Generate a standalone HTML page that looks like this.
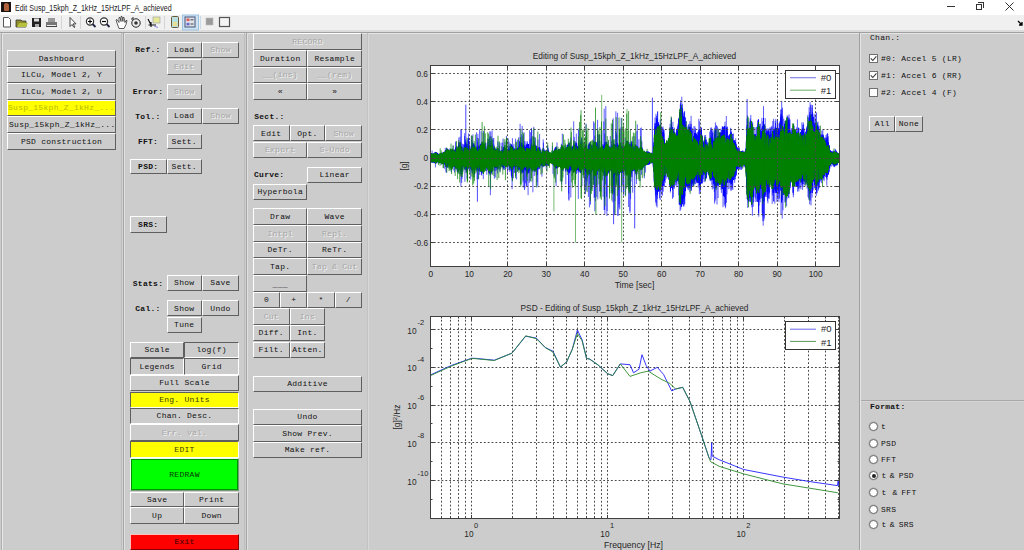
<!DOCTYPE html><html><head><meta charset="utf-8"><style>
*{margin:0;padding:0;box-sizing:border-box}
html,body{width:1024px;height:550px;overflow:hidden;background:#cccccc;position:relative}
.a{position:absolute}
.b{position:absolute;background:#cccccc;border-top:1px solid #fff;border-left:1px solid #fff;border-right:1px solid #5f5f5f;border-bottom:1px solid #5f5f5f;
 font-family:'Liberation Mono', monospace;font-size:8px;letter-spacing:0.27px;color:#111;display:flex;align-items:center;justify-content:center;white-space:pre;line-height:1;padding-top:0.5px}
.p{border-top:1px solid #5f5f5f;border-left:1px solid #5f5f5f;border-right:1px solid #fff;border-bottom:1px solid #fff}
.d{color:#a6a6a6;text-shadow:1px 1px 0 #f4f4f4}
.bo{font-weight:bold}
.l{position:absolute;font-family:'Liberation Mono', monospace;font-size:8px;letter-spacing:0.27px;color:#111;white-space:pre;line-height:1}
</style></head><body><div class="a" style="left:0;top:0;width:1024px;height:15px;background:#fff"></div>
<div class="a" style="left:1px;top:2px;width:10px;height:10px;background:#1a1410"></div>
<div class="a" style="left:4px;top:3px;width:5px;height:8px;background:#b0603a;border-radius:2px 3px 1px 1px"></div>
<div class="a" style="left:14.5px;top:2px;font-family:'Liberation Sans', sans-serif;font-size:9.6px;line-height:11px;color:#222;white-space:pre;transform:scaleX(0.74);transform-origin:0 0">Edit Susp_15kph_Z_1kHz_15HzLPF_A_achieved</div>
<div class="a" style="left:947px;top:6px;width:8px;height:1px;background:#333"></div>
<div class="a" style="left:976px;top:4px;width:6px;height:6px;border:1px solid #333"></div>
<div class="a" style="left:978px;top:2px;width:6px;height:6px;border-top:1px solid #333;border-right:1px solid #333"></div>
<svg class="a" style="left:1005px;top:2px" width="9" height="9"><path d="M0.5 0.5L8.5 8.5M8.5 0.5L0.5 8.5" stroke="#333" stroke-width="1"/></svg>
<div class="a" style="left:0;top:15px;width:1024px;height:16px;background:#f0f0f0"></div>
<div class="a" style="left:0;top:30px;width:1024px;height:2px;background:#dcdcdc"></div>
<div class="a" style="left:0;top:32px;width:1024px;height:1px;background:#a0a0a0"></div>
<svg class="a" style="left:0;top:14px" width="240" height="17">
<path d="M3.5 3.5h5l2 2v7.5h-7z" fill="#fff" stroke="#555"/>
<path d="M16 6h5l1 1h4v6h-10z" fill="#8c8a2a" stroke="#333" stroke-width="0.8"/><path d="M17 13l2-4h9l-2 4z" fill="#b8c040"/>
<rect x="32" y="4" width="9" height="9" fill="#222"/><rect x="34" y="4.5" width="5" height="3" fill="#ddd"/><rect x="35" y="10" width="4" height="3" fill="#aaa"/>
<path d="M46 8h11v4h-11z" fill="#777"/><path d="M48 4h7v4h-7z" fill="#999"/><rect x="47" y="11" width="9" height="2" fill="#eee"/><path d="M46 12.5h11" stroke="#444"/>
<rect x="61" y="2" width="1" height="13" fill="#d4d4d4"/>
<path d="M70 3.5v9l2-2 2 3 1-0.6-2-3h3z" fill="#fff" stroke="#333" stroke-width="0.9"/>
<rect x="80" y="2" width="1" height="13" fill="#d4d4d4"/>
<circle cx="90" cy="7.5" r="3.6" fill="#fff" stroke="#333" stroke-width="1.2"/><path d="M88 7.5h4M90 5.5v4" stroke="#000" stroke-width="1.2"/><path d="M92.5 10l3 3" stroke="#224" stroke-width="1.8"/>
<circle cx="104" cy="7.5" r="3.6" fill="#fff" stroke="#333" stroke-width="1.2"/><path d="M102 7.5h4" stroke="#000" stroke-width="1.2"/><path d="M106.5 10l3 3" stroke="#224" stroke-width="1.8"/>
<path d="M117 9l-1-3 1-0.5 2 3v-5l1 0 1 4v-5h1l1 5 0-4h1l1 5 1-2h1l-1 4-2 4h-5z" fill="#fff" stroke="#333" stroke-width="0.8"/>
<circle cx="136" cy="9" r="4.2" fill="none" stroke="#222" stroke-width="1"/><circle cx="136" cy="9" r="1.8" fill="#333"/><path d="M131 5l2 0 0-2" stroke="#222" fill="none"/>
<rect x="145" y="2" width="1" height="13" fill="#d4d4d4"/>
<rect x="153" y="3" width="7" height="6" fill="#e6e89a" stroke="#999" stroke-width="0.6"/><path d="M148 5l3 6h5M151 8v5M148.5 11h5" stroke="#111" stroke-width="1.2" fill="none"/><path d="M154 12l4 1.5" stroke="#88d" />
<rect x="164" y="2" width="1" height="13" fill="#d4d4d4"/>
<rect x="171.5" y="2.5" width="7" height="11" rx="1" fill="#b8e0e0" stroke="#6b5a3a" stroke-width="1"/><rect x="173" y="8" width="4" height="4" fill="#e8e090"/>
<rect x="182.5" y="1" width="16" height="15" fill="#cfe3f3" stroke="#9cc2e2"/>
<rect x="185" y="3" width="10" height="10" fill="#dfe4ea" stroke="#5a6a8a" stroke-width="1.2"/><rect x="186.5" y="4.5" width="3" height="2.6" fill="#e05a5a"/><rect x="186.5" y="8.8" width="3" height="2.6" fill="#6a6ad0"/><path d="M190.5 5.8h3M190.5 10h3" stroke="#444"/>
<rect x="200" y="2" width="1" height="13" fill="#c9d9e9"/>
<rect x="206" y="4" width="7" height="7" fill="#9a9a9a" stroke="#bbb" stroke-width="0.6"/>
<rect x="219.5" y="3.5" width="10" height="9" fill="#f4f4f4" stroke="#555" stroke-width="1.2"/>
</svg>
<svg class="a" style="left:1017px;top:20px" width="7" height="7"><path d="M1 1l4 4M5 2v3h-3" stroke="#000" stroke-width="1.3" fill="none"/></svg>
<div class="a" style="left:0px;top:33px;width:1024px;height:1px;background:#e6e6e6"></div>
<div class="a" style="left:1px;top:33px;width:1px;height:517px;background:#b0b0b0"></div>
<div class="a" style="left:2px;top:33px;width:1px;height:517px;background:#e6e6e6"></div>
<div class="a" style="left:121px;top:33px;width:1px;height:517px;background:#bdbdbd"></div>
<div class="a" style="left:122px;top:33px;width:1px;height:517px;background:#d2d2d2"></div>
<div class="a" style="left:123px;top:33px;width:1px;height:517px;background:#a6a6a6"></div>
<div class="a" style="left:124px;top:33px;width:1px;height:517px;background:#e0e0e0"></div>
<div class="a" style="left:244px;top:33px;width:1px;height:517px;background:#bfbfbf"></div>
<div class="a" style="left:246px;top:33px;width:1px;height:517px;background:#a6a6a6"></div>
<div class="a" style="left:247px;top:33px;width:1px;height:517px;background:#e0e0e0"></div>
<div class="a" style="left:367px;top:33px;width:1px;height:517px;background:#c2c2c2"></div>
<div class="a" style="left:368px;top:33px;width:1px;height:517px;background:#d8d8d8"></div>
<div class="a" style="left:859px;top:33px;width:1px;height:517px;background:#a0a0a0"></div>
<div class="a" style="left:860px;top:400px;width:164px;height:1px;background:#a8a8a8"></div>
<div class="a" style="left:860px;top:401px;width:164px;height:1px;background:#d6d6d6"></div>
<div class="a" style="left:860px;top:33px;width:1px;height:517px;background:#e4e4e4"></div>
<div class="b " style="left:7px;top:50px;width:109px;height:17px;">Dashboard</div>
<div class="b " style="left:7px;top:67px;width:109px;height:16px;">ILCu, Model 2, Y</div>
<div class="b " style="left:7px;top:83px;width:109px;height:17px;">ILCu, Model 2, U</div>
<div class="b d" style="left:7px;top:100px;width:109px;height:16px;background:#ffff00;color:#b8b800;text-shadow:none;justify-content:flex-start;padding-left:0px">Susp_15kph_Z_1kHz_...</div>
<div class="b " style="left:7px;top:116px;width:109px;height:17px;justify-content:flex-start;padding-left:1px">Susp_15kph_Z_1kHz_...</div>
<div class="b " style="left:7px;top:133px;width:109px;height:16.5px;">PSD construction</div>
<div class="l" style="left:135.3px;top:46.0px;font-weight:bold;">Ref.:</div>
<div class="b " style="left:166.5px;top:42px;width:35.5px;height:15.5px;">Load</div>
<div class="b d" style="left:202px;top:42px;width:37px;height:15.5px;">Show</div>
<div class="b d" style="left:166.5px;top:58.5px;width:35.5px;height:16.0px;">Edit</div>
<div class="l" style="left:132.8px;top:87.8px;font-weight:bold;">Error:</div>
<div class="b d" style="left:166.5px;top:83.5px;width:35.5px;height:16.0px;">Show</div>
<div class="l" style="left:135.3px;top:112.5px;font-weight:bold;">Tol.:</div>
<div class="b " style="left:166.5px;top:108px;width:35.5px;height:16px;">Load</div>
<div class="b d" style="left:202px;top:108px;width:37px;height:16px;">Show</div>
<div class="l" style="left:137.9px;top:137.5px;font-weight:bold;">FFT:</div>
<div class="b " style="left:166.5px;top:133.5px;width:35.5px;height:15.5px;">Sett.</div>
<div class="b bo" style="left:130px;top:158.5px;width:36.5px;height:15.5px;">PSD:</div>
<div class="b " style="left:166.5px;top:158.5px;width:35.5px;height:15.5px;">Sett.</div>
<div class="b bo" style="left:130px;top:216px;width:36.5px;height:16.5px;">SRS:</div>
<div class="l" style="left:132.8px;top:279.5px;font-weight:bold;">Stats:</div>
<div class="b " style="left:166.5px;top:275px;width:35.5px;height:16px;">Show</div>
<div class="b " style="left:202px;top:275px;width:37px;height:16px;">Save</div>
<div class="l" style="left:135.3px;top:304.8px;font-weight:bold;">Cal.:</div>
<div class="b " style="left:166.5px;top:300.3px;width:35.5px;height:16.0px;">Show</div>
<div class="b " style="left:202px;top:300.3px;width:37px;height:16.0px;">Undo</div>
<div class="b " style="left:166.5px;top:317px;width:35.5px;height:16px;">Tune</div>
<div class="b " style="left:130px;top:341.5px;width:54.30000000000001px;height:16.5px;">Scale</div>
<div class="b p" style="left:184.3px;top:341.5px;width:54.69999999999999px;height:16.5px;">log(f)</div>
<div class="b p" style="left:130px;top:358px;width:54.30000000000001px;height:16.5px;">Legends</div>
<div class="b p" style="left:184.3px;top:358px;width:54.69999999999999px;height:16.5px;">Grid</div>
<div class="b " style="left:130px;top:375px;width:109px;height:16.30000000000001px;">Full Scale</div>
<div class="b p" style="left:130px;top:391.5px;width:109px;height:16.19999999999999px;background:#ffff00;color:#3a3a00">Eng. Units</div>
<div class="b p" style="left:130px;top:407.7px;width:109px;height:16.5px;">Chan. Desc.</div>
<div class="b d" style="left:130px;top:424.4px;width:109px;height:16.600000000000023px;">Err. val.</div>
<div class="b p" style="left:130px;top:441px;width:109px;height:17px;background:#ffff00;color:#3a3a00">EDIT</div>
<div class="b" style="left:130px;top:458px;width:109px;height:33px;background:#00ff00;border-color:#eaffea #70a070 #70a070 #eaffea;color:#063a06"><div class="a" style="left:0;top:0;right:0;bottom:0;border:1px solid #009000"></div>REDRAW</div>
<div class="b " style="left:130px;top:491.5px;width:54.30000000000001px;height:15.800000000000011px;">Save</div>
<div class="b " style="left:184.3px;top:491.5px;width:54.69999999999999px;height:15.800000000000011px;">Print</div>
<div class="b " style="left:130px;top:507.3px;width:54.30000000000001px;height:17.099999999999966px;">Up</div>
<div class="b " style="left:184.3px;top:507.3px;width:54.69999999999999px;height:17.099999999999966px;">Down</div>
<div class="b bo" style="left:130px;top:533.5px;width:109px;height:16.0px;background:#ff0000;color:#700000;border-color:#ffc0c0 #800 #800 #ffc0c0">Exit</div>
<div class="b d" style="left:253px;top:33.2px;width:109px;height:16.699999999999996px;">RECORD</div>
<div class="b " style="left:253px;top:50px;width:54.39999999999998px;height:16.5px;">Duration</div>
<div class="b " style="left:307.4px;top:50px;width:54.60000000000002px;height:16.5px;">Resample</div>
<div class="b d" style="left:253px;top:66.5px;width:54.39999999999998px;height:16.5px;">__(ins)</div>
<div class="b d" style="left:307.4px;top:66.5px;width:54.60000000000002px;height:16.5px;">__(rem)</div>
<div class="b " style="left:253px;top:83px;width:54.39999999999998px;height:16.5px;">«</div>
<div class="b " style="left:307.4px;top:83px;width:54.60000000000002px;height:16.5px;">»</div>
<div class="l" style="left:254.2px;top:112.8px;font-weight:bold;">Sect.:</div>
<div class="b " style="left:253px;top:125.2px;width:36.5px;height:16.299999999999997px;">Edit</div>
<div class="b " style="left:289.5px;top:125.2px;width:35.80000000000001px;height:16.299999999999997px;">Opt.</div>
<div class="b d" style="left:325.3px;top:125.2px;width:36.69999999999999px;height:16.299999999999997px;">Show</div>
<div class="b d" style="left:253px;top:141.5px;width:54.39999999999998px;height:16.5px;">Export</div>
<div class="b d" style="left:307.4px;top:141.5px;width:54.60000000000002px;height:16.5px;">S-Undo</div>
<div class="l" style="left:254.0px;top:171.0px;font-weight:bold;">Curve:</div>
<div class="b " style="left:307.4px;top:167.2px;width:54.60000000000002px;height:15.800000000000011px;">Linear</div>
<div class="b " style="left:253px;top:183.8px;width:54.39999999999998px;height:16.0px;">Hyperbola</div>
<div class="b " style="left:253px;top:208.3px;width:54.39999999999998px;height:16.599999999999994px;">Draw</div>
<div class="b " style="left:307.4px;top:208.3px;width:54.60000000000002px;height:16.599999999999994px;">Wave</div>
<div class="b d" style="left:253px;top:224.9px;width:54.39999999999998px;height:16.799999999999983px;">Intpl</div>
<div class="b d" style="left:307.4px;top:224.9px;width:54.60000000000002px;height:16.799999999999983px;">Repl.</div>
<div class="b " style="left:253px;top:241.7px;width:54.39999999999998px;height:16.600000000000023px;">DeTr.</div>
<div class="b " style="left:307.4px;top:241.7px;width:54.60000000000002px;height:16.600000000000023px;">ReTr.</div>
<div class="b " style="left:253px;top:258.3px;width:54.39999999999998px;height:16.69999999999999px;">Tap.</div>
<div class="b d" style="left:307.4px;top:258.3px;width:54.60000000000002px;height:16.69999999999999px;">Tap &amp; Cut</div>
<div class="b " style="left:253px;top:275px;width:54.39999999999998px;height:16.80000000000001px;align-items:flex-end;padding-bottom:2px">___</div>
<div class="b " style="left:253px;top:291.8px;width:27.19999999999999px;height:16.099999999999966px;">0</div>
<div class="b " style="left:280.2px;top:291.8px;width:27.19999999999999px;height:16.099999999999966px;">+</div>
<div class="b " style="left:307.4px;top:291.8px;width:27.30000000000001px;height:16.099999999999966px;">*</div>
<div class="b " style="left:334.7px;top:291.8px;width:27.30000000000001px;height:16.099999999999966px;">/</div>
<div class="b d" style="left:253px;top:308px;width:36.5px;height:16.899999999999977px;">Cut</div>
<div class="b d" style="left:289.5px;top:308px;width:35.80000000000001px;height:16.899999999999977px;">Ins</div>
<div class="b " style="left:253px;top:324.9px;width:36.5px;height:16.600000000000023px;">Diff.</div>
<div class="b " style="left:289.5px;top:324.9px;width:35.80000000000001px;height:16.600000000000023px;">Int.</div>
<div class="b " style="left:253px;top:341.5px;width:36.5px;height:16.5px;">Filt.</div>
<div class="b " style="left:289.5px;top:341.5px;width:35.80000000000001px;height:16.5px;">Atten.</div>
<div class="b " style="left:253px;top:375.8px;width:109px;height:16.0px;">Additive</div>
<div class="b " style="left:253px;top:408.8px;width:109px;height:16.5px;">Undo</div>
<div class="b " style="left:253px;top:425.3px;width:109px;height:16.80000000000001px;">Show Prev.</div>
<div class="b " style="left:253px;top:442.1px;width:109px;height:16.0px;">Make ref.</div>
<div class="l" style="left:870.0px;top:34.2px;">Chan.:</div>
<div class="a" style="left:869px;top:53.9px;width:9px;height:9px;background:#fff;border:1px solid #707070"></div>
<svg class="a" style="left:869px;top:53.9px" width="9" height="9"><path d="M1.8 4.3l2 2.2 3.6-4.2" stroke="#3a3a3a" stroke-width="1.1" fill="none"/></svg>
<div class="l" style="left:881.0px;top:54.9px;">#0: Accel 5 (LR)</div>
<div class="a" style="left:869px;top:70.9px;width:9px;height:9px;background:#fff;border:1px solid #707070"></div>
<svg class="a" style="left:869px;top:70.9px" width="9" height="9"><path d="M1.8 4.3l2 2.2 3.6-4.2" stroke="#3a3a3a" stroke-width="1.1" fill="none"/></svg>
<div class="l" style="left:881.0px;top:71.9px;">#1: Accel 6 (RR)</div>
<div class="a" style="left:869px;top:87.7px;width:9px;height:9px;background:#fff;border:1px solid #707070"></div>
<div class="l" style="left:881.0px;top:88.7px;">#2: Accel 4 (F)</div>
<div class="b " style="left:869.4px;top:116px;width:25.800000000000068px;height:16.30000000000001px;">All</div>
<div class="b " style="left:895.2px;top:116px;width:27.5px;height:16.30000000000001px;">None</div>
<div class="l" style="left:870.0px;top:403.3px;font-weight:bold;">Format:</div>
<div class="a" style="left:869px;top:421.9px;width:9px;height:9px;border-radius:50%;background:#fff;border:1px solid #6a6a6a;box-shadow:0 0 0 0.5px #aaa"></div>
<div class="l" style="left:881px;top:422.9px">t</div>
<div class="a" style="left:869px;top:438.7px;width:9px;height:9px;border-radius:50%;background:#fff;border:1px solid #6a6a6a;box-shadow:0 0 0 0.5px #aaa"></div>
<div class="l" style="left:881px;top:439.7px">PSD</div>
<div class="a" style="left:869px;top:455.1px;width:9px;height:9px;border-radius:50%;background:#fff;border:1px solid #6a6a6a;box-shadow:0 0 0 0.5px #aaa"></div>
<div class="l" style="left:881px;top:456.1px">FFT</div>
<div class="a" style="left:869px;top:471.3px;width:9px;height:9px;border-radius:50%;background:#fff;border:1px solid #6a6a6a;box-shadow:0 0 0 0.5px #aaa"></div>
<div class="a" style="left:871.5px;top:473.8px;width:4px;height:4px;border-radius:50%;background:#222"></div>
<div class="l" style="left:881.5px;top:472.3px">t</div>
<div class="l" style="left:889.8px;top:472.3px">&amp;</div>
<div class="l" style="left:898.7px;top:472.3px">PSD</div>
<div class="a" style="left:869px;top:487.7px;width:9px;height:9px;border-radius:50%;background:#fff;border:1px solid #6a6a6a;box-shadow:0 0 0 0.5px #aaa"></div>
<div class="l" style="left:881.5px;top:488.7px">t</div>
<div class="l" style="left:892.4px;top:488.7px">&amp;</div>
<div class="l" style="left:901.3px;top:488.7px">FFT</div>
<div class="a" style="left:869px;top:504.5px;width:9px;height:9px;border-radius:50%;background:#fff;border:1px solid #6a6a6a;box-shadow:0 0 0 0.5px #aaa"></div>
<div class="l" style="left:881px;top:505.5px">SRS</div>
<div class="a" style="left:869px;top:519.9px;width:9px;height:9px;border-radius:50%;background:#fff;border:1px solid #6a6a6a;box-shadow:0 0 0 0.5px #aaa"></div>
<div class="l" style="left:881.5px;top:520.9px">t</div>
<div class="l" style="left:889.8px;top:520.9px">&amp;</div>
<div class="l" style="left:898.7px;top:520.9px">SRS</div>
<svg class="a" style="left:0;top:0" width="1024" height="550"><rect x="430" y="65" width="410" height="202" fill="#fff"/>
<clipPath id="c1"><rect x="430" y="65" width="410" height="202"/></clipPath>
<g clip-path="url(#c1)">
<polyline points="430.8,161.3 430.9,155.0 431.1,159.3 431.2,154.1 431.4,160.5 431.5,153.5 431.7,161.7 431.8,153.9 431.9,161.1 432.1,162.1 432.2,161.0 432.4,155.3 432.5,160.5 432.7,154.7 432.8,161.7 432.9,155.3 433.1,162.1 433.2,153.4 433.4,159.7 433.5,154.0 433.7,154.3 433.8,160.4 433.9,155.4 434.1,163.1 434.2,155.8 434.4,162.7 434.5,154.5 434.7,161.2 434.8,154.5 434.9,160.0 435.1,155.3 435.2,152.7 435.4,159.7 435.5,152.3 435.6,162.9 435.8,152.6 435.9,163.2 436.1,152.6 436.2,162.0 436.4,153.2 436.5,161.9 436.6,152.9 436.8,162.4 436.9,153.0 437.1,160.6 437.2,153.3 437.4,161.5 437.5,161.3 437.6,153.8 437.8,160.8 437.9,154.7 438.1,154.8 438.2,161.7 438.4,156.1 438.5,159.4 438.6,154.3 438.8,160.5 438.9,155.8 439.1,162.1 439.2,159.8 439.4,154.3 439.5,162.4 439.6,154.3 439.8,161.9 439.9,161.6 440.1,154.5 440.2,162.3 440.4,155.1 440.5,162.4 440.6,153.5 440.8,162.0 440.9,155.1 441.1,155.6 441.2,161.9 441.4,154.2 441.5,162.0 441.6,154.3 441.8,155.2 441.9,154.4 442.1,162.6 442.2,154.8 442.4,162.0 442.5,154.1 442.6,163.0 442.8,153.4 442.9,161.5 443.1,155.0 443.2,163.1 443.3,157.0 443.5,152.5 443.6,162.5 443.8,153.5 443.9,161.1 444.1,164.0 444.2,154.2 444.3,163.2 444.5,154.8 444.6,164.2 444.8,152.7 444.9,162.0 445.1,151.7 445.2,151.9 445.3,164.6 445.5,153.8 445.6,164.7 445.8,150.0 445.9,166.3 446.1,152.4 446.2,166.7 446.3,149.9 446.5,162.6 446.6,148.9 446.8,164.5 446.9,152.2 447.1,164.8 447.2,148.7 447.3,167.2 447.5,165.9 447.6,151.1 447.8,160.7 447.9,153.4 448.1,164.2 448.2,153.8 448.3,164.2 448.5,152.2 448.6,151.7 448.8,160.7 448.9,152.9 449.1,162.0 449.2,155.7 449.3,161.4 449.5,152.3 449.6,164.0 449.8,152.0 449.9,162.2 450.1,153.8 450.2,161.4 450.3,154.9 450.5,150.5 450.6,163.1 450.8,166.1 450.9,152.3 451.0,165.2 451.2,150.8 451.3,152.4 451.5,149.8 451.6,167.7 451.8,152.5 451.9,166.8 452.0,150.7 452.2,151.6 452.3,149.8 452.5,150.7 452.6,164.3 452.8,153.9 452.9,166.3 453.0,154.0 453.2,161.3 453.3,153.9 453.5,164.0 453.6,151.2 453.8,161.9 453.9,151.3 454.0,164.6 454.2,154.6 454.3,165.7 454.5,151.0 454.6,162.9 454.8,164.8 454.9,161.4 455.0,149.9 455.2,166.1 455.3,151.6 455.5,166.2 455.6,148.2 455.8,166.1 455.9,152.6 456.0,165.0 456.2,148.5 456.3,163.4 456.5,149.4 456.6,166.0 456.8,150.0 456.9,168.1 457.0,153.2 457.2,169.4 457.3,149.9 457.5,169.1 457.6,153.4 457.8,166.4 457.9,152.4 458.0,168.6 458.2,170.4 458.3,165.8 458.5,147.3 458.6,169.9 458.8,145.4 458.9,168.8 459.0,146.4 459.2,168.5 459.3,145.4 459.5,144.9 459.6,169.5 459.7,147.9 459.9,145.4 460.0,169.8 460.2,153.6 460.3,167.2 460.5,170.6 460.6,150.0 460.7,152.2 460.9,167.4 461.0,146.7 461.2,148.0 461.3,170.3 461.5,146.1 461.6,154.4 461.7,147.9 461.9,164.2 462.0,152.7 462.2,167.9 462.3,152.3 462.5,165.3 462.6,150.2 462.7,164.2 462.9,164.1 463.0,151.4 463.2,165.2 463.3,152.6 463.5,162.6 463.6,151.2 463.7,153.6 463.9,163.5 464.0,149.3 464.2,164.0 464.3,153.1 464.5,161.7 464.6,146.9 464.7,168.5 464.9,153.8 465.0,165.4 465.2,149.7 465.3,167.4 465.5,168.3 465.6,145.6 465.7,165.4 465.9,169.9 466.0,148.9 466.2,166.2 466.3,146.0 466.5,171.1 466.6,153.8 466.7,161.5 466.9,151.9 467.0,165.3 467.2,165.6 467.3,146.8 467.4,149.7 467.6,169.8 467.7,165.7 467.9,148.1 468.0,169.0 468.2,148.0 468.3,160.8 468.4,149.9 468.6,164.7 468.7,148.7 468.9,166.7 469.0,149.5 469.2,167.4 469.3,160.7 469.4,162.4 469.6,153.1 469.7,165.2 469.9,163.4 470.0,151.3 470.2,164.8 470.3,152.9 470.4,163.3 470.6,154.8 470.7,165.7 470.9,150.8 471.0,168.1 471.2,149.9 471.3,169.2 471.4,145.8 471.6,167.2 471.7,146.2 471.9,152.0 472.0,167.3 472.2,147.7 472.3,147.3 472.4,164.5 472.6,154.9 472.7,169.5 472.9,167.4 473.0,144.2 473.2,162.7 473.3,149.6 473.4,148.0 473.6,161.3 473.7,149.6 473.9,168.4 474.0,149.0 474.2,170.9 474.3,146.0 474.4,168.6 474.6,150.1 474.7,168.4 474.9,156.3 475.0,167.4 475.1,153.2 475.3,151.7 475.4,165.1 475.6,152.2 475.7,167.8 475.9,148.6 476.0,166.8 476.1,148.4 476.3,167.4 476.4,148.7 476.6,169.1 476.7,148.2 476.9,153.2 477.0,168.9 477.1,146.9 477.3,168.8 477.4,151.7 477.6,167.1 477.7,150.4 477.9,163.0 478.0,162.2 478.1,151.9 478.3,165.8 478.4,148.3 478.6,163.4 478.7,146.0 478.9,165.8 479.0,149.5 479.1,150.0 479.3,147.4 479.4,169.4 479.6,149.0 479.7,167.3 479.9,145.9 480.0,163.4 480.1,146.5 480.3,155.0 480.4,168.4 480.6,144.1 480.7,171.4 480.9,163.0 481.0,150.1 481.1,171.3 481.3,149.4 481.4,164.6 481.6,161.6 481.7,146.4 481.9,166.7 482.0,147.2 482.1,146.8 482.3,144.0 482.4,170.4 482.6,145.2 482.7,168.3 482.9,168.7 483.0,150.0 483.1,166.6 483.3,146.4 483.4,163.0 483.6,149.0 483.7,167.7 483.8,149.3 484.0,164.8 484.1,165.9 484.3,147.2 484.4,167.2 484.6,147.8 484.7,159.4 484.8,147.9 485.0,164.9 485.1,151.8 485.3,165.7 485.4,148.9 485.6,166.9 485.7,149.2 485.8,166.2 486.0,152.4 486.1,165.0 486.3,163.6 486.4,152.9 486.6,165.7 486.7,165.1 486.8,148.9 487.0,162.9 487.1,154.0 487.3,162.7 487.4,168.8 487.6,168.1 487.7,151.2 487.8,167.1 488.0,164.0 488.1,148.2 488.3,170.6 488.4,146.1 488.6,167.0 488.7,153.3 488.8,149.4 489.0,169.5 489.1,171.2 489.3,148.4 489.4,163.5 489.6,170.1 489.7,173.3 489.8,173.2 490.0,145.1 490.1,173.2 490.3,145.7 490.4,159.0 490.6,147.5 490.7,170.9 490.8,166.4 491.0,148.9 491.1,150.0 491.3,172.1 491.4,147.6 491.5,172.1 491.7,145.2 491.8,169.3 492.0,155.7 492.1,170.6 492.3,166.2 492.4,152.7 492.5,169.6 492.7,151.4 492.8,164.9 493.0,148.7 493.1,163.7 493.3,150.1 493.4,150.8 493.5,163.2 493.7,149.2 493.8,163.4 494.0,150.9 494.1,165.4 494.3,151.2 494.4,167.5 494.5,150.7 494.7,165.9 494.8,150.8 495.0,158.8 495.1,154.5 495.3,167.5 495.4,149.3 495.5,151.0 495.7,163.0 495.8,166.2 496.0,149.4 496.1,164.3 496.3,167.3 496.4,167.1 496.5,166.0 496.7,149.5 496.8,150.1 497.0,160.2 497.1,149.8 497.3,166.3 497.4,148.7 497.5,164.3 497.7,149.6 497.8,167.4 498.0,152.9 498.1,164.6 498.3,150.7 498.4,164.9 498.5,155.4 498.7,163.4 498.8,152.1 499.0,155.5 499.1,163.7 499.2,151.5 499.4,164.8 499.5,155.0 499.7,164.1 499.8,153.6 500.0,164.8 500.1,153.7 500.2,164.5 500.4,163.4 500.5,164.7 500.7,153.6 500.8,164.5 501.0,151.3 501.1,164.8 501.2,150.4 501.4,165.4 501.5,151.0 501.7,165.1 501.8,161.8 502.0,151.5 502.1,165.0 502.2,150.4 502.4,166.5 502.5,152.7 502.7,164.2 502.8,152.3 503.0,162.8 503.1,150.8 503.2,166.7 503.4,151.7 503.5,166.6 503.7,147.6 503.8,168.2 504.0,150.8 504.1,165.6 504.2,147.3 504.4,161.5 504.5,146.8 504.7,165.4 504.8,148.6 505.0,165.3 505.1,153.3 505.2,165.2 505.4,148.7 505.5,165.6 505.7,149.8 505.8,160.4 506.0,152.9 506.1,166.7 506.2,150.5 506.4,149.3 506.5,163.9 506.7,161.3 506.8,154.5 507.0,165.7 507.1,153.5 507.2,164.9 507.4,155.1 507.5,165.1 507.7,155.9 507.8,164.3 507.9,151.1 508.1,164.7 508.2,150.8 508.4,160.9 508.5,149.9 508.7,165.4 508.8,155.6 508.9,153.9 509.1,164.7 509.2,152.0 509.4,160.7 509.5,149.8 509.7,166.9 509.8,153.5 509.9,165.3 510.1,151.2 510.2,165.2 510.4,147.7 510.5,167.8 510.7,153.3 510.8,150.2 510.9,148.3 511.1,168.7 511.2,146.4 511.4,170.6 511.5,145.3 511.7,146.6 511.8,170.8 511.9,149.0 512.1,169.2 512.2,149.2 512.4,154.1 512.5,167.6 512.7,148.2 512.8,167.5 512.9,147.5 513.1,148.8 513.2,159.8 513.4,154.8 513.5,164.2 513.7,151.4 513.8,165.1 513.9,150.3 514.1,164.6 514.2,163.0 514.4,155.1 514.5,166.9 514.7,150.5 514.8,162.9 514.9,155.0 515.1,163.7 515.2,155.6 515.4,153.0 515.5,164.3 515.6,154.4 515.8,163.9 515.9,150.6 516.1,165.1 516.2,150.9 516.4,163.8 516.5,149.8 516.6,163.8 516.8,150.5 516.9,166.9 517.1,152.3 517.2,166.9 517.4,150.1 517.5,167.9 517.6,166.2 517.8,154.2 517.9,147.9 518.1,167.6 518.2,148.8 518.4,168.1 518.5,150.0 518.6,166.9 518.8,150.0 518.9,162.9 519.1,146.1 519.2,169.5 519.4,164.8 519.5,167.6 519.6,146.2 519.8,167.1 519.9,149.4 520.1,161.6 520.2,149.1 520.4,167.9 520.5,145.2 520.6,171.4 520.8,146.8 520.9,150.5 521.1,169.1 521.2,143.6 521.4,167.2 521.5,170.3 521.6,149.9 521.8,169.9 521.9,148.2 522.1,161.7 522.2,146.9 522.4,167.5 522.5,144.8 522.6,168.6 522.8,145.0 522.9,171.6 523.1,147.0 523.2,165.7 523.3,149.9 523.5,168.2 523.6,148.4 523.8,166.6 523.9,147.5 524.1,165.2 524.2,145.4 524.3,169.8 524.5,165.4 524.6,147.2 524.8,167.5 524.9,164.5 525.1,147.0 525.2,168.4 525.3,154.3 525.5,167.9 525.6,148.2 525.8,164.5 525.9,153.0 526.1,170.4 526.2,147.4 526.3,169.6 526.5,145.5 526.6,147.9 526.8,167.6 526.9,144.4 527.1,172.4 527.2,168.6 527.3,148.4 527.5,168.4 527.6,148.1 527.8,168.9 527.9,144.2 528.1,163.0 528.2,150.9 528.3,164.7 528.5,144.0 528.6,166.7 528.8,170.9 528.9,153.5 529.1,159.0 529.2,149.4 529.3,148.2 529.5,166.7 529.6,150.9 529.8,149.8 529.9,167.8 530.1,151.0 530.2,165.5 530.3,149.6 530.5,162.9 530.6,166.2 530.8,165.1 530.9,149.0 531.1,164.6 531.2,149.2 531.3,148.1 531.5,166.4 531.6,166.3 531.8,156.7 531.9,163.3 532.0,146.5 532.2,161.2 532.3,148.2 532.5,162.3 532.6,166.2 532.8,169.9 532.9,147.2 533.0,168.7 533.2,146.4 533.3,162.2 533.5,152.0 533.6,164.1 533.8,168.5 533.9,147.1 534.0,147.4 534.2,151.1 534.3,151.9 534.5,146.4 534.6,169.9 534.8,145.2 534.9,161.7 535.0,146.6 535.2,146.3 535.3,170.4 535.5,149.6 535.6,164.9 535.8,148.7 535.9,167.7 536.0,169.9 536.2,149.4 536.3,162.4 536.5,149.4 536.6,168.4 536.8,149.1 536.9,168.1 537.0,153.8 537.2,166.2 537.3,149.2 537.5,167.7 537.6,166.5 537.8,152.6 537.9,168.7 538.0,149.9 538.2,166.9 538.3,149.0 538.5,164.8 538.6,148.7 538.8,166.0 538.9,147.9 539.0,165.3 539.2,148.5 539.3,165.8 539.5,149.5 539.6,168.6 539.7,148.4 539.9,149.6 540.0,149.7 540.2,162.1 540.3,151.1 540.5,162.8 540.6,150.5 540.7,152.5 540.9,161.2 541.0,153.8 541.2,161.8 541.3,152.4 541.5,165.1 541.6,154.8 541.7,165.5 541.9,152.8 542.0,164.1 542.2,157.0 542.3,165.2 542.5,151.5 542.6,165.5 542.7,150.0 542.9,165.1 543.0,156.6 543.2,165.9 543.3,151.4 543.5,162.6 543.6,150.6 543.7,166.5 543.9,166.6 544.0,150.4 544.2,165.4 544.3,163.6 544.5,151.0 544.6,165.4 544.7,151.2 544.9,164.4 545.0,153.4 545.2,165.5 545.3,156.6 545.5,164.9 545.6,152.7 545.7,160.3 545.9,153.3 546.0,164.4 546.2,163.7 546.3,153.3 546.5,161.2 546.6,153.5 546.7,162.2 546.9,164.0 547.0,153.3 547.2,160.9 547.3,152.9 547.4,164.9 547.6,152.1 547.7,164.8 547.9,154.5 548.0,152.5 548.2,164.2 548.3,153.0 548.4,165.0 548.6,150.9 548.7,163.9 548.9,152.3 549.0,161.0 549.2,155.7 549.3,152.9 549.4,163.4 549.6,154.4 549.7,161.6 549.9,154.3 550.0,154.0 550.2,160.1 550.3,154.0 550.4,161.6 550.6,155.6 550.7,161.9 550.9,157.2 551.0,154.9 551.2,161.4 551.3,155.8 551.4,161.9 551.6,153.5 551.7,160.5 551.9,153.8 552.0,161.9 552.2,153.4 552.3,162.5 552.4,153.5 552.6,153.4 552.7,161.2 552.9,159.7 553.0,154.5 553.2,160.4 553.3,151.6 553.4,164.3 553.6,151.3 553.7,165.3 553.9,154.4 554.0,162.8 554.2,152.9 554.3,160.9 554.4,150.0 554.6,165.5 554.7,150.7 554.9,164.6 555.0,149.9 555.1,166.4 555.3,147.9 555.4,164.5 555.6,168.1 555.7,147.8 555.9,165.9 556.0,147.8 556.1,161.9 556.3,154.1 556.4,166.8 556.6,151.8 556.7,168.0 556.9,151.1 557.0,167.3 557.1,152.9 557.3,165.6 557.4,155.1 557.6,164.0 557.7,154.8 557.9,162.4 558.0,155.9 558.1,166.7 558.3,151.0 558.4,161.4 558.6,149.5 558.7,161.0 558.9,149.9 559.0,163.6 559.1,150.9 559.3,162.7 559.4,150.6 559.6,164.7 559.7,152.2 559.9,161.9 560.0,154.2 560.1,164.3 560.3,152.4 560.4,152.5 560.6,166.2 560.7,162.7 560.9,151.1 561.0,167.0 561.1,152.4 561.3,167.6 561.4,152.1 561.6,162.9 561.7,149.9 561.9,165.1 562.0,154.0 562.1,163.9 562.3,148.3 562.4,166.4 562.6,167.7 562.7,149.0 562.9,153.2 563.0,165.2 563.1,149.0 563.3,164.2 563.4,148.6 563.6,166.6 563.7,151.5 563.8,163.3 564.0,151.8 564.1,160.4 564.3,150.4 564.4,165.4 564.6,157.1 564.7,161.7 564.8,151.5 565.0,151.6 565.1,150.0 565.3,162.7 565.4,150.7 565.6,165.0 565.7,151.6 565.8,164.9 566.0,152.2 566.1,162.7 566.3,147.5 566.4,168.9 566.6,147.4 566.7,168.5 566.8,147.1 567.0,168.1 567.1,149.2 567.3,170.8 567.4,149.2 567.6,171.3 567.7,169.9 567.8,145.4 568.0,171.6 568.1,154.1 568.3,168.8 568.4,150.4 568.6,171.0 568.7,152.4 568.8,168.9 569.0,152.3 569.1,172.4 569.3,170.9 569.4,145.9 569.6,172.5 569.7,148.8 569.8,161.6 570.0,149.9 570.1,168.5 570.3,150.1 570.4,163.8 570.6,147.4 570.7,161.4 570.8,153.8 571.0,164.6 571.1,169.8 571.3,169.8 571.4,150.3 571.5,160.7 571.7,168.1 571.8,159.6 572.0,156.2 572.1,168.0 572.3,148.0 572.4,168.9 572.5,147.0 572.7,164.6 572.8,152.3 573.0,170.6 573.1,163.8 573.3,167.8 573.4,161.6 573.5,147.5 573.7,161.8 573.8,145.5 574.0,168.8 574.1,146.2 574.3,170.7 574.4,144.8 574.5,171.4 574.7,146.2 574.8,168.9 575.0,148.4 575.1,169.2 575.3,169.8 575.4,147.2 575.5,165.9 575.7,147.0 575.8,162.8 576.0,143.5 576.1,164.7 576.3,143.3 576.4,170.8 576.5,145.1 576.7,170.1 576.8,146.5 577.0,169.9 577.1,146.9 577.3,165.4 577.4,146.2 577.5,169.9 577.7,149.2 577.8,168.6 578.0,150.3 578.1,169.4 578.3,147.7 578.4,170.7 578.5,148.8 578.7,170.1 578.8,153.6 579.0,171.2 579.1,145.8 579.2,164.1 579.4,150.8 579.5,167.0 579.7,154.9 579.8,162.0 580.0,149.0 580.1,165.5 580.2,146.0 580.4,168.6 580.5,146.7 580.7,172.4 580.8,144.2 581.0,172.2 581.1,148.6 581.2,171.8 581.4,146.6 581.5,168.7 581.7,150.9 581.8,169.4 582.0,148.8 582.1,151.3 582.2,165.6 582.4,149.0 582.5,167.1 582.7,152.2 582.8,166.5 583.0,165.3 583.1,150.4 583.2,163.5 583.4,155.2 583.5,163.8 583.7,152.9 583.8,165.3 584.0,151.8 584.1,165.3 584.2,152.1 584.4,155.2 584.5,165.2 584.7,151.6 584.8,149.6 585.0,167.1 585.1,147.2 585.2,166.1 585.4,145.5 585.5,164.8 585.7,169.2 585.8,170.5 586.0,148.0 586.1,164.7 586.2,146.4 586.4,162.6 586.5,152.6 586.7,165.5 586.8,149.6 587.0,166.3 587.1,149.5 587.2,171.3 587.4,152.8 587.5,151.3 587.7,170.6 587.8,149.0 587.9,167.1 588.1,149.1 588.2,170.3 588.4,148.6 588.5,171.6 588.7,147.5 588.8,146.3 588.9,151.5 589.1,173.1 589.2,147.6 589.4,166.4 589.5,148.2 589.7,144.0 589.8,169.4 589.9,144.8 590.1,174.0 590.2,156.2 590.4,174.7 590.5,167.7 590.7,145.3 590.8,172.6 590.9,144.5 591.1,169.7 591.2,145.8 591.4,171.9 591.5,153.5 591.7,162.7 591.8,152.3 591.9,170.5 592.1,148.7 592.2,161.3 592.4,152.5 592.5,161.2 592.7,150.3 592.8,169.9 592.9,148.7 593.1,146.7 593.2,165.1 593.4,146.2 593.5,169.4 593.7,147.0 593.8,165.6 593.9,147.6 594.1,166.1 594.2,146.5 594.4,163.9 594.5,148.0 594.7,172.1 594.8,154.6 594.9,174.9 595.1,167.6 595.2,172.1 595.4,146.8 595.5,146.7 595.6,175.6 595.8,148.9 595.9,172.0 596.1,145.2 596.2,168.2 596.4,150.5 596.5,172.8 596.6,172.5 596.8,149.0 596.9,174.9 597.1,150.0 597.2,151.0 597.4,171.0 597.5,149.5 597.6,168.2 597.8,169.8 597.9,151.8 598.1,147.4 598.2,153.1 598.4,170.6 598.5,149.4 598.6,169.1 598.8,169.0 598.9,148.2 599.1,163.9 599.2,168.4 599.4,153.3 599.5,161.7 599.6,162.7 599.8,153.7 599.9,153.4 600.1,167.9 600.2,151.8 600.4,168.2 600.5,150.5 600.6,165.7 600.8,149.2 600.9,164.3 601.1,150.1 601.2,169.8 601.4,152.2 601.5,169.8 601.6,147.4 601.8,162.4 601.9,153.2 602.1,164.9 602.2,147.5 602.4,149.3 602.5,167.2 602.6,152.9 602.8,146.3 602.9,171.8 603.1,145.5 603.2,172.0 603.3,168.4 603.5,172.8 603.6,146.3 603.8,171.9 603.9,150.2 604.1,166.6 604.2,173.6 604.3,144.3 604.5,172.5 604.6,148.2 604.8,167.5 604.9,168.4 605.1,152.3 605.2,172.1 605.3,175.6 605.5,149.5 605.6,172.2 605.8,146.7 605.9,169.4 606.1,163.6 606.2,170.7 606.3,172.6 606.5,142.6 606.6,170.8 606.8,144.2 606.9,173.0 607.1,149.2 607.2,171.2 607.3,151.3 607.5,171.0 607.6,173.9 607.8,148.3 607.9,170.0 608.1,146.7 608.2,171.4 608.3,148.7 608.5,166.9 608.6,147.0 608.8,172.0 608.9,149.3 609.1,163.2 609.2,148.6 609.3,170.9 609.5,152.5 609.6,169.2 609.8,151.4 609.9,164.8 610.1,154.3 610.2,161.3 610.3,148.1 610.5,160.0 610.6,149.1 610.8,168.5 610.9,148.7 611.1,150.7 611.2,148.4 611.3,170.6 611.5,149.0 611.6,165.6 611.8,147.9 611.9,171.5 612.0,172.0 612.2,145.4 612.3,152.9 612.5,169.5 612.6,148.8 612.8,173.3 612.9,147.6 613.0,145.3 613.2,152.1 613.3,165.2 613.5,175.3 613.6,143.9 613.8,171.4 613.9,144.5 614.0,171.3 614.2,144.8 614.3,144.7 614.5,150.5 614.6,172.3 614.8,147.3 614.9,174.2 615.0,146.4 615.2,167.6 615.3,145.4 615.5,170.7 615.6,144.9 615.8,173.7 615.9,149.0 616.0,174.5 616.2,145.9 616.3,169.7 616.5,145.1 616.6,147.6 616.8,173.8 616.9,146.9 617.0,171.1 617.2,147.5 617.3,169.6 617.5,145.1 617.6,171.4 617.8,145.5 617.9,168.5 618.0,146.1 618.2,174.4 618.3,146.7 618.5,173.8 618.6,149.4 618.8,145.1 618.9,171.0 619.0,146.4 619.2,164.0 619.3,145.9 619.5,169.9 619.6,146.7 619.7,166.4 619.9,147.5 620.0,173.0 620.2,146.5 620.3,149.8 620.5,171.4 620.6,146.8 620.7,164.2 620.9,146.9 621.0,146.2 621.2,169.1 621.3,172.4 621.5,160.4 621.6,149.7 621.7,172.5 621.9,150.0 622.0,163.8 622.2,151.2 622.3,168.6 622.5,169.4 622.6,152.3 622.7,171.7 622.9,147.1 623.0,166.2 623.2,149.8 623.3,151.7 623.5,167.9 623.6,151.2 623.7,169.4 623.9,150.0 624.0,168.7 624.2,149.1 624.3,165.1 624.5,149.3 624.6,166.8 624.7,154.3 624.9,163.8 625.0,165.4 625.2,169.7 625.3,148.9 625.5,165.8 625.6,148.9 625.7,171.8 625.9,147.9 626.0,174.0 626.2,146.2 626.3,161.5 626.5,149.0 626.6,142.5 626.7,167.8 626.9,152.7 627.0,145.3 627.2,141.1 627.3,147.5 627.4,165.9 627.6,141.5 627.7,170.4 627.9,147.7 628.0,172.3 628.2,149.4 628.3,171.7 628.4,147.8 628.6,169.4 628.7,173.1 628.9,152.1 629.0,164.5 629.2,168.6 629.3,146.2 629.4,169.3 629.6,161.4 629.7,148.6 629.9,174.7 630.0,143.9 630.2,147.9 630.3,173.3 630.4,145.7 630.6,171.6 630.7,144.8 630.9,171.5 631.0,174.0 631.2,144.8 631.3,169.3 631.4,149.5 631.6,165.9 631.7,145.6 631.9,166.7 632.0,145.2 632.2,171.3 632.3,145.8 632.4,154.3 632.6,163.9 632.7,145.9 632.9,168.9 633.0,152.3 633.2,147.3 633.3,148.4 633.4,168.5 633.6,150.2 633.7,166.2 633.9,160.6 634.0,149.0 634.2,167.4 634.3,160.8 634.4,150.4 634.6,167.7 634.7,147.6 634.9,167.5 635.0,170.3 635.2,148.1 635.3,165.1 635.4,152.5 635.6,171.8 635.7,145.2 635.9,168.0 636.0,147.1 636.1,173.9 636.3,150.8 636.4,159.9 636.6,148.5 636.7,168.7 636.9,150.4 637.0,169.5 637.1,168.2 637.3,147.0 637.4,164.8 637.6,149.3 637.7,167.7 637.9,168.4 638.0,149.5 638.1,166.1 638.3,153.8 638.4,165.4 638.6,153.6 638.7,163.3 638.9,154.7 639.0,163.7 639.1,152.7 639.3,166.2 639.4,166.6 639.6,151.2 639.7,163.6 639.9,148.7 640.0,168.5 640.1,149.8 640.3,169.2 640.4,165.7 640.6,148.6 640.7,169.6 640.9,148.0 641.0,167.1 641.1,150.7 641.3,168.6 641.4,149.4 641.6,167.0 641.7,147.9 641.9,166.7 642.0,148.6 642.1,165.6 642.3,169.0 642.4,152.9 642.6,167.0 642.7,151.9 642.9,162.3 643.0,157.2 643.1,165.1 643.3,153.9 643.4,165.5 643.6,152.9 643.7,163.8 643.8,165.8 644.0,153.4 644.1,165.0 644.3,153.2 644.4,153.1 644.6,163.0 644.7,154.2 644.8,164.7 645.0,164.7 645.1,152.9 645.3,164.0 645.4,153.8 645.6,163.7 645.7,153.7 645.8,163.1 646.0,153.8 646.1,161.8 646.3,152.1 646.4,164.8 646.6,154.7 646.7,162.3 646.8,151.7 647.0,164.9 647.1,155.2 647.3,164.8 647.4,152.5 647.6,161.4 647.7,165.0 647.8,154.6 648.0,153.5 648.1,164.6 648.3,163.8 648.4,154.3 648.6,163.8 648.7,152.2 648.8,152.0 649.0,154.7 649.1,152.3 649.3,163.9 649.4,152.8 649.6,163.4 649.7,153.3 649.8,160.6 650.0,155.8 650.1,161.4 650.3,156.8 650.4,160.0 650.6,153.5 650.7,162.1 650.8,154.9 651.0,163.3 651.1,153.4 651.3,161.9 651.4,153.2 651.5,162.9 651.7,154.0 651.8,160.6 652.0,154.0 652.1,153.7 652.3,162.1 652.4,155.9 652.5,161.3 652.7,154.2 652.8,161.7 653.0,154.8 653.1,160.7 653.3,157.1 653.4,164.3 653.5,156.4 653.7,167.4 653.8,145.4 654.0,171.9 654.1,146.2 654.3,142.3 654.4,182.5 654.5,133.6 654.7,173.6 654.8,140.9 655.0,181.6 655.1,123.2 655.3,190.1 655.4,126.3 655.5,177.7 655.7,127.4 655.8,162.9 656.0,138.0 656.1,179.0 656.3,146.5 656.4,188.0 656.5,125.9 656.7,182.9 656.8,118.4 657.0,132.2 657.1,192.0 657.3,120.9 657.4,194.7 657.5,119.8 657.7,163.9 657.8,143.0 658.0,122.1 658.1,190.2 658.3,124.2 658.4,124.2 658.5,191.5 658.7,143.6 658.8,187.1 659.0,128.6 659.1,189.0 659.3,133.1 659.4,188.4 659.5,186.4 659.7,131.4 659.8,127.4 660.0,126.3 660.1,182.9 660.2,135.1 660.4,183.9 660.5,127.8 660.7,171.4 660.8,129.9 661.0,137.0 661.1,176.3 661.2,137.7 661.4,170.0 661.5,128.3 661.7,131.7 661.8,134.5 662.0,147.2 662.1,180.8 662.2,132.3 662.4,185.8 662.5,146.7 662.7,185.9 662.8,136.8 663.0,154.2 663.1,185.8 663.2,132.4 663.4,180.6 663.5,135.3 663.7,175.0 663.8,180.9 664.0,157.9 664.1,174.2 664.2,139.1 664.4,181.2 664.5,149.0 664.7,174.3 664.8,143.4 665.0,150.7 665.1,169.1 665.2,169.9 665.4,173.6 665.5,150.5 665.7,165.8 665.8,151.9 666.0,173.2 666.1,144.7 666.2,150.3 666.4,170.9 666.5,144.2 666.7,143.8 666.8,172.9 667.0,164.9 667.1,145.9 667.2,165.6 667.4,171.0 667.5,164.0 667.7,150.6 667.8,167.0 667.9,150.1 668.1,150.1 668.2,166.4 668.4,145.7 668.5,147.7 668.7,169.9 668.8,153.9 668.9,171.0 669.1,143.7 669.2,179.4 669.4,137.7 669.5,174.5 669.7,146.5 669.8,176.0 669.9,131.9 670.1,186.0 670.2,132.7 670.4,169.6 670.5,190.9 670.7,131.8 670.8,129.5 670.9,183.3 671.1,129.8 671.2,183.0 671.4,177.3 671.5,124.7 671.7,188.1 671.8,128.4 671.9,144.3 672.1,185.9 672.2,127.0 672.4,174.6 672.5,189.6 672.7,146.0 672.8,186.7 672.9,144.4 673.1,141.2 673.2,181.3 673.4,135.1 673.5,130.5 673.7,177.6 673.8,178.1 673.9,136.3 674.1,178.9 674.2,167.3 674.4,137.0 674.5,173.9 674.7,140.2 674.8,178.7 674.9,135.7 675.1,178.3 675.2,156.7 675.4,162.6 675.5,146.6 675.6,175.0 675.8,142.3 675.9,168.8 676.1,137.4 676.2,175.7 676.4,140.3 676.5,172.8 676.6,138.8 676.8,179.1 676.9,150.6 677.1,173.1 677.2,180.0 677.4,143.4 677.5,180.9 677.6,176.0 677.8,131.7 677.9,172.6 678.1,135.1 678.2,180.6 678.4,142.7 678.5,178.6 678.6,130.2 678.8,165.8 678.9,182.5 679.1,119.4 679.2,195.2 679.4,183.9 679.5,121.3 679.6,201.2 679.8,112.3 679.9,193.8 680.1,121.3 680.2,205.0 680.4,130.3 680.5,177.4 680.6,112.6 680.8,193.7 680.9,114.1 681.1,190.3 681.2,107.4 681.4,190.0 681.5,113.2 681.6,206.8 681.8,136.1 681.9,116.8 682.1,201.2 682.2,109.5 682.4,187.6 682.5,112.8 682.6,204.2 682.8,119.6 682.9,181.7 683.1,116.3 683.2,177.9 683.4,132.8 683.5,188.5 683.6,116.8 683.8,198.4 683.9,130.3 684.1,196.9 684.2,180.7 684.3,119.5 684.5,124.2 684.6,195.7 684.8,124.7 684.9,189.6 685.1,179.4 685.2,128.3 685.3,135.9 685.5,191.1 685.6,179.2 685.8,126.7 685.9,148.7 686.1,129.8 686.2,185.3 686.3,136.6 686.5,163.6 686.6,133.6 686.8,186.5 686.9,138.5 687.1,182.7 687.2,129.9 687.3,182.2 687.5,135.6 687.6,177.4 687.8,135.1 687.9,186.0 688.1,144.4 688.2,184.9 688.3,135.1 688.5,185.8 688.6,135.5 688.8,181.5 688.9,182.4 689.1,127.2 689.2,179.4 689.3,129.8 689.5,187.7 689.6,126.8 689.8,181.4 689.9,178.8 690.1,143.7 690.2,182.4 690.3,130.6 690.5,127.5 690.6,129.9 690.8,172.2 690.9,149.0 691.1,184.5 691.2,134.0 691.3,152.4 691.5,149.5 691.6,176.3 691.8,130.7 691.9,151.0 692.0,183.3 692.2,146.1 692.3,183.2 692.5,144.3 692.6,176.5 692.8,146.2 692.9,183.3 693.0,139.3 693.2,170.1 693.3,145.4 693.5,180.6 693.6,137.5 693.8,164.6 693.9,176.8 694.0,136.2 694.2,139.4 694.3,181.3 694.5,133.0 694.6,168.3 694.8,133.1 694.9,152.5 695.0,166.6 695.2,143.1 695.3,171.2 695.5,175.2 695.6,133.5 695.8,138.3 695.9,179.7 696.0,135.8 696.2,172.7 696.3,133.9 696.5,181.4 696.6,174.1 696.8,145.1 696.9,172.2 697.0,142.5 697.2,181.0 697.3,141.0 697.5,182.6 697.6,135.7 697.8,149.2 697.9,175.2 698.0,138.2 698.2,183.0 698.3,165.4 698.5,133.2 698.6,181.1 698.8,181.2 698.9,135.9 699.0,177.4 699.2,130.4 699.3,179.5 699.5,176.0 699.6,185.1 699.7,145.3 699.9,171.9 700.0,129.2 700.2,168.4 700.3,139.9 700.5,188.7 700.6,180.2 700.7,141.4 700.9,173.8 701.0,131.4 701.2,127.6 701.3,177.6 701.5,129.8 701.6,183.2 701.7,141.3 701.9,183.2 702.0,136.2 702.2,148.1 702.3,175.9 702.5,145.6 702.6,175.9 702.7,164.6 702.9,142.8 703.0,149.8 703.2,154.2 703.3,171.5 703.5,161.1 703.6,172.7 703.7,151.3 703.9,141.8 704.0,169.2 704.2,169.3 704.3,144.6 704.5,174.0 704.6,140.9 704.7,172.4 704.9,146.0 705.0,140.2 705.2,174.1 705.3,143.2 705.5,179.5 705.6,174.7 705.7,140.6 705.9,176.7 706.0,139.6 706.2,164.2 706.3,173.3 706.5,143.7 706.6,168.0 706.7,147.9 706.9,169.1 707.0,144.8 707.2,171.5 707.3,155.5 707.5,167.9 707.6,149.5 707.7,168.1 707.9,151.8 708.0,166.4 708.2,150.6 708.3,167.5 708.4,166.3 708.6,149.0 708.7,166.2 708.9,145.9 709.0,174.9 709.2,165.0 709.3,154.0 709.4,170.5 709.6,141.0 709.7,177.1 709.9,145.7 710.0,178.1 710.2,145.0 710.3,180.1 710.4,176.6 710.6,143.8 710.7,176.5 710.9,137.8 711.0,180.3 711.2,140.4 711.3,146.7 711.4,173.4 711.6,143.6 711.7,178.2 711.9,173.5 712.0,138.1 712.2,145.4 712.3,180.1 712.4,147.4 712.6,138.3 712.7,145.6 712.9,178.4 713.0,153.0 713.2,174.1 713.3,150.0 713.4,169.7 713.6,142.6 713.7,183.5 713.9,140.1 714.0,179.2 714.2,140.8 714.3,174.2 714.4,139.1 714.6,165.7 714.7,148.9 714.9,175.3 715.0,134.0 715.2,185.4 715.3,130.7 715.4,173.6 715.6,130.5 715.7,184.4 715.9,142.8 716.0,188.2 716.1,145.4 716.3,187.0 716.4,142.9 716.6,175.5 716.7,140.3 716.9,170.8 717.0,142.6 717.1,171.3 717.3,139.9 717.4,185.0 717.6,140.2 717.7,177.2 717.9,136.2 718.0,185.9 718.1,142.9 718.3,170.7 718.4,144.3 718.6,137.9 718.7,183.9 718.9,138.8 719.0,175.8 719.1,135.9 719.3,179.0 719.4,173.1 719.6,137.4 719.7,137.4 719.9,184.2 720.0,181.7 720.1,150.1 720.3,180.2 720.4,132.9 720.6,177.1 720.7,183.1 720.9,133.4 721.0,164.1 721.1,132.3 721.3,184.2 721.4,138.2 721.6,174.6 721.7,136.0 721.9,177.5 722.0,130.1 722.1,188.2 722.3,139.1 722.4,188.9 722.6,127.3 722.7,182.6 722.9,127.8 723.0,187.3 723.1,149.0 723.3,175.3 723.4,195.8 723.6,129.2 723.7,194.8 723.8,179.1 724.0,126.9 724.1,186.1 724.3,126.5 724.4,197.0 724.6,132.9 724.7,173.7 724.8,126.3 725.0,161.2 725.1,181.7 725.3,144.4 725.4,185.8 725.6,143.4 725.7,178.7 725.8,180.0 726.0,182.1 726.1,187.5 726.3,127.8 726.4,183.9 726.6,175.4 726.7,128.3 726.8,169.4 727.0,138.6 727.1,182.7 727.3,137.6 727.4,169.2 727.6,173.1 727.7,137.1 727.8,182.6 728.0,135.6 728.1,172.5 728.3,138.5 728.4,171.1 728.6,140.2 728.7,176.5 728.8,141.5 729.0,168.6 729.1,136.6 729.3,177.8 729.4,135.5 729.6,178.1 729.7,148.8 729.8,182.7 730.0,133.9 730.1,141.2 730.3,181.5 730.4,143.3 730.6,175.9 730.7,135.2 730.8,140.9 731.0,184.2 731.1,132.3 731.3,174.8 731.4,139.7 731.6,183.6 731.7,173.3 731.8,138.2 732.0,179.5 732.1,133.9 732.3,179.6 732.4,145.8 732.5,182.3 732.7,140.8 732.8,177.3 733.0,146.4 733.1,179.9 733.3,146.9 733.4,179.9 733.5,150.9 733.7,140.4 733.8,176.3 734.0,166.4 734.1,161.1 734.3,142.5 734.4,173.3 734.5,140.5 734.7,145.3 734.8,176.7 735.0,142.3 735.1,167.2 735.3,146.1 735.4,169.3 735.5,142.4 735.7,169.2 735.8,169.4 736.0,144.2 736.1,170.5 736.3,146.1 736.4,146.7 736.5,165.7 736.7,147.7 736.8,169.7 737.0,147.3 737.1,152.3 737.3,169.0 737.4,148.5 737.5,163.8 737.7,152.7 737.8,165.7 738.0,155.5 738.1,163.2 738.3,152.1 738.4,167.7 738.5,151.2 738.7,166.8 738.8,152.6 739.0,166.2 739.1,149.9 739.3,162.9 739.4,153.7 739.5,164.2 739.7,155.9 739.8,164.0 740.0,164.6 740.1,152.9 740.2,164.8 740.4,152.1 740.5,165.2 740.7,155.7 740.8,165.5 741.0,153.2 741.1,167.2 741.2,151.1 741.4,152.8 741.5,166.3 741.7,151.3 741.8,165.6 742.0,151.2 742.1,164.8 742.2,152.5 742.4,154.2 742.5,152.1 742.7,164.8 742.8,152.6 743.0,161.6 743.1,152.3 743.2,161.9 743.4,155.5 743.5,161.7 743.7,164.2 743.8,153.5 744.0,163.4 744.1,153.5 744.2,163.4 744.4,153.4 744.5,152.3 744.7,164.7 744.8,154.0 745.0,160.1 745.1,151.6 745.2,166.6 745.4,165.7 745.5,151.7 745.7,164.5 745.8,156.0 746.0,168.5 746.1,149.3 746.2,173.8 746.4,140.7 746.5,174.8 746.7,136.0 746.8,188.3 747.0,135.6 747.1,193.7 747.2,128.6 747.4,124.9 747.5,184.2 747.7,199.6 747.8,127.9 747.9,142.7 748.1,129.6 748.2,183.5 748.4,139.5 748.5,200.9 748.7,133.2 748.8,169.7 748.9,135.1 749.1,185.9 749.2,129.8 749.4,184.4 749.5,129.3 749.7,191.2 749.8,136.1 749.9,198.0 750.1,131.8 750.2,192.6 750.4,137.7 750.5,176.3 750.7,143.9 750.8,179.2 750.9,133.3 751.1,201.4 751.2,124.6 751.4,183.8 751.5,204.7 751.7,126.0 751.8,178.9 751.9,146.2 752.1,123.6 752.2,193.4 752.4,129.5 752.5,192.0 752.7,127.4 752.8,193.8 752.9,139.5 753.1,139.8 753.2,183.6 753.4,195.1 753.5,140.8 753.7,196.7 753.8,137.7 753.9,175.5 754.1,136.7 754.2,168.6 754.4,137.5 754.5,175.7 754.7,134.3 754.8,181.6 754.9,150.7 755.1,186.8 755.2,151.5 755.4,189.8 755.5,188.7 755.6,134.3 755.8,189.0 755.9,136.8 756.1,177.7 756.2,151.3 756.4,171.3 756.5,184.5 756.6,153.7 756.8,174.0 756.9,182.6 757.1,140.0 757.2,184.5 757.4,137.7 757.5,193.5 757.6,133.6 757.8,201.9 757.9,132.6 758.1,186.8 758.2,123.6 758.4,190.8 758.5,119.7 758.6,201.5 758.8,132.9 758.9,183.2 759.1,126.4 759.2,196.0 759.4,126.5 759.5,199.7 759.6,144.5 759.8,163.8 759.9,137.7 760.1,129.6 760.2,189.1 760.4,178.3 760.5,136.6 760.6,171.1 760.8,185.5 760.9,140.8 761.1,188.0 761.2,168.1 761.4,134.2 761.5,134.1 761.6,131.1 761.8,178.1 761.9,131.4 762.1,198.2 762.2,127.6 762.4,195.6 762.5,128.5 762.6,201.9 762.8,126.1 762.9,198.9 763.1,129.8 763.2,121.2 763.4,198.9 763.5,118.1 763.6,183.7 763.8,136.1 763.9,201.4 764.1,124.2 764.2,147.5 764.3,196.8 764.5,125.2 764.6,136.0 764.8,177.6 764.9,133.3 765.1,196.6 765.2,137.0 765.3,183.2 765.5,138.0 765.6,138.6 765.8,172.5 765.9,135.6 766.1,164.3 766.2,185.9 766.3,185.8 766.5,133.3 766.6,174.4 766.8,139.8 766.9,130.8 767.1,166.6 767.2,132.2 767.3,192.0 767.5,135.3 767.6,174.3 767.8,141.5 767.9,183.8 768.1,134.8 768.2,191.5 768.3,130.6 768.5,177.0 768.6,183.9 768.8,131.5 768.9,182.9 769.1,140.3 769.2,181.6 769.3,179.8 769.5,147.0 769.6,134.8 769.8,137.6 769.9,171.1 770.1,137.7 770.2,177.7 770.3,146.9 770.5,174.4 770.6,135.0 770.8,176.6 770.9,138.8 771.1,164.8 771.2,184.8 771.3,139.5 771.5,174.0 771.6,143.5 771.8,184.5 771.9,140.0 772.0,184.4 772.2,133.8 772.3,170.0 772.5,134.8 772.6,188.7 772.8,149.3 772.9,131.0 773.0,192.2 773.2,192.7 773.3,138.1 773.5,188.4 773.6,130.7 773.8,192.7 773.9,137.0 774.0,149.7 774.2,172.3 774.3,154.0 774.5,189.1 774.6,129.1 774.8,173.3 774.9,135.1 775.0,179.8 775.2,127.4 775.3,190.1 775.5,128.9 775.6,189.1 775.8,191.2 775.9,135.5 776.0,193.0 776.2,139.4 776.3,192.9 776.5,128.1 776.6,162.6 776.8,182.7 776.9,138.1 777.0,186.5 777.2,185.5 777.3,140.7 777.5,180.9 777.6,135.0 777.8,167.8 777.9,132.3 778.0,189.5 778.2,142.1 778.3,190.1 778.5,128.6 778.6,139.9 778.8,181.5 778.9,171.4 779.0,165.9 779.2,140.8 779.3,185.7 779.5,130.6 779.6,186.7 779.7,136.0 779.9,185.1 780.0,148.4 780.2,123.7 780.3,185.3 780.5,127.6 780.6,124.9 780.7,185.4 780.9,190.7 781.0,117.3 781.2,137.5 781.3,164.9 781.5,124.1 781.6,202.5 781.7,163.2 781.9,200.4 782.0,126.3 782.2,191.4 782.3,190.9 782.5,133.0 782.6,172.4 782.7,130.7 782.9,185.5 783.0,147.4 783.2,195.0 783.3,134.4 783.5,171.3 783.6,128.8 783.7,181.2 783.9,127.2 784.0,181.4 784.2,143.8 784.3,165.0 784.5,123.8 784.6,168.5 784.7,189.7 784.9,124.2 785.0,178.7 785.2,120.9 785.3,193.0 785.5,136.3 785.6,139.9 785.7,186.2 785.9,123.3 786.0,187.7 786.2,132.3 786.3,182.3 786.5,138.7 786.6,195.0 786.7,137.5 786.9,184.4 787.0,183.7 787.2,120.8 787.3,191.7 787.5,131.6 787.6,188.9 787.7,134.3 787.9,178.3 788.0,127.8 788.2,145.6 788.3,182.1 788.4,181.8 788.6,119.9 788.7,194.0 788.9,123.4 789.0,185.9 789.2,149.2 789.3,187.0 789.4,149.7 789.6,189.8 789.7,130.1 789.9,182.8 790.0,142.8 790.2,179.7 790.3,134.6 790.4,179.0 790.6,136.4 790.7,167.2 790.9,179.7 791.0,147.0 791.2,176.7 791.3,137.0 791.4,170.8 791.6,138.6 791.7,177.9 791.9,144.3 792.0,174.3 792.2,143.0 792.3,167.2 792.4,129.6 792.6,181.1 792.7,139.4 792.9,181.6 793.0,138.4 793.2,184.1 793.3,131.4 793.4,182.9 793.6,129.6 793.7,180.9 793.9,157.2 794.0,181.3 794.2,173.0 794.3,132.9 794.4,185.3 794.6,136.5 794.7,183.5 794.9,139.6 795.0,164.8 795.2,134.6 795.3,172.2 795.4,173.0 795.6,146.5 795.7,179.7 795.9,150.7 796.0,177.7 796.1,178.6 796.3,133.5 796.4,184.8 796.6,134.7 796.7,186.0 796.9,134.4 797.0,131.7 797.1,183.4 797.3,151.6 797.4,185.2 797.6,175.8 797.7,186.9 797.9,137.4 798.0,181.0 798.1,135.0 798.3,183.4 798.4,135.8 798.6,178.7 798.7,127.8 798.9,173.2 799.0,135.9 799.1,172.0 799.3,150.2 799.4,177.0 799.6,175.2 799.7,137.9 799.9,151.6 800.0,180.8 800.1,169.6 800.3,132.5 800.4,174.8 800.6,132.6 800.7,173.9 800.9,141.5 801.0,174.6 801.1,132.1 801.3,182.4 801.4,130.1 801.6,177.9 801.7,148.3 801.9,164.2 802.0,146.7 802.1,178.7 802.3,181.4 802.4,180.0 802.6,166.0 802.7,128.5 802.9,184.0 803.0,147.6 803.1,174.0 803.3,131.7 803.4,180.6 803.6,135.4 803.7,180.4 803.8,144.0 804.0,170.1 804.1,180.6 804.3,137.2 804.4,168.1 804.6,139.6 804.7,171.1 804.8,138.6 805.0,175.7 805.1,140.2 805.3,167.5 805.4,171.5 805.6,136.7 805.7,180.0 805.8,181.5 806.0,131.8 806.1,178.4 806.3,131.6 806.4,181.5 806.6,147.5 806.7,183.0 806.8,129.7 807.0,179.5 807.1,133.1 807.3,183.3 807.4,173.4 807.6,185.4 807.7,125.8 807.8,179.0 808.0,123.5 808.1,139.3 808.3,179.4 808.4,132.5 808.6,184.1 808.7,185.9 808.8,129.8 809.0,190.8 809.1,117.6 809.3,184.8 809.4,126.6 809.6,172.7 809.7,193.9 809.8,127.3 810.0,185.5 810.1,124.0 810.3,170.9 810.4,116.4 810.6,123.4 810.7,192.7 810.8,115.0 811.0,186.4 811.1,178.3 811.3,120.8 811.4,167.2 811.6,124.8 811.7,168.9 811.8,122.8 812.0,178.9 812.1,114.2 812.3,193.0 812.4,114.3 812.5,188.6 812.7,139.4 812.8,181.7 813.0,116.9 813.1,181.1 813.3,134.1 813.4,169.1 813.5,132.0 813.7,175.1 813.8,130.5 814.0,181.5 814.1,175.0 814.3,125.0 814.4,179.0 814.5,153.1 814.7,184.7 814.8,122.8 815.0,124.0 815.1,188.2 815.3,140.1 815.4,187.6 815.5,167.9 815.7,178.9 815.8,140.6 816.0,172.2 816.1,138.3 816.3,184.2 816.4,147.6 816.5,188.2 816.7,128.3 816.8,174.7 817.0,140.6 817.1,185.7 817.3,128.9 817.4,180.8 817.5,125.2 817.7,184.6 817.8,132.4 818.0,172.1 818.1,127.2 818.3,182.6 818.4,131.7 818.5,177.8 818.7,132.9 818.8,182.7 819.0,137.8 819.1,179.0 819.3,143.7 819.4,169.9 819.5,135.3 819.7,181.3 819.8,143.0 820.0,172.8 820.1,175.1 820.2,138.3 820.4,165.7 820.5,154.3 820.7,174.2 820.8,134.6 821.0,176.3 821.1,178.3 821.2,141.2 821.4,179.7 821.5,178.0 821.7,140.5 821.8,179.5 822.0,135.6 822.1,168.7 822.2,149.4 822.4,175.6 822.5,162.4 822.7,135.7 822.8,176.2 823.0,136.1 823.1,178.2 823.2,137.1 823.4,177.9 823.5,175.7 823.7,172.5 823.8,148.3 824.0,169.8 824.1,146.3 824.2,170.0 824.4,145.5 824.5,176.1 824.7,145.5 824.8,166.5 825.0,143.7 825.1,167.6 825.2,141.1 825.4,172.9 825.5,141.8 825.7,173.3 825.8,151.8 826.0,139.7 826.1,168.8 826.2,140.9 826.4,173.2 826.5,143.2 826.7,141.9 826.8,141.7 827.0,176.9 827.1,138.0 827.2,175.1 827.4,142.7 827.5,165.8 827.7,139.7 827.8,173.1 827.9,172.5 828.1,148.6 828.2,170.9 828.4,142.6 828.5,174.5 828.7,146.7 828.8,171.5 828.9,147.7 829.1,167.8 829.2,145.9 829.4,148.0 829.5,166.3 829.7,168.4 829.8,163.1 829.9,152.4 830.1,166.1 830.2,155.8 830.4,150.6 830.5,163.8 830.7,153.7 830.8,161.2 830.9,153.8 831.1,162.3 831.2,163.0 831.4,151.2 831.5,161.2 831.7,153.6 831.8,163.5 831.9,164.0 832.1,155.0 832.2,164.0 832.4,152.0 832.5,161.1 832.7,162.5 832.8,156.0 832.9,161.3 833.1,153.1 833.2,163.9 833.4,151.4 833.5,165.0 833.7,151.8 833.8,164.8 833.9,153.1 834.1,163.0 834.2,155.1 834.4,165.4 834.5,154.4 834.7,161.4 834.8,155.9 834.9,163.1 835.1,155.7 835.2,155.2 835.4,164.9 835.5,155.5 835.7,164.1 835.8,153.6 835.9,163.4 836.1,160.9 836.2,151.6 836.4,164.8 836.5,155.8 836.6,161.3 836.8,152.2 836.9,164.4 837.1,152.6 837.2,154.1 837.4,161.6 837.5,155.0 837.6,161.7 837.8,153.0 837.9,155.3 838.1,161.5 838.2,156.9 838.4,161.8 838.5,154.3 838.6,156.0 838.8,162.6 838.9,155.7 839.1,160.8" fill="none" stroke="#0000ff" stroke-width="0.9" stroke-opacity="1" stroke-linejoin="bevel"/>
<path d="M431.2 159.4V162.4M431.7 159.4V162.9M431.8 156.6V153.2M432.1 156.7V150.5M432.4 159.4V162.7M432.5 159.4V162.4M433.2 159.4V162.5M434.8 156.3V151.9M435.4 160.0V167.4M436.8 159.7V163.6M436.9 156.5V152.4M437.5 156.7V153.1M438.1 159.4V162.6M438.4 159.4V162.7M438.8 156.7V153.4M438.9 159.5V162.8M439.8 159.5V163.2M439.9 159.5V163.1M440.4 156.7V153.3M440.6 159.5V162.9M441.4 159.5V164.9M441.8 156.6V152.7M441.9 159.6V163.6M442.1 156.6V152.3M442.2 159.6V163.1M442.5 159.6V163.6M442.9 159.7V164.1M443.1 156.5V152.1M443.6 156.4V152.3M444.1 159.9V164.4M444.3 160.0V168.8M444.3 156.2V151.3M445.3 155.9V147.8M445.3 155.9V150.2M445.9 160.6V171.7M445.9 155.6V149.8M446.1 160.6V167.1M446.3 160.8V173.0M446.3 160.8V167.1M446.9 155.2V148.1M447.2 160.9V167.9M447.8 155.6V149.2M448.3 160.3V165.8M448.5 156.0V150.1M448.6 156.1V149.8M448.8 156.1V151.1M449.8 156.2V148.5M449.9 156.1V151.0M451.3 161.0V172.3M451.5 161.0V168.9M451.6 161.1V169.2M451.9 161.0V168.5M452.6 160.7V167.9M452.9 155.6V149.1M453.0 155.7V145.6M453.2 155.7V149.6M453.3 155.8V149.8M453.6 160.3V166.2M453.8 160.2V170.6M453.9 156.1V151.0M454.2 160.3V165.8M454.5 160.4V172.5M454.6 155.7V149.7M454.8 160.6V166.7M454.9 160.7V167.1M455.0 155.4V149.0M455.5 155.2V141.5M455.5 161.0V168.2M455.6 161.1V168.2M455.8 155.0V147.2M455.9 161.2V169.1M456.0 154.9V147.3M456.3 154.7V146.2M456.9 154.5V145.9M457.2 161.8V171.6M457.3 161.8V172.0M457.5 161.9V171.4M457.9 162.0V171.8M458.2 162.1V171.7M458.5 154.0V142.1M458.8 153.9V137.5M458.8 153.9V143.5M459.0 162.3V174.0M459.7 153.8V142.7M460.0 153.8V136.7M460.3 153.7V142.0M460.7 162.5V174.5M460.9 162.5V186.4M461.0 153.9V129.2M461.0 153.9V142.5M461.2 154.0V129.7M461.5 161.9V170.9M461.6 161.7V174.3M461.7 161.6V182.9M462.0 161.3V178.8M462.2 155.0V146.8M462.3 161.0V168.2M462.5 160.9V170.2M462.5 160.9V167.4M462.6 155.5V143.7M462.6 160.7V167.9M462.9 160.5V172.0M463.2 160.3V166.6M463.5 160.5V166.5M463.7 155.4V144.1M463.9 160.9V167.8M464.0 155.2V145.0M464.0 155.2V147.9M464.2 161.1V168.3M464.6 154.7V136.1M464.7 154.6V133.2M464.7 154.6V146.2M464.9 161.7V181.8M465.0 154.3V144.3M465.3 154.1V143.8M465.6 154.0V141.5M465.7 154.0V139.4M465.9 154.0V144.3M466.0 154.0V141.6M466.0 154.0V143.0M466.2 162.2V172.2M466.3 154.0V144.0M466.6 154.0V144.3M466.9 162.2V172.6M467.0 162.2V178.3M467.2 154.0V144.4M467.7 154.0V144.1M467.9 154.1V138.5M468.0 154.2V140.1M468.4 154.6V137.8M468.6 154.7V133.5M468.7 154.8V138.6M469.3 161.0V171.2M469.4 155.3V141.0M469.4 155.3V148.4M470.4 160.8V167.3M470.6 161.0V168.9M470.7 161.1V179.5M470.7 155.1V147.6M470.9 161.3V168.9M471.3 154.5V135.8M471.3 154.5V146.0M471.4 161.9V171.1M471.7 154.0V140.0M471.9 162.3V172.8M472.4 153.4V142.3M472.6 162.7V173.8M472.7 153.5V142.9M472.9 153.6V134.4M473.6 154.0V143.3M473.7 154.0V143.2M474.2 162.0V177.1M474.3 161.9V173.9M474.6 161.7V174.8M474.6 154.5V145.1M474.7 154.5V144.3M475.0 161.7V170.2M476.0 161.5V170.3M476.6 154.7V132.3M477.1 161.5V179.3M477.1 161.5V169.7M477.3 154.7V137.8M477.3 161.5V170.2M477.7 154.6V141.9M477.9 154.6V133.8M478.0 161.6V170.9M478.4 154.5V145.4M478.6 161.7V179.3M478.9 161.8V170.7M479.1 161.8V170.7M479.6 154.2V129.3M479.6 162.0V171.7M479.7 162.0V174.9M480.0 154.1V144.4M481.0 153.7V143.3M481.1 153.6V131.2M481.4 162.7V174.9M481.7 162.7V175.5M481.7 162.7V173.7M481.9 153.6V142.5M482.0 162.5V173.0M482.3 153.8V142.6M482.4 162.3V172.5M482.4 153.9V142.6M482.6 154.0V143.2M482.6 154.0V143.0M483.0 154.2V144.6M483.3 161.9V179.1M483.4 154.4V145.6M483.6 154.5V130.9M483.6 161.7V171.4M483.7 161.7V170.5M484.3 154.8V146.2M484.4 161.3V169.4M484.6 161.3V169.5M484.8 161.2V168.7M485.1 155.1V147.4M485.3 155.2V144.9M485.4 155.2V142.4M485.6 155.3V148.5M485.8 160.8V168.7M486.0 155.5V142.9M486.3 155.5V148.9M486.4 160.8V171.0M486.7 161.0V167.7M486.8 161.1V174.8M487.1 155.0V147.2M487.7 154.6V138.7M487.7 154.6V146.2M487.8 154.5V142.3M488.3 154.2V143.9M488.4 154.1V139.1M488.6 162.2V173.2M488.7 162.2V171.9M488.8 162.3V172.1M489.1 162.4V172.7M489.3 162.5V173.2M489.6 153.6V137.1M489.8 153.4V131.2M490.0 162.8V175.5M490.1 153.3V140.8M490.4 163.0V195.2M490.6 163.0V174.8M490.8 153.1V131.6M491.0 163.0V174.6M491.1 153.3V136.1M491.3 162.7V173.7M491.7 162.3V172.6M492.1 154.2V130.4M492.3 161.9V171.8M492.7 154.7V146.5M492.8 154.8V140.1M493.1 155.1V138.1M493.7 155.1V148.1M493.8 155.1V138.0M494.0 155.1V144.7M494.0 155.1V147.7M494.1 155.2V147.4M494.4 161.0V178.7M494.5 155.2V147.8M494.7 161.0V170.9M494.7 161.0V167.9M495.0 161.0V168.2M495.3 155.3V147.8M495.4 160.9V167.9M495.5 160.9V167.9M495.7 160.9V177.5M496.0 160.9V171.0M496.0 160.9V167.6M496.3 160.9V167.6M496.4 161.0V168.3M496.5 161.0V168.2M497.0 161.0V170.2M497.1 155.2V148.5M497.3 161.0V168.6M497.5 161.0V173.5M497.5 161.0V168.1M497.7 155.2V141.4M497.7 155.2V148.5M498.5 160.7V169.4M498.8 155.6V149.0M499.0 155.7V142.7M499.4 155.8V145.9M499.4 155.8V150.2M499.8 160.3V170.0M500.0 160.2V171.8M501.1 155.8V142.6M501.1 160.4V165.9M501.2 160.4V166.3M501.8 160.5V167.1M502.2 160.6V166.8M502.7 155.4V142.8M502.7 155.4V148.6M503.0 155.3V138.5M503.1 161.0V168.6M503.2 161.1V168.1M503.5 155.0V147.2M504.0 161.4V170.1M504.1 161.5V169.9M504.5 154.5V145.9M505.0 154.6V141.8M505.8 161.2V169.0M506.4 155.3V135.9M506.7 155.4V148.9M507.2 155.6V149.2M507.4 160.6V166.9M507.5 160.6V174.8M507.7 155.6V149.7M507.8 155.6V149.0M508.2 155.6V138.4M508.2 155.6V149.0M508.4 155.6V146.8M508.7 155.6V149.6M508.8 160.6V170.3M508.8 155.6V149.4M509.1 155.6V141.7M509.1 160.6V166.4M509.4 155.6V149.7M509.5 155.5V148.6M509.7 155.4V145.8M509.7 155.4V148.9M509.8 160.9V172.1M509.8 160.9V167.9M509.9 161.0V170.1M509.9 155.2V147.5M510.4 154.9V143.3M510.5 154.8V146.0M511.1 154.3V145.0M511.2 162.0V175.6M511.2 162.0V171.1M511.4 154.1V144.0M511.5 162.2V177.8M511.5 154.0V144.4M511.7 162.2V175.9M512.1 162.0V189.2M512.1 162.0V171.1M512.2 161.9V180.7M512.4 154.4V138.1M512.7 154.6V146.0M512.7 154.6V145.8M512.8 154.7V145.9M513.1 161.4V169.6M513.2 161.3V169.1M513.4 161.2V178.3M513.9 155.4V143.8M514.2 160.8V173.1M514.2 155.4V148.3M514.4 155.4V148.6M514.5 160.8V167.1M514.8 160.8V172.9M514.8 160.8V167.1M515.2 160.8V167.9M515.4 155.4V148.6M515.6 155.5V138.7M515.8 160.7V167.2M516.6 160.8V179.5M516.6 155.4V149.1M516.8 155.4V148.3M517.1 160.9V167.6M517.2 155.2V148.5M517.4 155.2V139.9M517.4 155.2V148.0M517.6 161.1V169.3M517.8 161.2V168.8M518.1 161.3V168.9M518.4 154.9V146.7M518.4 161.3V169.1M518.5 161.4V169.3M518.6 161.5V170.2M518.6 161.5V169.9M518.8 154.7V146.4M518.9 154.6V137.2M519.2 161.8V171.4M519.4 154.3V141.6M519.5 154.2V141.1M519.9 154.0V144.1M520.1 153.9V123.8M520.2 153.8V143.2M520.4 153.8V143.4M520.5 153.7V143.1M520.8 162.7V174.8M520.9 162.7V173.5M521.5 153.6V142.1M521.6 153.6V134.4M521.8 162.5V173.2M521.9 153.7V143.2M522.1 162.5V173.0M522.2 153.7V125.9M522.8 162.3V173.0M522.9 153.9V136.4M523.1 162.3V182.3M523.3 162.2V187.4M523.3 162.2V172.4M523.5 162.2V173.0M524.1 154.2V132.4M524.2 154.3V145.2M524.3 154.3V141.2M524.5 161.8V190.0M524.8 161.7V170.3M524.9 161.7V188.5M525.6 161.6V183.4M525.9 154.4V141.3M525.9 154.4V145.3M526.1 161.9V171.5M526.2 154.2V144.3M526.6 162.3V186.1M526.8 162.4V186.4M527.1 153.6V142.8M527.3 162.8V174.1M527.5 162.9V174.1M527.6 153.3V141.3M528.1 162.8V195.1M528.5 162.4V172.6M528.6 162.2V173.2M528.8 162.1V171.5M528.9 162.0V173.3M529.1 161.8V171.6M529.2 161.7V170.7M529.3 161.6V182.9M529.3 161.6V170.3M529.5 161.4V169.5M529.6 154.9V130.1M529.8 155.0V147.2M529.9 155.1V148.2M530.2 155.2V139.2M530.3 161.0V181.4M530.6 155.0V132.1M530.6 155.0V147.8M530.8 154.9V144.4M530.9 161.3V169.7M531.1 154.8V146.2M531.3 154.6V137.8M531.3 161.6V169.7M531.5 154.6V127.9M531.6 161.7V171.3M531.8 154.4V129.6M531.9 154.4V145.0M532.0 154.3V145.3M532.9 162.1V192.3M533.0 154.1V143.5M533.5 154.1V144.8M533.8 154.1V126.8M533.9 154.1V136.2M534.0 162.1V171.7M534.2 154.1V144.5M534.3 162.1V176.0M534.8 162.0V171.4M534.9 154.2V144.2M535.5 161.9V171.7M535.6 154.4V137.6M535.9 154.4V145.6M536.2 161.7V171.3M536.2 154.5V146.0M536.3 161.6V170.5M536.5 154.6V145.7M536.8 154.7V146.3M536.9 161.5V187.6M537.0 161.5V182.1M537.6 161.5V175.2M537.6 161.5V169.5M537.9 161.5V185.6M538.0 154.7V139.5M538.6 154.7V146.8M538.8 161.5V169.6M539.6 154.9V134.0M539.6 154.9V147.4M539.7 155.0V147.6M539.7 155.0V147.4M540.3 160.9V167.5M540.9 155.6V149.7M541.6 160.4V165.7M541.9 160.4V176.7M542.6 155.6V149.8M542.9 155.6V148.3M542.9 160.6V167.3M543.2 155.5V139.4M543.5 155.5V142.6M544.2 155.4V148.7M545.3 155.9V150.0M545.5 160.3V165.4M545.6 160.2V165.3M546.0 160.1V165.0M546.2 160.0V168.8M546.2 160.0V164.9M546.5 156.1V151.3M546.7 160.1V165.0M547.0 156.0V151.0M547.6 155.9V147.4M547.7 155.8V145.4M547.9 160.4V165.9M548.0 160.4V166.0M548.4 155.7V148.3M548.4 155.7V150.0M548.6 160.5V166.1M548.9 160.3V165.7M549.9 156.4V152.4M550.6 156.8V153.2M550.9 159.3V162.4M551.0 159.4V162.7M551.7 156.6V153.2M552.2 156.5V152.5M552.3 159.7V164.8M552.4 156.4V146.2M552.4 156.4V152.4M552.6 159.8V164.2M552.7 156.3V152.2M553.0 159.9V173.9M553.6 156.0V150.7M554.2 160.6V176.3M554.4 155.5V149.3M554.7 155.3V148.7M555.4 154.8V147.2M555.6 154.8V147.2M555.7 161.4V169.2M555.9 154.9V146.8M556.1 161.3V186.2M556.4 155.0V147.7M556.6 161.2V168.4M556.9 161.1V168.4M557.0 155.1V142.4M557.1 161.1V168.0M557.3 161.0V168.1M557.6 161.0V167.8M558.1 160.8V167.6M558.3 155.4V149.1M558.6 155.5V149.2M558.7 155.5V149.3M559.1 155.7V149.9M559.9 160.3V165.8M560.1 160.3V165.6M560.6 155.7V146.9M561.3 161.0V181.4M561.4 155.1V143.7M561.6 161.2V184.6M561.6 161.2V169.2M561.7 161.3V169.3M562.3 154.6V133.6M562.4 154.6V145.8M562.6 161.6V169.9M562.9 161.4V169.2M563.0 161.3V171.0M563.0 161.3V168.8M563.1 161.2V170.8M563.6 155.2V148.4M564.0 155.5V149.4M564.1 155.6V149.2M564.3 155.7V145.4M564.4 155.8V150.2M564.6 160.4V165.8M564.7 155.9V150.8M565.0 160.5V166.3M565.1 160.6V166.7M565.4 160.8V171.8M565.7 155.3V148.6M565.8 161.1V184.4M566.0 155.1V147.9M566.4 161.5V170.1M567.0 154.4V144.9M567.1 161.9V171.5M567.7 154.2V144.7M567.8 154.1V144.4M568.4 154.0V143.9M568.6 162.4V193.6M568.6 162.4V172.8M568.8 162.5V199.6M568.8 153.8V143.2M569.0 162.6V200.7M569.1 153.7V142.3M569.3 153.7V143.1M569.4 153.7V143.4M569.7 162.5V173.4M570.6 162.0V171.2M570.7 154.4V137.5M570.8 161.9V197.5M571.0 154.6V145.7M571.1 161.7V171.2M572.0 154.8V146.5M572.1 154.7V146.6M572.5 154.6V145.7M573.3 162.1V171.7M573.4 162.2V172.8M573.5 162.2V172.3M573.7 154.1V121.3M573.7 154.1V144.5M573.8 162.4V172.6M574.3 153.9V136.9M575.3 153.7V141.5M575.8 162.8V174.2M576.1 153.6V142.6M576.3 153.6V133.5M576.5 162.8V173.8M576.8 153.9V143.6M578.0 162.2V172.7M578.3 162.1V198.9M578.4 154.5V129.7M578.4 154.5V145.5M579.1 154.4V128.2M579.4 162.2V171.9M580.2 162.5V172.9M580.4 162.6V173.2M580.5 153.9V140.7M580.7 153.9V143.4M581.4 154.3V137.3M581.7 154.5V138.0M581.8 154.6V146.2M582.0 161.7V186.2M582.1 154.9V142.1M582.2 155.0V147.3M582.5 161.2V169.4M582.7 161.1V168.6M582.8 155.5V148.9M584.0 155.2V148.5M584.1 161.3V170.8M584.2 161.4V169.4M584.4 161.5V187.9M584.4 161.5V169.8M585.2 162.2V172.7M585.4 154.3V144.3M585.5 162.4V193.9M585.5 162.4V172.5M585.7 154.2V145.0M585.8 162.3V180.1M586.0 154.3V123.7M586.0 154.3V144.3M586.1 162.3V172.4M586.2 162.3V185.7M586.2 162.3V172.3M586.7 162.2V190.6M586.8 162.2V172.0M587.0 154.4V145.8M587.2 162.1V181.7M587.2 162.1V171.6M587.5 162.0V171.4M587.9 162.1V172.0M588.1 162.1V172.6M588.4 162.3V196.9M588.4 154.3V144.6M588.7 154.1V143.9M588.9 162.7V173.8M589.1 153.9V143.7M589.2 153.8V142.9M589.4 162.9V207.4M589.7 163.1V174.9M589.8 163.2V184.2M589.9 153.4V142.3M590.1 153.3V141.9M590.2 153.4V142.3M590.5 163.1V204.7M591.2 162.5V190.2M591.5 154.4V145.4M591.7 162.2V188.6M591.7 154.5V145.8M592.1 154.8V146.5M592.2 161.6V169.9M592.5 155.1V144.4M592.5 155.1V147.2M592.7 161.6V169.9M592.8 161.8V170.7M593.2 162.1V184.5M593.2 162.1V171.6M593.4 162.3V179.7M593.7 154.2V121.2M593.7 154.2V145.0M593.9 154.0V141.5M594.1 162.9V197.8M594.1 153.9V143.8M594.2 153.8V122.8M594.2 163.0V174.5M594.5 163.2V175.2M594.7 163.4V197.2M594.7 163.4V175.6M594.8 163.4V211.2M594.8 163.4V177.0M594.9 153.4V135.7M594.9 153.4V142.4M595.4 163.4V201.0M595.5 153.4V141.8M595.9 153.5V142.5M596.1 153.5V142.3M596.6 163.3V185.3M596.6 153.5V142.0M596.8 163.3V197.0M597.1 153.6V142.7M597.4 153.8V134.0M597.5 153.9V144.0M597.6 154.1V119.8M597.6 154.1V143.7M597.8 162.5V199.4M597.8 154.2V144.1M597.9 154.3V144.8M598.1 154.4V140.4M598.5 161.9V170.8M598.9 155.1V134.7M599.1 155.2V141.0M599.1 155.2V147.8M599.2 161.2V172.0M599.5 161.1V191.5M599.5 161.1V168.9M599.6 155.4V134.6M599.8 155.4V148.6M599.9 155.3V148.4M600.1 161.3V169.1M600.2 161.3V169.0M600.4 161.4V169.9M600.6 161.5V177.2M600.8 161.5V191.4M600.9 161.5V191.4M600.9 155.1V147.7M601.4 155.0V134.7M601.4 155.0V147.6M601.6 161.8V171.3M601.6 154.9V147.0M601.8 154.8V146.9M601.9 154.7V130.3M602.2 154.6V146.4M602.5 162.2V171.9M602.9 154.3V143.9M603.1 162.6V196.9M603.8 153.9V121.4M604.1 163.1V210.0M604.2 153.7V108.7M604.3 163.2V176.3M604.5 163.2V198.8M604.6 163.2V210.1M604.8 153.6V133.5M604.9 163.3V214.1M604.9 153.6V142.7M605.1 153.6V142.0M605.3 163.4V176.5M605.3 153.5V142.7M605.8 153.4V106.0M605.8 153.4V141.9M606.2 153.3V141.5M606.5 153.4V142.1M606.6 163.4V196.8M606.6 163.4V176.6M606.9 163.3V216.0M607.1 163.2V211.0M607.5 163.0V175.2M607.8 162.8V174.4M608.1 154.2V141.9M608.1 162.7V173.3M608.3 162.5V172.8M608.8 162.3V172.7M609.1 154.6V145.7M609.2 162.2V172.3M609.5 162.1V172.4M609.8 154.8V146.2M609.9 154.8V147.1M610.1 161.9V170.9M610.2 161.8V170.7M610.3 154.9V136.1M610.3 154.9V147.2M610.9 161.6V170.3M611.5 154.7V140.5M611.6 162.3V193.4M611.6 154.5V145.7M611.9 154.3V144.5M612.0 162.6V174.2M612.3 162.9V179.5M612.3 162.9V175.1M612.6 153.8V124.0M612.9 163.4V202.3M613.0 163.5V192.3M613.2 153.4V118.2M613.3 163.6V184.9M613.3 163.6V177.9M613.5 153.5V142.1M613.6 163.5V178.4M614.3 163.3V194.5M614.5 163.2V215.2M614.5 163.2V175.6M614.9 163.1V174.8M615.0 163.1V201.1M615.0 163.1V175.0M615.5 162.9V174.3M615.6 154.0V130.8M615.8 163.0V174.4M615.9 153.9V111.3M616.0 163.0V174.7M616.2 153.9V144.0M616.2 153.9V144.1M616.3 163.1V183.7M616.5 153.9V132.6M616.6 163.1V175.9M616.8 153.8V135.2M616.9 153.8V142.9M617.0 153.8V143.4M617.2 163.2V176.0M617.6 153.7V112.8M617.6 153.7V143.0M617.9 163.3V215.8M618.0 163.2V215.9M618.5 163.1V187.0M618.6 163.1V174.7M618.9 163.0V204.2M618.9 154.0V144.4M619.0 162.9V207.6M619.0 162.9V174.4M619.2 162.9V174.4M619.3 154.1V144.7M619.5 154.2V144.0M619.7 162.7V209.5M620.2 154.4V144.7M620.9 154.3V127.5M621.2 154.3V117.8M621.6 162.6V192.2M622.0 154.3V145.4M622.2 154.3V142.6M622.2 162.6V173.2M622.3 162.6V185.5M623.2 154.7V146.3M623.5 162.0V171.9M623.6 161.9V195.6M623.7 161.8V192.1M624.0 155.2V147.9M624.2 155.3V148.7M624.3 161.4V170.4M624.3 161.4V169.6M624.6 161.2V168.9M624.7 155.6V149.0M625.2 155.1V137.5M625.3 161.9V195.0M625.5 154.7V146.7M625.6 154.6V145.1M625.7 154.4V145.5M625.9 154.2V144.4M626.0 154.1V143.7M626.5 153.6V142.0M626.6 153.4V142.2M626.6 153.4V141.1M626.9 153.1V140.3M628.2 163.8V184.7M628.3 153.3V142.0M628.4 153.4V141.9M628.6 163.6V207.0M629.0 163.4V189.0M629.2 163.4V186.3M629.3 153.7V142.2M629.9 163.3V211.2M629.9 163.3V176.4M630.0 163.3V213.2M630.6 163.2V199.2M630.6 163.2V175.5M630.9 153.7V142.3M631.0 163.2V181.6M631.0 163.2V176.6M631.3 153.7V143.0M631.4 153.7V140.8M631.6 153.7V141.7M631.6 153.7V142.6M631.9 163.0V177.0M632.3 154.1V144.8M632.6 154.3V145.4M632.7 162.3V192.7M633.2 162.0V171.1M633.3 161.9V171.0M633.4 161.7V170.4M633.6 155.0V147.1M634.0 161.3V169.0M634.2 155.2V136.0M634.3 161.6V170.4M634.6 154.9V147.1M634.7 161.9V171.4M635.9 154.0V144.4M636.1 163.0V175.6M636.4 162.9V184.0M636.9 154.3V131.0M637.3 154.7V124.4M637.9 161.4V174.2M638.0 155.3V146.2M638.4 155.7V149.6M638.9 155.7V139.3M639.0 160.9V168.1M639.4 155.4V148.9M639.6 161.2V168.8M639.7 155.3V148.6M639.9 161.3V170.5M640.1 161.5V180.9M640.1 161.5V170.0M640.4 155.0V128.2M640.9 154.8V146.6M641.1 154.8V146.8M641.3 154.9V127.5M641.4 154.9V146.9M641.6 161.6V174.8M641.9 155.0V141.5M641.9 155.0V147.0M642.0 161.5V169.5M642.4 161.4V169.7M642.6 161.3V168.8M642.9 161.1V168.2M643.4 160.9V167.4M643.7 160.7V167.5M644.3 160.5V178.3M644.4 155.9V150.7M644.7 160.4V165.8M644.8 160.3V165.8M645.4 160.1V172.6M645.4 160.1V164.8M645.7 160.1V165.0M645.8 156.2V151.5M646.1 160.1V165.1M646.7 160.2V165.2M646.8 156.1V151.3M647.0 156.1V151.3M647.7 156.1V151.4M647.8 160.2V165.0M648.3 156.1V151.5M648.4 156.2V151.5M649.0 160.0V164.5M649.1 159.9V164.5M649.4 159.9V164.2M649.8 159.9V164.3M651.1 156.6V152.4M651.4 156.6V152.9M652.3 159.4V162.6M652.5 159.4V162.5M652.8 156.7V153.6M653.1 159.5V167.4M653.1 159.5V163.3M653.3 159.8V164.6M653.4 160.4V166.1M653.8 153.7V142.0M654.0 152.9V137.6M654.1 164.1V180.9M654.5 149.3V127.3M654.5 166.9V187.4M655.0 147.7V117.5M655.4 168.9V194.5M655.7 169.1V202.0M655.8 169.2V196.6M656.0 146.8V113.9M656.1 169.5V203.5M656.3 169.6V206.1M656.5 146.4V115.8M657.1 170.2V207.5M657.4 169.9V198.8M657.5 146.4V112.0M657.7 146.6V111.1M658.4 147.4V122.3M659.0 148.0V124.2M659.4 167.8V190.5M659.5 167.8V198.3M659.8 167.8V191.5M660.2 167.8V200.0M660.2 148.4V119.6M660.5 167.8V191.4M660.8 148.4V124.5M661.8 167.7V194.9M662.1 167.5V189.7M662.4 167.2V195.7M662.5 149.3V127.4M663.0 149.7V126.5M663.2 166.4V191.7M663.5 150.3V128.9M663.7 150.4V130.5M664.1 150.9V130.1M664.2 151.1V133.4M664.5 165.1V186.9M665.1 164.5V180.3M665.2 164.3V183.1M665.7 163.8V177.3M666.5 153.5V141.6M666.8 163.1V178.7M667.2 153.7V140.6M667.5 163.0V174.9M667.9 163.1V175.3M668.5 153.5V138.8M668.8 163.7V180.1M668.9 152.7V139.7M669.1 152.3V135.5M669.5 165.4V184.8M669.9 150.2V127.5M670.1 149.9V123.8M670.2 149.5V128.0M670.4 167.6V192.5M671.1 147.7V120.0M671.4 147.8V117.3M671.5 147.8V118.6M672.5 168.4V198.8M672.9 148.2V121.8M673.4 167.8V197.4M673.9 166.9V187.7M674.1 166.6V187.4M674.2 166.4V188.9M674.4 150.0V127.6M674.5 150.3V131.9M675.1 151.2V135.1M675.6 164.2V185.5M675.6 164.2V182.4M675.8 151.8V136.6M675.8 151.8V136.9M675.9 164.4V180.6M676.1 151.5V132.1M676.4 164.8V182.4M676.5 151.1V129.1M676.6 150.9V128.8M676.8 165.3V187.2M676.9 165.5V184.7M677.1 150.3V129.7M677.4 149.9V126.1M677.6 149.5V127.8M677.9 149.0V123.8M678.6 147.1V118.5M678.8 146.7V117.8M679.1 169.8V204.7M679.6 171.3V204.5M680.1 172.6V210.9M680.4 142.4V103.9M680.4 142.4V105.3M680.5 142.3V100.2M680.8 173.1V209.5M680.9 142.1V103.5M681.8 142.6V96.7M682.5 143.0V104.3M682.6 143.2V107.9M683.6 170.8V206.2M683.8 144.6V112.4M683.9 170.5V206.6M683.9 170.5V201.7M684.1 145.0V113.8M684.3 145.3V111.4M684.3 170.0V204.5M684.5 169.8V198.8M684.6 145.7V111.2M684.8 169.5V204.4M684.9 169.3V196.6M685.2 146.5V117.9M685.5 146.9V117.2M685.8 147.3V122.0M686.1 147.7V121.1M686.8 166.9V187.5M687.1 149.0V127.2M687.3 166.6V187.4M687.8 166.7V187.4M687.9 166.7V189.3M688.1 148.7V125.4M688.3 166.8V190.2M688.5 166.8V187.4M688.6 148.6V124.1M689.1 167.0V187.9M689.8 167.0V191.8M689.9 148.5V121.3M690.2 148.6V124.1M690.3 166.8V188.6M690.9 148.9V127.1M691.1 149.0V115.8M691.2 166.5V190.8M691.3 149.1V123.9M691.3 166.5V187.7M691.5 166.4V190.3M692.0 166.2V185.7M692.3 149.5V127.8M692.6 166.1V185.9M693.2 149.8V130.0M693.5 165.8V186.1M693.6 165.8V185.1M694.0 150.1V126.1M694.3 165.6V184.3M694.5 165.6V183.4M694.9 150.4V126.4M695.0 150.4V130.4M695.5 165.3V184.2M695.6 150.6V128.2M695.8 150.6V132.7M696.6 165.2V183.3M696.8 165.3V182.2M696.9 150.7V133.3M697.8 150.5V131.7M698.0 150.4V132.1M698.3 165.7V187.6M698.6 150.3V130.5M698.8 150.1V118.8M699.2 149.6V129.6M699.3 166.7V194.2M699.7 149.0V121.2M699.9 167.3V190.4M700.3 167.8V192.3M702.0 165.4V183.7M702.2 151.2V134.8M702.3 151.5V136.2M702.5 164.3V180.4M702.7 152.6V139.7M703.3 162.5V179.0M703.3 153.7V140.6M703.5 162.7V174.7M704.0 163.3V182.1M704.0 163.3V175.4M704.7 152.2V135.2M705.0 164.3V181.8M705.6 151.6V135.0M705.7 151.9V137.2M706.2 163.7V178.8M706.3 163.6V177.9M706.5 163.4V178.0M707.0 162.7V174.2M707.2 153.7V143.4M707.5 154.1V144.3M707.6 154.3V145.2M707.6 154.3V141.9M707.9 154.7V146.3M708.0 154.5V145.7M708.2 162.0V171.8M708.4 162.4V175.4M708.6 162.6V173.4M709.7 152.2V131.7M710.3 165.0V181.2M710.6 151.6V127.7M710.9 151.6V129.8M711.2 151.7V136.3M711.6 151.8V127.5M711.7 151.8V129.9M711.9 164.8V184.6M712.3 164.7V189.4M712.4 152.0V133.4M712.4 152.0V131.9M712.7 151.8V137.0M712.9 151.6V130.2M713.7 166.0V188.6M713.7 166.0V184.4M714.0 150.5V132.5M714.3 166.7V192.1M714.4 150.1V127.7M714.6 167.0V203.7M715.0 167.3V201.5M715.4 149.6V122.3M715.7 167.4V199.5M716.1 149.8V126.0M716.3 149.8V124.9M717.0 166.9V204.5M717.4 150.2V126.4M718.1 166.5V198.0M718.4 150.4V128.6M719.1 150.6V132.5M719.7 150.6V132.2M721.0 150.0V128.5M721.1 166.9V189.7M721.4 167.0V192.9M722.3 148.8V126.0M723.0 169.1V207.2M724.3 170.1V205.7M725.0 147.3V121.7M725.1 169.3V204.0M725.4 169.0V208.3M725.4 169.0V199.0M725.7 168.8V206.9M726.3 148.4V116.0M726.4 168.1V202.9M727.0 167.2V194.4M727.1 149.6V126.6M727.3 149.8V126.8M727.4 150.0V130.7M728.3 165.2V189.4M729.1 151.3V135.3M729.8 165.6V188.7M730.6 150.2V127.8M730.8 150.0V128.9M731.0 166.3V191.1M731.1 166.3V190.0M731.3 150.1V131.3M732.1 165.8V188.9M732.3 165.7V187.7M732.8 165.4V190.0M733.5 151.4V133.6M734.1 164.5V179.6M734.7 164.0V182.8M734.8 163.8V179.8M735.1 153.0V140.1M735.3 163.5V179.0M735.5 163.3V176.6M735.7 153.5V138.4M735.8 153.7V142.4M736.4 162.4V174.6M736.5 162.3V175.7M738.1 155.6V149.5M738.4 161.2V169.9M738.5 155.7V147.9M738.7 155.7V148.1M739.0 161.3V169.0M739.4 155.6V147.5M739.5 161.4V169.5M740.7 161.3V169.7M741.4 161.0V170.0M742.2 160.7V168.7M742.7 156.2V150.3M743.4 156.2V150.8M743.7 160.5V166.8M744.4 160.4V166.0M745.0 160.5V167.5M745.1 156.2V151.2M745.4 156.0V150.2M745.7 155.5V149.1M745.8 155.0V147.8M746.8 150.5V126.7M747.0 169.2V199.1M747.1 149.0V118.5M747.4 148.0V115.5M747.7 171.9V207.9M747.8 147.8V121.2M748.2 171.3V202.3M749.2 170.3V202.0M749.7 170.3V201.0M749.9 148.6V121.6M750.1 148.5V118.4M750.2 148.4V121.9M750.2 148.4V125.6M750.5 148.2V119.7M750.7 171.4V202.3M750.8 148.0V114.9M751.8 172.4V207.3M752.4 171.7V215.8M752.7 148.1V121.7M753.2 170.4V206.8M753.5 170.0V202.4M753.7 169.8V197.5M754.2 149.7V127.1M755.2 168.4V201.9M755.6 168.1V198.2M755.9 150.6V127.3M756.6 168.4V201.7M756.9 149.6V126.9M757.1 149.3V126.7M757.4 170.2V198.7M757.6 148.2V120.4M758.4 146.8V119.0M758.5 173.1V213.2M758.6 173.5V213.5M758.8 173.1V216.7M759.1 172.3V205.5M759.5 148.0V124.1M760.2 169.2V202.3M760.5 150.1V123.7M760.6 168.1V198.7M760.8 150.6V131.9M761.9 148.7V117.8M762.1 170.7V213.3M762.5 172.0V216.4M762.8 172.9V221.1M763.2 174.3V225.7M763.5 145.7V106.2M763.8 173.2V220.8M763.9 172.9V216.0M764.3 171.8V218.5M765.1 148.7V126.3M765.2 149.0V118.1M765.6 168.8V194.8M766.3 149.6V129.6M766.6 169.0V197.1M767.1 149.5V128.2M767.2 169.1V194.7M767.5 169.1V200.9M767.8 169.2V198.2M767.9 169.2V203.3M768.1 149.4V128.9M768.5 168.7V198.5M768.6 168.5V193.9M768.8 149.9V128.5M769.3 167.9V198.7M769.5 167.7V193.4M769.6 167.5V192.0M769.9 150.9V127.3M770.2 151.1V133.2M770.3 151.0V130.8M770.5 150.9V128.3M771.2 150.3V126.6M771.9 149.8V125.8M772.0 149.7V127.4M772.2 168.5V203.9M772.3 168.6V195.5M772.8 149.3V120.9M773.5 168.9V201.2M773.6 149.0V118.8M773.8 168.9V201.8M774.8 169.1V203.7M775.2 148.8V120.8M775.5 148.8V123.1M775.8 148.8V118.9M776.8 168.6V201.8M777.2 148.9V127.3M777.3 148.9V120.1M777.5 149.0V120.2M777.8 168.2V198.9M777.9 168.2V199.1M778.0 149.1V123.2M778.3 168.1V193.5M778.8 149.1V128.1M778.9 168.0V202.0M779.2 168.0V193.5M779.5 168.0V198.6M779.7 148.5V122.8M779.9 148.2V121.3M780.2 147.6V121.5M780.6 146.7V109.6M780.7 146.4V114.1M780.9 146.1V116.2M781.0 171.3V214.2M781.5 144.8V113.9M781.6 144.5V109.3M781.7 144.3V101.9M782.2 172.1V218.6M782.5 145.1V107.7M782.7 145.4V115.7M783.0 170.9V210.4M783.7 146.5V118.6M784.9 169.3V202.5M785.3 169.2V201.9M785.7 169.2V201.5M786.6 169.2V206.3M786.7 146.8V118.9M786.9 169.3V199.4M787.2 146.6V115.3M787.6 146.5V116.4M787.9 146.3V116.6M788.2 146.2V117.9M788.6 169.9V197.8M788.9 169.4V198.2M789.0 146.9V114.4M789.2 147.2V117.7M789.7 148.6V119.5M789.9 148.9V119.4M790.2 166.3V185.8M790.4 165.7V188.0M790.7 150.9V130.6M790.9 164.7V180.9M791.4 150.8V128.2M791.7 150.4V132.3M792.4 149.4V128.0M792.6 166.5V192.8M793.3 167.4V197.3M793.4 167.2V194.9M793.6 167.1V192.5M793.7 148.7V123.7M794.2 149.1V126.0M794.3 166.4V185.9M794.4 166.3V186.8M794.6 149.5V129.5M795.4 165.4V186.9M795.6 150.5V130.3M795.7 150.3V129.6M795.9 165.6V183.8M796.7 148.9V127.4M797.4 148.0V119.4M797.6 167.6V191.7M798.4 167.4V189.2M798.9 166.8V191.4M799.0 166.7V187.9M799.9 165.7V188.2M800.9 165.7V189.3M801.7 166.3V185.5M801.9 148.9V122.3M802.6 166.7V189.8M802.7 148.6V124.8M803.0 166.2V186.8M803.3 149.5V122.4M803.6 149.8V124.5M804.4 150.7V128.6M804.6 164.5V185.2M804.8 164.2V181.8M805.0 151.0V134.3M805.3 164.6V183.5M805.4 164.8V184.4M806.6 149.2V127.9M806.7 149.0V126.4M807.1 166.4V188.7M807.8 147.6V114.9M808.0 167.3V197.1M808.8 168.2V198.4M809.0 168.4V199.8M809.1 145.9V107.2M809.6 145.4V112.2M809.7 169.0V204.4M809.8 145.2V114.3M810.1 145.0V102.2M810.6 169.5V200.6M810.7 144.5V105.2M811.0 169.8V205.4M811.1 144.2V104.6M812.0 144.1V107.6M812.1 169.7V197.6M812.4 144.8V111.8M812.5 145.0V105.0M812.7 145.3V113.4M813.4 146.4V117.0M813.7 167.4V190.4M814.0 147.3V114.4M815.1 147.0V113.6M815.3 146.9V118.4M816.3 167.6V195.9M816.5 146.8V112.5M816.7 167.4V192.1M816.8 167.2V193.0M817.0 167.1V193.3M817.5 147.9V122.6M818.0 148.3V121.6M818.1 148.5V125.4M818.3 166.2V190.7M818.5 166.0V189.1M818.8 165.8V187.3M819.1 149.4V125.8M819.3 149.5V129.1M819.5 165.5V187.8M820.2 165.1V181.5M821.4 164.7V183.2M821.8 150.9V130.7M822.2 151.1V134.2M822.8 151.3V129.6M823.1 151.4V134.4M823.4 151.5V135.0M823.7 164.2V179.7M824.1 164.0V181.2M824.7 152.1V138.1M824.8 152.2V137.5M825.0 152.3V137.8M825.4 163.5V176.9M826.0 152.4V135.0M826.1 163.7V177.2M826.2 152.2V136.9M826.5 163.9V178.3M826.8 164.0V185.6M827.0 152.0V134.0M827.1 164.1V179.7M827.4 151.9V133.0M827.8 151.8V133.9M828.2 152.5V136.2M829.2 161.8V172.2M829.5 154.8V144.9M830.5 155.8V150.2M831.2 160.2V166.7M832.4 160.0V165.1M832.7 156.2V150.7M833.1 160.1V166.1M833.7 160.2V166.5M834.1 160.3V166.8M834.4 160.4V166.3M834.7 160.4V167.2M835.1 155.8V148.8M835.4 155.8V149.6M835.7 160.3V166.1M835.9 155.9V150.0M836.1 160.3V166.1M836.4 156.0V151.0M837.2 160.0V165.3M837.5 159.9V164.9M838.6 156.7V153.0" fill="none" stroke="#0000ff" stroke-width="0.8" stroke-opacity="0.8"/>
<path d="M465.8 158.1V104.7M652.4 158.1V97.6M747.1 158.1V99.0M477.4 158.1V201.7M613.6 158.1V224.2M634.7 158.1V228.4" fill="none" stroke="#0000ff" stroke-width="0.9" stroke-opacity="0.8"/>
<polyline points="430.8,161.7 430.9,157.7 431.1,161.5 431.2,156.8 431.4,153.9 431.5,160.0 431.7,153.7 431.8,161.0 431.9,153.7 432.1,161.8 432.2,155.3 432.4,154.5 432.5,161.3 432.7,154.9 432.8,160.6 432.9,153.9 433.1,162.1 433.2,161.9 433.4,156.0 433.5,159.7 433.7,160.6 433.8,154.2 433.9,162.0 434.1,153.3 434.2,161.4 434.4,157.8 434.5,161.8 434.7,153.1 434.8,160.8 434.9,155.0 435.1,161.7 435.2,155.8 435.4,163.5 435.5,155.6 435.6,162.7 435.8,153.0 435.9,161.8 436.1,163.0 436.2,154.0 436.4,154.7 436.5,154.1 436.6,161.9 436.8,162.2 436.9,154.9 437.1,161.3 437.2,154.4 437.4,154.6 437.5,161.6 437.6,155.7 437.8,160.8 437.9,156.1 438.1,156.1 438.2,155.9 438.4,160.5 438.5,155.4 438.6,162.1 438.8,155.8 438.9,162.0 439.1,154.1 439.2,160.1 439.4,154.2 439.5,155.4 439.6,154.4 439.8,163.2 439.9,153.6 440.1,162.9 440.2,154.2 440.4,161.1 440.5,160.6 440.6,153.1 440.8,161.7 440.9,153.0 441.1,154.0 441.2,161.6 441.4,155.2 441.5,163.7 441.6,153.3 441.8,161.4 441.9,154.2 442.1,163.4 442.2,163.3 442.4,163.8 442.5,156.0 442.6,163.0 442.8,153.5 442.9,162.2 443.1,163.6 443.2,154.0 443.3,163.5 443.5,152.1 443.6,152.3 443.8,160.2 443.9,162.1 444.1,155.0 444.2,162.7 444.3,153.2 444.5,162.5 444.6,152.0 444.8,161.1 444.9,152.5 445.1,156.4 445.2,152.1 445.3,163.6 445.5,154.3 445.6,164.7 445.8,150.5 445.9,166.3 446.1,150.6 446.2,152.9 446.3,161.7 446.5,150.9 446.6,166.7 446.8,155.1 446.9,163.9 447.1,151.6 447.2,162.0 447.3,154.1 447.5,162.9 447.6,149.5 447.8,154.5 447.9,162.3 448.1,150.2 448.2,159.2 448.3,166.4 448.5,149.7 448.6,165.0 448.8,151.7 448.9,164.1 449.1,152.1 449.2,163.2 449.3,152.0 449.5,163.5 449.6,150.2 449.8,165.1 449.9,151.9 450.1,166.8 450.2,153.8 450.3,163.9 450.5,151.6 450.6,167.7 450.8,148.8 450.9,166.6 451.0,152.5 451.2,167.3 451.3,153.1 451.5,169.5 451.6,152.4 451.8,165.3 451.9,153.2 452.0,169.2 452.2,150.0 452.3,148.8 452.5,166.6 452.6,165.1 452.8,154.0 452.9,166.5 453.0,151.0 453.2,167.0 453.3,151.3 453.5,166.6 453.6,154.5 453.8,165.6 453.9,154.2 454.0,150.4 454.2,165.2 454.3,151.2 454.5,152.4 454.6,161.8 454.8,166.3 454.9,152.7 455.0,162.8 455.2,151.9 455.3,164.2 455.5,155.8 455.6,161.3 455.8,152.0 455.9,153.4 456.0,167.4 456.2,148.9 456.3,161.2 456.5,149.6 456.6,168.0 456.8,165.6 456.9,150.2 457.0,168.1 457.2,156.1 457.3,163.9 457.5,152.8 457.6,166.6 457.8,147.7 457.9,166.1 458.0,150.0 458.2,168.0 458.3,147.4 458.5,167.5 458.6,148.3 458.8,147.9 458.9,169.2 459.0,149.8 459.2,169.6 459.3,148.1 459.5,164.1 459.6,147.7 459.7,167.7 459.9,148.8 460.0,169.8 460.2,170.0 460.3,164.0 460.5,167.6 460.6,146.3 460.7,167.2 460.9,146.6 461.0,163.4 461.2,151.5 461.3,166.2 461.5,154.4 461.6,152.8 461.7,160.9 461.9,153.3 462.0,151.2 462.2,166.3 462.3,150.4 462.5,160.2 462.6,154.4 462.7,165.3 462.9,154.0 463.0,164.9 463.2,153.3 463.3,164.9 463.5,154.8 463.6,165.2 463.7,152.6 463.9,151.7 464.0,151.5 464.2,164.2 464.3,150.8 464.5,168.0 464.6,148.3 464.7,164.2 464.9,150.1 465.0,164.2 465.2,164.9 465.3,147.0 465.5,167.1 465.6,150.4 465.7,147.4 465.9,166.7 466.0,166.9 466.2,151.6 466.3,165.1 466.5,152.3 466.6,154.5 466.7,165.9 466.9,162.8 467.0,149.6 467.2,163.2 467.3,148.0 467.4,149.2 467.6,166.0 467.7,155.5 467.9,163.4 468.0,150.9 468.2,167.8 468.3,154.2 468.4,167.8 468.6,160.7 468.7,150.8 468.9,165.4 469.0,149.5 469.2,165.1 469.3,152.1 469.4,153.5 469.6,165.6 469.7,150.7 469.9,164.4 470.0,152.2 470.2,159.9 470.3,155.5 470.4,163.3 470.6,151.7 470.7,152.2 470.9,166.8 471.0,149.0 471.2,166.3 471.3,150.9 471.4,148.5 471.6,167.4 471.7,150.0 471.9,167.3 472.0,169.3 472.2,146.8 472.3,168.9 472.4,151.5 472.6,166.7 472.7,152.5 472.9,157.0 473.0,165.9 473.2,151.0 473.3,155.5 473.4,167.8 473.6,147.1 473.7,150.3 473.9,167.1 474.0,165.3 474.2,151.7 474.3,168.9 474.4,147.7 474.6,163.5 474.7,152.1 474.9,166.1 475.0,147.7 475.1,163.8 475.3,163.5 475.4,148.0 475.6,160.9 475.7,148.6 475.9,167.0 476.0,150.6 476.1,148.8 476.3,165.0 476.4,151.8 476.6,168.3 476.7,149.8 476.9,163.4 477.0,152.9 477.1,163.2 477.3,152.9 477.4,167.2 477.6,163.9 477.7,151.0 477.9,166.8 478.0,151.2 478.1,164.1 478.3,155.3 478.4,152.1 478.6,166.5 478.7,153.3 478.9,164.3 479.0,150.4 479.1,165.2 479.3,150.2 479.4,152.2 479.6,149.0 479.7,161.3 479.9,152.6 480.0,168.3 480.1,166.5 480.3,147.6 480.4,167.1 480.6,145.6 480.7,168.1 480.9,145.2 481.0,167.6 481.1,151.2 481.3,171.4 481.4,144.6 481.6,162.6 481.7,149.9 481.9,171.1 482.0,163.7 482.1,141.7 482.3,170.9 482.4,169.0 482.6,148.1 482.7,169.4 482.9,142.8 483.0,171.9 483.1,144.8 483.3,147.7 483.4,173.8 483.6,151.3 483.7,172.1 483.8,144.5 484.0,172.1 484.1,148.8 484.3,168.0 484.4,144.0 484.6,152.9 484.7,168.6 484.8,169.7 485.0,152.7 485.1,165.1 485.3,150.2 485.4,168.2 485.6,151.9 485.7,152.7 485.8,163.4 486.0,149.0 486.1,166.0 486.3,151.4 486.4,165.9 486.6,149.2 486.7,167.1 486.8,154.2 487.0,164.7 487.1,168.0 487.3,149.4 487.4,167.6 487.6,151.8 487.7,167.4 487.8,147.8 488.0,169.7 488.1,153.5 488.3,170.3 488.4,151.1 488.6,146.3 488.7,171.0 488.8,145.3 489.0,170.8 489.1,147.1 489.3,171.2 489.4,150.4 489.6,169.9 489.7,168.2 489.8,157.9 490.0,147.1 490.1,166.6 490.3,146.3 490.4,164.1 490.6,147.3 490.7,161.6 490.8,151.8 491.0,171.4 491.1,146.4 491.3,165.1 491.4,145.6 491.5,168.1 491.7,154.4 491.8,150.0 492.0,166.0 492.1,146.8 492.3,167.3 492.4,149.0 492.5,168.7 492.7,148.1 492.8,167.0 493.0,148.9 493.1,166.9 493.3,151.1 493.4,162.9 493.5,150.3 493.7,165.2 493.8,149.5 494.0,161.7 494.1,152.7 494.3,163.6 494.4,151.0 494.5,165.1 494.7,152.2 494.8,167.1 495.0,150.6 495.1,150.6 495.3,165.4 495.4,154.1 495.5,162.6 495.7,150.4 495.8,167.5 496.0,150.3 496.1,166.5 496.3,150.7 496.4,162.6 496.5,154.5 496.7,166.1 496.8,152.9 497.0,163.5 497.1,167.0 497.3,150.6 497.4,166.0 497.5,148.0 497.7,166.2 497.8,149.9 498.0,148.2 498.1,150.2 498.3,166.0 498.4,156.0 498.5,164.5 498.7,155.8 498.8,164.4 499.0,164.4 499.1,152.9 499.2,164.3 499.4,151.9 499.5,164.1 499.7,154.8 499.8,164.8 500.0,151.1 500.1,163.1 500.2,151.1 500.4,164.4 500.5,151.6 500.7,162.0 500.8,151.8 501.0,151.1 501.1,163.8 501.2,152.3 501.4,163.7 501.5,151.1 501.7,163.6 501.8,153.5 502.0,164.8 502.1,153.1 502.2,162.1 502.4,154.7 502.5,159.7 502.7,154.6 502.8,163.1 503.0,155.0 503.1,151.5 503.2,150.8 503.4,165.2 503.5,152.1 503.7,165.1 503.8,152.9 504.0,161.5 504.1,151.3 504.2,165.8 504.4,149.0 504.5,162.3 504.7,154.6 504.8,150.6 505.0,165.8 505.1,150.6 505.2,163.4 505.4,152.4 505.5,166.5 505.7,163.7 505.8,155.4 506.0,164.2 506.1,153.4 506.2,166.6 506.4,152.1 506.5,166.6 506.7,155.2 506.8,164.9 507.0,150.7 507.1,167.3 507.2,151.8 507.4,160.9 507.5,152.9 507.7,153.6 507.8,166.5 507.9,154.8 508.1,165.5 508.2,150.6 508.4,164.1 508.5,153.8 508.7,161.0 508.8,164.0 508.9,151.0 509.1,164.2 509.2,162.1 509.4,152.3 509.5,165.4 509.7,156.6 509.8,165.4 509.9,150.4 510.1,165.4 510.2,153.1 510.4,165.2 510.5,149.0 510.7,162.6 510.8,151.2 510.9,167.4 511.1,149.5 511.2,165.3 511.4,154.4 511.5,163.5 511.7,148.5 511.8,169.3 511.9,148.0 512.1,166.2 512.2,147.6 512.4,167.2 512.5,147.6 512.7,148.3 512.8,165.5 512.9,152.5 513.1,154.1 513.2,166.5 513.4,151.2 513.5,163.9 513.7,150.3 513.8,166.2 513.9,162.2 514.1,153.7 514.2,161.6 514.4,155.4 514.5,151.9 514.7,162.1 514.8,149.9 514.9,165.8 515.1,153.3 515.2,162.2 515.4,150.0 515.5,154.3 515.6,165.9 515.8,152.4 515.9,159.7 516.1,150.2 516.2,152.6 516.4,165.8 516.5,154.6 516.6,159.8 516.8,150.1 516.9,161.8 517.1,150.0 517.2,166.0 517.4,149.8 517.5,163.0 517.6,152.9 517.8,155.6 517.9,162.3 518.1,151.6 518.2,149.7 518.4,163.7 518.5,152.3 518.6,166.5 518.8,163.9 518.9,149.5 519.1,163.1 519.2,148.8 519.4,167.6 519.5,164.3 519.6,165.5 519.8,147.4 519.9,166.2 520.1,164.4 520.2,147.1 520.4,167.0 520.5,149.6 520.6,163.3 520.8,147.1 520.9,165.5 521.1,146.7 521.2,166.5 521.4,148.3 521.5,169.1 521.6,153.5 521.8,169.7 521.9,162.8 522.1,168.6 522.2,154.7 522.4,167.2 522.5,148.6 522.6,168.9 522.8,149.9 522.9,168.3 523.1,150.4 523.2,149.1 523.3,165.3 523.5,149.0 523.6,163.4 523.8,166.5 523.9,149.5 524.1,162.3 524.2,150.1 524.3,165.0 524.5,148.6 524.6,167.6 524.8,165.1 524.9,154.2 525.1,165.6 525.2,151.5 525.3,164.1 525.5,151.1 525.6,165.2 525.8,151.5 525.9,167.1 526.1,151.3 526.2,166.8 526.3,151.0 526.5,148.0 526.6,167.5 526.8,148.7 526.9,167.0 527.1,149.8 527.2,151.9 527.3,165.5 527.5,148.1 527.6,164.5 527.8,149.0 527.9,163.9 528.1,149.6 528.2,169.3 528.3,167.3 528.5,148.9 528.6,162.9 528.8,152.9 528.9,165.8 529.1,151.8 529.2,159.3 529.3,148.3 529.5,165.2 529.6,167.5 529.8,149.1 529.9,166.6 530.1,167.2 530.2,163.9 530.3,152.7 530.5,165.6 530.6,152.6 530.8,168.2 530.9,150.6 531.1,152.2 531.2,168.1 531.3,147.3 531.5,162.6 531.6,153.6 531.8,162.5 531.9,146.4 532.0,167.3 532.2,147.3 532.3,168.3 532.5,146.4 532.6,169.4 532.8,154.9 532.9,170.8 533.0,152.6 533.2,166.2 533.3,146.2 533.5,147.0 533.6,169.2 533.8,169.0 533.9,161.9 534.0,149.4 534.2,167.7 534.3,150.8 534.5,168.7 534.6,150.6 534.8,171.2 534.9,145.1 535.0,167.6 535.2,166.9 535.3,146.6 535.5,163.7 535.6,149.5 535.8,151.8 535.9,163.9 536.0,169.6 536.2,152.1 536.3,167.0 536.5,151.0 536.6,168.3 536.8,158.9 536.9,153.4 537.0,167.6 537.2,168.0 537.3,163.1 537.5,153.5 537.6,165.1 537.8,147.9 537.9,166.0 538.0,150.4 538.2,160.0 538.3,148.4 538.5,166.3 538.6,148.5 538.8,164.6 538.9,151.3 539.0,163.2 539.2,167.6 539.3,151.2 539.5,167.2 539.6,151.1 539.7,166.3 539.9,151.2 540.0,162.3 540.2,150.3 540.3,163.3 540.5,153.4 540.6,164.7 540.7,153.9 540.9,161.9 541.0,161.6 541.2,153.9 541.3,155.3 541.5,163.4 541.6,153.2 541.7,153.2 541.9,162.4 542.0,153.7 542.2,163.0 542.3,153.0 542.5,158.9 542.6,152.2 542.7,163.3 542.9,153.6 543.0,150.8 543.2,165.4 543.3,151.0 543.5,165.6 543.6,152.1 543.7,161.8 543.9,151.0 544.0,160.7 544.2,154.9 544.3,165.3 544.5,152.7 544.6,165.8 544.7,153.5 544.9,165.7 545.0,155.6 545.2,151.2 545.3,161.6 545.5,152.0 545.6,162.4 545.7,153.3 545.9,161.5 546.0,162.9 546.2,155.2 546.3,162.7 546.5,154.0 546.6,163.5 546.7,152.8 546.9,163.6 547.0,154.8 547.2,163.5 547.3,151.4 547.4,162.3 547.6,163.9 547.7,156.9 547.9,161.5 548.0,151.3 548.2,161.8 548.3,155.5 548.4,165.0 548.6,152.0 548.7,165.5 548.9,156.5 549.0,162.9 549.2,152.4 549.3,158.6 549.4,153.3 549.6,161.1 549.7,153.6 549.9,163.4 550.0,152.4 550.2,162.6 550.3,154.8 550.4,161.5 550.6,153.1 550.7,162.6 550.9,152.8 551.0,163.2 551.2,154.9 551.3,159.7 551.4,153.0 551.6,162.7 551.7,163.2 551.9,153.8 552.0,164.0 552.2,153.9 552.3,163.4 552.4,156.2 552.6,163.6 552.7,153.0 552.9,162.4 553.0,159.8 553.2,153.3 553.3,163.6 553.4,152.9 553.6,151.4 553.7,163.6 553.9,151.4 554.0,165.3 554.2,154.5 554.3,165.9 554.4,152.1 554.6,165.3 554.7,150.1 554.9,166.0 555.0,166.7 555.1,151.9 555.3,159.4 555.4,150.7 555.6,163.4 555.7,153.7 555.9,155.8 556.0,164.5 556.1,149.2 556.3,165.2 556.4,150.4 556.6,166.1 556.7,151.2 556.9,163.8 557.0,151.9 557.1,150.0 557.3,164.8 557.4,150.5 557.6,165.7 557.7,163.8 557.9,152.6 558.0,167.3 558.1,167.3 558.3,166.3 558.4,156.3 558.6,164.8 558.7,164.6 558.9,149.5 559.0,167.0 559.1,151.0 559.3,163.6 559.4,149.3 559.6,166.8 559.7,150.1 559.9,155.1 560.0,165.4 560.1,166.7 560.3,149.5 560.4,164.2 560.6,152.2 560.7,168.1 560.9,153.9 561.0,162.7 561.1,149.1 561.3,166.7 561.4,154.6 561.6,169.8 561.7,151.0 561.9,167.3 562.0,145.9 562.1,161.7 562.3,145.7 562.4,169.6 562.6,150.2 562.7,161.6 562.9,147.8 563.0,167.1 563.1,146.7 563.3,168.9 563.4,148.7 563.6,168.4 563.7,148.1 563.8,168.5 564.0,150.4 564.1,168.0 564.3,153.8 564.4,165.7 564.6,167.2 564.7,154.4 564.8,150.9 565.0,166.0 565.1,149.3 565.3,166.2 565.4,148.7 565.6,167.3 565.7,167.9 565.8,148.6 566.0,165.6 566.1,149.3 566.3,163.2 566.4,165.4 566.6,150.0 566.7,168.7 566.8,151.0 567.0,165.2 567.1,146.9 567.3,164.5 567.4,151.5 567.6,166.9 567.7,147.1 567.8,168.6 568.0,155.8 568.1,166.3 568.3,154.1 568.4,169.3 568.6,151.9 568.7,149.9 568.8,167.6 569.0,147.4 569.1,153.1 569.3,149.4 569.4,164.5 569.6,146.1 569.7,149.2 569.8,165.8 570.0,146.8 570.1,148.0 570.3,151.0 570.4,151.6 570.6,164.8 570.7,165.2 570.8,151.8 571.0,167.1 571.1,151.6 571.3,155.6 571.4,159.4 571.5,150.4 571.7,163.6 571.8,154.5 572.0,163.5 572.1,152.9 572.3,153.5 572.4,168.4 572.5,164.5 572.7,148.9 572.8,164.8 573.0,153.3 573.1,166.8 573.3,168.6 573.4,146.5 573.5,163.7 573.7,146.3 573.8,168.8 574.0,149.9 574.1,172.0 574.3,162.4 574.4,145.2 574.5,160.8 574.7,147.0 574.8,168.0 575.0,151.6 575.1,166.9 575.3,151.4 575.4,166.9 575.5,166.6 575.7,149.5 575.8,165.7 576.0,150.2 576.1,166.6 576.3,170.0 576.4,146.4 576.5,146.8 576.7,169.2 576.8,148.3 577.0,164.3 577.1,149.3 577.3,168.2 577.4,152.9 577.5,162.7 577.7,150.3 577.8,166.5 578.0,167.3 578.1,152.3 578.3,163.1 578.4,152.3 578.5,151.1 578.7,164.5 578.8,151.2 579.0,166.6 579.1,149.8 579.2,168.6 579.4,166.0 579.5,153.8 579.7,152.0 579.8,170.8 580.0,148.3 580.1,169.5 580.2,154.8 580.4,168.1 580.5,145.7 580.7,144.0 580.8,169.5 581.0,146.5 581.1,170.3 581.2,146.9 581.4,165.7 581.5,147.7 581.7,171.2 581.8,147.2 582.0,168.2 582.1,151.8 582.2,167.7 582.4,148.2 582.5,149.2 582.7,168.8 582.8,148.9 583.0,168.0 583.1,167.7 583.2,150.2 583.4,163.8 583.5,149.0 583.7,166.5 583.8,153.2 584.0,165.2 584.1,151.1 584.2,167.0 584.4,149.4 584.5,166.6 584.7,147.8 584.8,167.8 585.0,150.6 585.1,147.0 585.2,150.6 585.4,166.3 585.5,147.3 585.7,168.8 585.8,151.2 586.0,167.6 586.1,146.7 586.2,163.6 586.4,155.8 586.5,169.0 586.7,148.1 586.8,167.0 587.0,168.7 587.1,149.2 587.2,165.4 587.4,152.0 587.5,151.3 587.7,168.6 587.8,149.0 587.9,168.6 588.1,167.0 588.2,169.2 588.4,154.9 588.5,151.5 588.7,170.0 588.8,156.0 588.9,168.3 589.1,148.8 589.2,168.7 589.4,153.9 589.5,163.4 589.7,153.3 589.8,169.2 589.9,149.7 590.1,174.1 590.2,143.8 590.4,170.5 590.5,152.0 590.7,165.6 590.8,146.7 590.9,170.6 591.1,163.2 591.2,149.3 591.4,149.0 591.5,170.1 591.7,151.4 591.8,167.5 591.9,151.8 592.1,167.3 592.2,151.9 592.4,165.9 592.5,155.4 592.7,161.7 592.8,152.8 592.9,169.7 593.1,148.1 593.2,165.6 593.4,146.8 593.5,168.1 593.7,144.6 593.8,161.3 593.9,147.1 594.1,174.9 594.2,142.6 594.4,175.7 594.5,146.0 594.7,170.0 594.8,147.2 594.9,170.0 595.1,142.0 595.2,153.5 595.4,172.5 595.5,175.7 595.6,144.5 595.8,173.0 595.9,154.0 596.1,170.3 596.2,147.2 596.4,167.8 596.5,146.0 596.6,170.6 596.8,168.1 596.9,169.2 597.1,149.8 597.2,170.0 597.4,153.4 597.5,165.5 597.6,153.8 597.8,171.0 597.9,152.1 598.1,168.7 598.2,148.9 598.4,166.2 598.5,148.9 598.6,153.7 598.8,168.1 598.9,149.1 599.1,168.0 599.2,155.9 599.4,166.3 599.5,148.5 599.6,167.7 599.8,148.0 599.9,168.9 600.1,169.0 600.2,160.8 600.4,150.7 600.5,168.8 600.6,147.7 600.8,170.1 600.9,168.5 601.1,146.8 601.2,164.5 601.4,153.9 601.5,161.2 601.6,149.3 601.8,164.5 601.9,146.2 602.1,148.0 602.2,170.1 602.4,149.5 602.5,146.4 602.6,167.9 602.8,172.0 602.9,149.1 603.1,164.6 603.2,149.3 603.3,171.8 603.5,153.8 603.6,172.0 603.8,152.0 603.9,167.6 604.1,163.4 604.2,148.8 604.3,167.5 604.5,147.8 604.6,166.3 604.8,153.0 604.9,166.4 605.1,149.3 605.2,170.3 605.3,150.1 605.5,145.6 605.6,168.8 605.8,145.5 605.9,169.8 606.1,164.2 606.2,172.7 606.3,146.9 606.5,145.3 606.6,174.8 606.8,143.7 606.9,175.9 607.1,145.5 607.2,145.0 607.3,170.9 607.5,144.1 607.6,172.8 607.8,150.6 607.9,171.2 608.1,149.3 608.2,170.8 608.3,146.1 608.5,165.7 608.6,150.4 608.8,168.4 608.9,148.9 609.1,162.4 609.2,169.2 609.3,152.4 609.5,168.9 609.6,151.7 609.8,151.9 609.9,147.0 610.1,169.7 610.2,152.4 610.3,152.3 610.5,170.2 610.6,149.8 610.8,168.5 610.9,148.3 611.1,169.9 611.2,148.6 611.3,162.0 611.5,148.5 611.6,161.9 611.8,147.3 611.9,168.4 612.0,154.5 612.2,167.8 612.3,148.0 612.5,163.7 612.6,147.9 612.8,166.8 612.9,149.9 613.0,167.9 613.2,154.3 613.3,149.6 613.5,147.0 613.6,154.5 613.8,173.7 613.9,145.0 614.0,171.5 614.2,144.7 614.3,153.1 614.5,172.2 614.6,147.8 614.8,168.6 614.9,145.5 615.0,168.4 615.2,149.7 615.3,159.9 615.5,172.5 615.6,152.2 615.8,163.6 615.9,152.0 616.0,148.4 616.2,168.3 616.3,152.3 616.5,171.8 616.6,150.7 616.8,149.3 616.9,172.1 617.0,146.8 617.2,164.8 617.3,150.2 617.5,168.5 617.6,168.2 617.8,150.8 617.9,166.3 618.0,156.4 618.2,169.5 618.3,152.3 618.5,169.2 618.6,150.2 618.8,169.3 618.9,145.6 619.0,172.0 619.2,145.2 619.3,174.2 619.5,174.3 619.6,146.6 619.7,172.0 619.9,146.9 620.0,170.3 620.2,142.7 620.3,171.5 620.5,147.0 620.6,171.7 620.7,146.1 620.9,167.1 621.0,148.1 621.2,166.8 621.3,148.1 621.5,163.1 621.6,149.6 621.7,170.1 621.9,151.3 622.0,167.3 622.2,166.2 622.3,148.9 622.5,161.0 622.6,149.6 622.7,168.4 622.9,149.0 623.0,167.2 623.2,149.1 623.3,167.2 623.5,151.9 623.6,171.6 623.7,149.3 623.9,171.4 624.0,146.9 624.2,169.3 624.3,154.2 624.5,169.2 624.6,150.5 624.7,159.3 624.9,146.1 625.0,163.9 625.2,145.4 625.3,165.9 625.5,146.3 625.6,162.7 625.7,155.2 625.9,165.9 626.0,143.8 626.2,173.6 626.3,143.3 626.5,170.2 626.6,143.8 626.7,175.5 626.9,144.1 627.0,175.1 627.2,142.8 627.3,171.1 627.4,141.6 627.6,174.6 627.7,169.2 627.9,146.9 628.0,174.2 628.2,148.9 628.3,173.6 628.4,146.3 628.6,164.2 628.7,175.2 628.9,151.3 629.0,173.8 629.2,173.9 629.3,144.4 629.4,170.4 629.6,148.6 629.7,172.4 629.9,149.7 630.0,147.3 630.2,149.1 630.3,174.4 630.4,146.4 630.6,152.9 630.7,173.4 630.9,150.6 631.0,166.6 631.2,152.6 631.3,165.7 631.4,152.1 631.6,163.8 631.7,149.1 631.9,170.2 632.0,146.3 632.2,170.8 632.3,147.5 632.4,163.9 632.6,151.6 632.7,169.4 632.9,148.5 633.0,169.1 633.2,149.1 633.3,168.7 633.4,150.4 633.6,167.4 633.7,150.6 633.9,150.3 634.0,165.8 634.2,151.7 634.3,151.5 634.4,167.8 634.6,168.2 634.7,165.2 634.9,151.6 635.0,169.9 635.2,152.5 635.3,170.2 635.4,152.4 635.6,165.4 635.7,147.8 635.9,166.7 636.0,148.1 636.1,169.3 636.3,148.7 636.4,146.6 636.6,146.2 636.7,152.8 636.9,172.1 637.0,153.2 637.1,146.3 637.3,161.6 637.4,147.9 637.6,170.8 637.7,148.0 637.9,155.1 638.0,167.1 638.1,153.9 638.3,167.2 638.4,149.6 638.6,166.0 638.7,151.7 638.9,159.7 639.0,148.0 639.1,169.2 639.3,151.1 639.4,164.3 639.6,154.5 639.7,168.3 639.9,153.7 640.0,169.1 640.1,147.4 640.3,149.4 640.4,168.8 640.6,151.0 640.7,146.9 640.9,169.0 641.0,146.9 641.1,169.9 641.3,149.2 641.4,168.4 641.6,148.6 641.7,169.0 641.9,149.3 642.0,166.4 642.1,150.4 642.3,168.5 642.4,164.6 642.6,165.7 642.7,149.3 642.9,162.4 643.0,152.3 643.1,167.3 643.3,153.3 643.4,166.4 643.6,154.9 643.7,160.9 643.8,150.9 644.0,164.0 644.1,151.4 644.3,163.8 644.4,152.1 644.6,164.3 644.7,151.9 644.8,161.9 645.0,152.9 645.1,165.4 645.3,152.6 645.4,165.4 645.6,152.1 645.7,162.2 645.8,155.2 646.0,159.1 646.1,152.4 646.3,164.6 646.4,152.9 646.6,164.5 646.7,155.9 646.8,154.9 647.0,160.3 647.1,164.3 647.3,154.8 647.4,163.1 647.6,153.5 647.7,163.6 647.8,155.7 648.0,162.9 648.1,154.4 648.3,160.0 648.4,152.9 648.6,162.8 648.7,154.5 648.8,161.3 649.0,152.7 649.1,154.5 649.3,161.1 649.4,156.3 649.6,153.0 649.7,160.5 649.8,154.0 650.0,160.3 650.1,152.9 650.3,160.6 650.4,153.3 650.6,163.3 650.7,153.6 650.8,163.1 651.0,153.5 651.1,161.4 651.3,161.3 651.4,153.7 651.5,159.4 651.7,161.8 651.8,155.2 652.0,162.6 652.1,162.3 652.3,155.6 652.4,162.3 652.5,153.9 652.7,161.6 652.8,154.9 653.0,161.6 653.1,153.4 653.3,162.6 653.4,150.5 653.5,163.3 653.7,146.6 653.8,147.0 654.0,172.0 654.1,148.8 654.3,177.6 654.4,134.6 654.5,178.9 654.7,169.7 654.8,185.7 655.0,135.3 655.1,187.4 655.3,138.9 655.4,178.1 655.5,129.9 655.7,169.7 655.8,138.9 656.0,167.2 656.1,135.3 656.3,169.9 656.4,134.8 656.5,184.0 656.7,136.9 656.8,188.4 657.0,128.5 657.1,189.7 657.3,136.4 657.4,177.3 657.5,127.4 657.7,186.2 657.8,129.8 658.0,182.3 658.1,126.2 658.3,172.7 658.4,145.3 658.5,171.3 658.7,185.8 658.8,129.5 659.0,131.5 659.1,187.5 659.3,127.6 659.4,176.8 659.5,143.4 659.7,189.4 659.8,125.2 660.0,189.6 660.1,179.2 660.2,135.4 660.4,174.5 660.5,187.3 660.7,137.2 660.8,179.7 661.0,135.3 661.1,184.8 661.2,140.0 661.4,132.9 661.5,175.8 661.7,183.9 661.8,176.4 662.0,141.7 662.1,180.8 662.2,136.5 662.4,180.3 662.5,141.9 662.7,172.2 662.8,143.8 663.0,179.2 663.1,139.0 663.2,175.1 663.4,147.1 663.5,141.5 663.7,174.7 663.8,172.8 664.0,155.8 664.1,146.3 664.2,163.4 664.4,144.0 664.5,165.7 664.7,145.2 664.8,164.5 665.0,143.6 665.1,175.7 665.2,167.7 665.4,143.9 665.5,171.9 665.7,143.3 665.8,168.1 666.0,151.0 666.1,142.8 666.2,165.2 666.4,146.5 666.5,167.9 666.7,140.4 666.8,173.6 667.0,141.5 667.1,165.2 667.2,154.8 667.4,144.6 667.5,175.6 667.7,165.3 667.8,143.7 667.9,177.0 668.1,141.6 668.2,169.1 668.4,138.5 668.5,160.0 668.7,142.4 668.8,170.9 668.9,139.9 669.1,177.8 669.2,138.7 669.4,145.6 669.5,133.7 669.7,184.3 669.8,134.0 669.9,182.2 670.1,153.0 670.2,175.5 670.4,144.5 670.5,186.8 670.7,135.4 670.8,183.6 670.9,129.6 671.1,140.2 671.2,184.6 671.4,137.1 671.5,173.6 671.7,140.6 671.8,178.7 671.9,177.7 672.1,133.0 672.2,185.8 672.4,138.7 672.5,165.9 672.7,129.8 672.8,177.9 672.9,132.8 673.1,180.6 673.2,138.3 673.4,184.5 673.5,134.9 673.7,185.0 673.8,145.0 673.9,184.2 674.1,133.9 674.2,138.1 674.4,175.9 674.5,138.6 674.7,182.0 674.8,132.6 674.9,171.7 675.1,136.6 675.2,174.0 675.4,134.4 675.5,179.0 675.6,135.9 675.8,175.8 675.9,154.6 676.1,179.8 676.2,135.6 676.4,169.6 676.5,140.8 676.6,180.6 676.8,136.0 676.9,178.1 677.1,136.5 677.2,175.7 677.4,135.9 677.5,172.6 677.6,135.6 677.8,174.0 677.9,141.4 678.1,166.7 678.2,148.4 678.4,171.6 678.5,133.7 678.6,129.6 678.8,160.6 678.9,143.6 679.1,184.0 679.2,172.3 679.4,132.3 679.5,199.4 679.6,118.3 679.8,185.3 679.9,109.1 680.1,131.9 680.2,180.6 680.4,193.5 680.5,117.5 680.6,203.8 680.8,122.7 680.9,189.2 681.1,117.3 681.2,188.7 681.4,125.5 681.5,182.7 681.6,116.2 681.8,184.8 681.9,128.1 682.1,194.7 682.2,129.7 682.4,194.2 682.5,141.8 682.6,192.8 682.8,124.9 682.9,165.8 683.1,134.8 683.2,178.0 683.4,146.0 683.5,181.1 683.6,136.9 683.8,185.9 683.9,127.2 684.1,188.2 684.2,126.7 684.3,174.9 684.5,132.2 684.6,182.7 684.8,144.6 684.9,175.2 685.1,127.8 685.2,171.7 685.3,138.3 685.5,142.6 685.6,167.3 685.8,136.3 685.9,177.6 686.1,131.3 686.2,169.5 686.3,127.4 686.5,182.9 686.6,136.7 686.8,178.7 686.9,128.9 687.1,178.4 687.2,130.0 687.3,184.2 687.5,132.8 687.6,183.7 687.8,148.8 687.9,181.6 688.1,131.0 688.2,184.1 688.3,147.9 688.5,178.9 688.6,132.9 688.8,130.2 688.9,182.6 689.1,176.8 689.2,143.6 689.3,176.8 689.5,135.9 689.6,183.2 689.8,135.3 689.9,182.2 690.1,132.4 690.2,171.4 690.3,131.3 690.5,180.1 690.6,147.8 690.8,175.3 690.9,146.1 691.1,172.0 691.2,138.6 691.3,178.8 691.5,133.6 691.6,178.3 691.8,177.9 691.9,147.3 692.0,177.6 692.2,173.6 692.3,142.3 692.5,179.7 692.6,178.5 692.8,172.0 692.9,141.4 693.0,172.4 693.2,147.0 693.3,174.0 693.5,136.6 693.6,178.3 693.8,143.9 693.9,142.4 694.0,177.3 694.2,138.6 694.3,177.4 694.5,153.7 694.6,162.2 694.8,138.8 694.9,168.8 695.0,140.8 695.2,176.5 695.3,145.6 695.5,175.9 695.6,139.7 695.8,173.6 695.9,139.9 696.0,174.8 696.2,142.1 696.3,174.6 696.5,144.5 696.6,169.9 696.8,142.1 696.9,162.5 697.0,142.1 697.2,141.4 697.3,168.6 697.5,143.1 697.6,166.3 697.8,147.9 697.9,171.8 698.0,146.2 698.2,144.6 698.3,172.0 698.5,171.6 698.6,168.6 698.8,155.3 698.9,174.9 699.0,146.9 699.2,160.3 699.3,144.5 699.5,173.8 699.6,140.7 699.7,175.0 699.9,171.0 700.0,177.5 700.2,170.6 700.3,142.6 700.5,179.2 700.6,140.4 700.7,171.1 700.9,134.4 701.0,173.1 701.2,136.0 701.3,174.2 701.5,172.8 701.6,138.8 701.7,163.0 701.9,140.5 702.0,175.1 702.2,147.5 702.3,166.3 702.5,143.2 702.6,167.6 702.7,150.0 702.9,170.2 703.0,146.8 703.2,169.2 703.3,147.2 703.5,169.6 703.6,155.3 703.7,169.6 703.9,152.1 704.0,171.8 704.2,150.8 704.3,172.7 704.5,152.4 704.6,170.7 704.7,153.0 704.9,169.1 705.0,164.7 705.2,148.0 705.3,153.8 705.5,166.8 705.6,150.1 705.7,174.1 705.9,144.3 706.0,168.7 706.2,171.3 706.3,146.3 706.5,147.4 706.6,169.9 706.7,146.1 706.9,172.1 707.0,144.7 707.2,168.8 707.3,148.6 707.5,166.9 707.6,151.1 707.7,170.3 707.9,150.3 708.0,150.9 708.2,170.4 708.3,147.1 708.4,146.8 708.6,171.6 708.7,147.1 708.9,173.4 709.0,142.5 709.2,168.3 709.3,138.3 709.4,176.5 709.6,139.4 709.7,140.8 709.9,167.8 710.0,141.4 710.2,179.2 710.3,146.4 710.4,178.2 710.6,137.8 710.7,170.1 710.9,148.9 711.0,172.4 711.2,149.5 711.3,177.8 711.4,147.7 711.6,167.2 711.7,144.6 711.9,171.6 712.0,150.9 712.2,171.1 712.3,148.5 712.4,161.6 712.6,171.4 712.7,150.4 712.9,170.9 713.0,148.7 713.2,163.1 713.3,169.8 713.4,147.6 713.6,175.9 713.7,141.3 713.9,174.9 714.0,148.9 714.2,168.1 714.3,142.8 714.4,178.0 714.6,154.4 714.7,166.7 714.9,148.4 715.0,141.4 715.2,152.8 715.3,175.0 715.4,138.6 715.6,181.5 715.7,148.3 715.9,181.9 716.0,145.4 716.1,140.6 716.3,172.6 716.4,140.3 716.6,164.4 716.7,137.9 716.9,168.3 717.0,148.0 717.1,172.0 717.3,143.4 717.4,170.6 717.6,145.4 717.7,180.8 717.9,137.6 718.0,160.5 718.1,139.5 718.3,183.2 718.4,166.5 718.6,149.0 718.7,178.8 718.9,139.0 719.0,180.3 719.1,137.0 719.3,181.6 719.4,140.5 719.6,184.8 719.7,132.8 719.9,184.9 720.0,138.5 720.1,183.7 720.3,144.7 720.4,182.4 720.6,151.1 720.7,180.7 720.9,143.3 721.0,182.7 721.1,137.9 721.3,182.0 721.4,138.3 721.6,172.2 721.7,136.1 721.9,175.8 722.0,153.7 722.1,165.6 722.3,135.7 722.4,171.8 722.6,142.1 722.7,178.6 722.9,151.9 723.0,179.6 723.1,172.9 723.3,135.9 723.4,173.7 723.6,134.9 723.7,178.3 723.8,172.5 724.0,134.8 724.1,185.3 724.3,137.4 724.4,184.4 724.6,138.5 724.7,182.1 724.8,137.4 725.0,151.3 725.1,180.1 725.3,146.1 725.4,163.9 725.6,142.5 725.7,180.8 725.8,174.8 726.0,179.9 726.1,149.4 726.3,178.1 726.4,174.1 726.6,140.5 726.7,153.2 726.8,177.0 727.0,142.7 727.1,175.7 727.3,138.1 727.4,177.8 727.6,173.5 727.7,148.5 727.8,145.7 728.0,178.3 728.1,140.1 728.3,170.2 728.4,148.5 728.6,166.8 728.7,139.0 728.8,146.4 729.0,171.7 729.1,140.6 729.3,179.4 729.4,149.4 729.6,170.8 729.7,145.1 729.8,144.2 730.0,169.3 730.1,149.5 730.3,178.9 730.4,137.6 730.6,179.8 730.7,144.4 730.8,138.1 731.0,134.0 731.1,178.0 731.3,141.4 731.4,176.8 731.6,143.9 731.7,146.1 731.8,175.2 732.0,140.8 732.1,174.9 732.3,139.3 732.4,168.4 732.5,138.8 732.7,176.2 732.8,143.4 733.0,175.4 733.1,143.2 733.3,176.4 733.4,176.8 733.5,147.1 733.7,172.0 733.8,142.8 734.0,174.5 734.1,145.0 734.3,168.8 734.4,148.1 734.5,170.6 734.7,147.3 734.8,170.8 735.0,145.7 735.1,171.2 735.3,149.8 735.4,167.0 735.5,149.6 735.7,149.8 735.8,165.9 736.0,162.9 736.1,154.0 736.3,166.3 736.4,149.0 736.5,166.0 736.7,150.5 736.8,164.2 737.0,152.9 737.1,159.2 737.3,153.9 737.4,154.8 737.5,166.5 737.7,150.9 737.8,166.7 738.0,152.9 738.1,152.1 738.3,159.5 738.4,155.7 738.5,163.4 738.7,154.3 738.8,165.5 739.0,153.7 739.1,162.6 739.3,151.5 739.4,164.6 739.5,155.8 739.7,167.1 739.8,162.9 740.0,151.0 740.1,151.0 740.2,165.5 740.4,154.0 740.5,163.5 740.7,152.0 740.8,152.8 741.0,162.3 741.1,152.5 741.2,164.2 741.4,152.2 741.5,166.6 741.7,152.4 741.8,164.5 742.0,151.8 742.1,166.4 742.2,152.7 742.4,165.5 742.5,155.2 742.7,155.8 742.8,162.2 743.0,153.8 743.1,165.1 743.2,152.2 743.4,152.4 743.5,154.9 743.7,164.9 743.8,164.9 744.0,152.2 744.1,165.1 744.2,163.8 744.4,153.1 744.5,164.3 744.7,154.0 744.8,162.2 745.0,153.8 745.1,161.6 745.2,151.9 745.4,164.8 745.5,152.4 745.7,166.2 745.8,150.2 746.0,151.0 746.1,156.5 746.2,171.8 746.4,143.3 746.5,149.1 746.7,141.0 746.8,171.0 747.0,135.9 747.1,194.9 747.2,135.7 747.4,128.4 747.5,173.9 747.7,142.9 747.8,147.9 747.9,197.5 748.1,141.8 748.2,199.6 748.4,196.9 748.5,129.4 748.7,193.6 748.8,134.6 748.9,181.3 749.1,137.1 749.2,189.7 749.4,133.2 749.5,129.9 749.7,190.8 749.8,127.9 749.9,130.9 750.1,188.7 750.2,129.2 750.4,195.2 750.5,129.1 750.7,196.6 750.8,141.6 750.9,185.0 751.1,142.2 751.2,192.3 751.4,121.0 751.5,146.5 751.7,204.4 751.8,203.0 751.9,124.6 752.1,141.8 752.2,193.6 752.4,141.1 752.5,197.0 752.7,136.1 752.8,190.9 752.9,127.0 753.1,190.0 753.2,134.6 753.4,136.8 753.5,184.0 753.7,148.2 753.8,172.3 753.9,180.1 754.1,134.9 754.2,169.1 754.4,140.1 754.5,173.6 754.7,150.3 754.8,187.9 754.9,165.3 755.1,152.9 755.2,178.1 755.4,140.4 755.5,186.0 755.6,140.5 755.8,141.1 755.9,136.5 756.1,186.6 756.2,149.2 756.4,136.4 756.5,137.2 756.6,193.4 756.8,149.5 756.9,190.3 757.1,146.9 757.2,185.3 757.4,137.2 757.5,184.0 757.6,140.6 757.8,127.3 757.9,189.7 758.1,127.0 758.2,183.5 758.4,132.5 758.5,185.5 758.6,122.3 758.8,192.8 758.9,139.6 759.1,188.7 759.2,126.6 759.4,129.4 759.5,181.2 759.6,134.6 759.8,178.2 759.9,138.4 760.1,184.8 760.2,139.0 760.4,143.7 760.5,183.2 760.6,143.4 760.8,181.5 760.9,140.4 761.1,181.2 761.2,141.1 761.4,182.6 761.5,183.0 761.6,141.4 761.8,143.3 761.9,137.7 762.1,181.6 762.2,140.8 762.4,134.3 762.5,186.0 762.6,130.9 762.8,189.1 762.9,136.6 763.1,194.4 763.2,131.9 763.4,178.3 763.5,135.3 763.6,186.4 763.8,130.1 763.9,185.5 764.1,143.4 764.2,171.7 764.3,148.2 764.5,192.2 764.6,181.1 764.8,185.1 764.9,190.1 765.1,191.8 765.2,133.5 765.3,187.0 765.5,154.3 765.6,189.2 765.8,179.6 765.9,148.9 766.1,180.2 766.2,138.4 766.3,179.8 766.5,143.2 766.6,173.3 766.8,161.2 766.9,148.4 767.1,180.0 767.2,135.6 767.3,179.0 767.5,184.8 767.6,134.7 767.8,178.8 767.9,136.3 768.1,168.4 768.2,154.2 768.3,172.9 768.5,172.6 768.6,150.1 768.8,183.9 768.9,167.9 769.1,144.9 769.2,171.7 769.3,146.3 769.5,185.4 769.6,138.8 769.8,178.8 769.9,146.5 770.1,181.8 770.2,144.3 770.3,181.6 770.5,143.2 770.6,178.9 770.8,150.6 770.9,175.6 771.1,137.2 771.2,185.4 771.3,151.5 771.5,138.6 771.6,185.5 771.8,141.1 771.9,179.2 772.0,188.9 772.2,147.2 772.3,175.3 772.5,131.4 772.6,179.9 772.8,133.8 772.9,189.1 773.0,146.7 773.2,184.0 773.3,151.0 773.5,183.6 773.6,138.8 773.8,183.5 773.9,140.1 774.0,182.4 774.2,147.1 774.3,175.6 774.5,146.7 774.6,174.6 774.8,139.4 774.9,179.2 775.0,166.9 775.2,137.1 775.3,179.7 775.5,136.6 775.6,142.6 775.8,177.7 775.9,143.3 776.0,139.5 776.2,165.9 776.3,137.1 776.5,185.2 776.6,175.7 776.8,180.5 776.9,151.0 777.0,139.3 777.2,139.8 777.3,139.3 777.5,173.2 777.6,137.4 777.8,185.6 777.9,177.8 778.0,137.4 778.2,136.7 778.3,169.1 778.5,140.0 778.6,183.6 778.8,141.2 778.9,173.4 779.0,139.7 779.2,181.4 779.3,145.1 779.5,171.6 779.6,139.0 779.7,181.3 779.9,138.4 780.0,170.5 780.2,134.0 780.3,164.0 780.5,143.8 780.6,131.7 780.7,186.0 780.9,134.4 781.0,178.9 781.2,131.2 781.3,187.9 781.5,134.0 781.6,174.0 781.7,130.8 781.9,163.7 782.0,179.9 782.2,132.1 782.3,186.5 782.5,126.0 782.6,185.2 782.7,126.4 782.9,170.4 783.0,132.1 783.2,187.1 783.3,176.6 783.5,136.9 783.6,192.9 783.7,130.4 783.9,183.1 784.0,134.7 784.2,193.7 784.3,188.5 784.5,139.9 784.6,181.4 784.7,192.0 784.9,146.1 785.0,195.0 785.2,131.0 785.3,192.5 785.5,126.1 785.6,133.2 785.7,196.0 785.9,120.5 786.0,122.2 786.2,184.2 786.3,123.4 786.5,178.7 786.6,150.0 786.7,197.2 786.9,117.6 787.0,172.6 787.2,140.1 787.3,189.7 787.5,195.8 787.6,137.7 787.7,139.1 787.9,133.3 788.0,191.3 788.2,133.7 788.3,179.6 788.4,142.7 788.6,180.2 788.7,181.1 788.9,147.4 789.0,193.7 789.2,133.2 789.3,188.9 789.4,153.4 789.6,182.1 789.7,137.2 789.9,173.3 790.0,131.9 790.2,141.7 790.3,181.7 790.4,141.2 790.6,173.6 790.7,133.8 790.9,175.3 791.0,136.5 791.2,175.8 791.3,135.7 791.4,134.5 791.6,182.2 791.7,134.2 791.9,170.4 792.0,180.6 792.2,134.0 792.3,173.3 792.4,135.8 792.6,186.2 792.7,142.9 792.9,183.8 793.0,123.5 793.2,163.3 793.3,125.5 793.4,186.3 793.6,134.9 793.7,182.0 793.9,151.9 794.0,178.6 794.2,129.4 794.3,181.4 794.4,140.8 794.6,186.3 794.7,129.7 794.9,171.9 795.0,129.4 795.2,173.3 795.3,130.6 795.4,170.7 795.6,135.4 795.7,182.2 795.9,135.8 796.0,175.9 796.1,133.2 796.3,174.0 796.4,139.6 796.6,181.4 796.7,156.1 796.9,176.3 797.0,148.5 797.1,176.8 797.3,149.6 797.4,179.8 797.6,133.0 797.7,173.5 797.9,136.8 798.0,181.3 798.1,133.0 798.3,175.1 798.4,132.5 798.6,175.1 798.7,145.5 798.9,172.8 799.0,179.1 799.1,137.2 799.3,176.1 799.4,138.7 799.6,178.1 799.7,171.4 799.9,140.7 800.0,174.0 800.1,133.7 800.3,178.1 800.4,133.8 800.6,177.8 800.7,138.7 800.9,137.6 801.0,168.7 801.1,137.0 801.3,178.7 801.4,135.9 801.6,136.6 801.7,170.8 801.9,141.4 802.0,148.3 802.1,175.3 802.3,146.0 802.4,167.6 802.6,147.2 802.7,175.1 802.9,135.4 803.0,135.0 803.1,168.8 803.3,140.1 803.4,172.4 803.6,138.2 803.7,179.4 803.8,177.0 804.0,160.8 804.1,139.0 804.3,179.0 804.4,156.1 804.6,175.4 804.7,133.4 804.8,170.5 805.0,135.4 805.1,173.8 805.3,174.7 805.4,148.8 805.6,179.7 805.7,146.4 805.8,173.5 806.0,144.7 806.1,147.7 806.3,171.8 806.4,140.2 806.6,170.0 806.7,133.8 806.8,174.3 807.0,134.6 807.1,167.7 807.3,154.2 807.4,183.2 807.6,131.6 807.7,135.9 807.8,175.3 808.0,131.3 808.1,187.5 808.3,132.7 808.4,133.2 808.6,175.9 808.7,144.6 808.8,188.4 809.0,120.9 809.1,182.7 809.3,122.1 809.4,178.7 809.6,130.2 809.7,179.2 809.8,121.4 810.0,190.8 810.1,185.7 810.3,188.9 810.4,171.3 810.6,126.7 810.7,125.0 810.8,188.3 811.0,124.1 811.1,188.4 811.3,120.8 811.4,172.7 811.6,121.9 811.7,123.0 811.8,179.6 812.0,144.3 812.1,125.4 812.3,170.7 812.4,137.8 812.5,182.5 812.7,127.0 812.8,128.9 813.0,170.5 813.1,143.8 813.3,131.3 813.4,180.0 813.5,133.0 813.7,166.2 813.8,145.0 814.0,161.5 814.1,146.8 814.3,169.5 814.4,151.3 814.5,170.3 814.7,132.0 814.8,178.6 815.0,135.4 815.1,170.0 815.3,134.4 815.4,172.6 815.5,129.6 815.7,184.1 815.8,144.6 816.0,169.4 816.1,132.2 816.3,134.6 816.4,181.4 816.5,126.0 816.7,185.2 816.8,134.3 817.0,132.9 817.1,174.1 817.3,130.1 817.4,181.0 817.5,142.6 817.7,174.7 817.8,147.3 818.0,182.2 818.1,129.8 818.3,169.2 818.4,138.8 818.5,167.8 818.7,145.3 818.8,164.3 819.0,144.3 819.1,162.7 819.3,142.9 819.4,179.5 819.5,132.5 819.7,137.4 819.8,169.9 820.0,137.8 820.1,137.4 820.2,177.2 820.4,149.3 820.5,175.9 820.7,171.5 820.8,142.2 821.0,179.4 821.1,137.3 821.2,178.6 821.4,146.6 821.5,176.4 821.7,178.6 821.8,137.1 822.0,145.4 822.1,171.4 822.2,140.5 822.4,174.3 822.5,174.2 822.7,136.8 822.8,167.7 823.0,151.2 823.1,174.2 823.2,139.7 823.4,171.4 823.5,139.9 823.7,174.8 823.8,142.0 824.0,165.7 824.1,175.3 824.2,139.3 824.4,164.4 824.5,146.7 824.7,165.0 824.8,141.0 825.0,166.0 825.1,142.4 825.2,171.2 825.4,144.9 825.5,172.7 825.7,143.2 825.8,172.8 826.0,149.3 826.1,169.7 826.2,152.6 826.4,166.4 826.5,146.5 826.7,172.5 826.8,148.1 827.0,152.2 827.1,168.8 827.2,146.0 827.4,168.0 827.5,173.1 827.7,148.4 827.8,165.5 827.9,145.5 828.1,163.6 828.2,145.4 828.4,170.1 828.5,169.5 828.7,148.2 828.8,163.6 828.9,148.2 829.1,165.8 829.2,150.0 829.4,165.3 829.5,153.1 829.7,163.7 829.8,152.1 829.9,164.7 830.1,163.3 830.2,153.6 830.4,163.9 830.5,156.4 830.7,161.0 830.8,152.7 830.9,163.6 831.1,152.5 831.2,162.8 831.4,152.4 831.5,161.7 831.7,152.9 831.8,163.5 831.9,152.9 832.1,161.6 832.2,156.6 832.4,154.3 832.5,155.6 832.7,161.3 832.8,153.3 832.9,162.1 833.1,154.6 833.2,163.2 833.4,152.3 833.5,163.1 833.7,161.7 833.8,153.1 833.9,164.5 834.1,163.2 834.2,152.2 834.4,163.4 834.5,154.7 834.7,151.4 834.8,159.0 834.9,154.4 835.1,163.9 835.2,152.4 835.4,164.2 835.5,154.4 835.7,160.3 835.8,152.9 835.9,164.2 836.1,152.3 836.2,163.1 836.4,152.8 836.5,162.0 836.6,152.5 836.8,161.4 836.9,155.1 837.1,163.6 837.2,154.3 837.4,161.0 837.5,153.5 837.6,161.5 837.8,160.7 837.9,156.6 838.1,159.5 838.2,153.8 838.4,162.9 838.5,154.9 838.6,160.4 838.8,153.4 838.9,154.6 839.1,163.2" fill="none" stroke="#008000" stroke-width="0.9" stroke-opacity="1" stroke-linejoin="bevel"/>
<path d="M432.1 159.3V162.9M436.6 156.7V152.2M438.5 159.3V164.9M440.1 159.7V165.9M440.2 156.5V148.3M441.2 156.4V150.4M443.2 159.9V167.8M443.3 159.9V168.0M446.5 155.3V147.6M446.8 161.0V172.5M448.3 160.7V168.0M449.1 160.5V171.2M449.2 160.5V168.7M450.1 160.9V169.8M450.3 161.0V170.5M451.0 154.8V143.5M451.6 161.7V174.0M453.2 155.3V145.3M455.2 160.8V175.9M455.8 160.9V169.3M456.5 155.1V141.1M457.0 161.2V169.6M457.3 155.0V146.4M457.6 161.3V179.2M458.0 161.4V173.5M458.6 161.5V172.7M458.8 154.7V140.3M459.6 154.6V145.6M459.7 161.6V182.5M459.9 154.6V141.6M460.0 161.7V174.3M460.3 154.5V142.6M461.0 161.6V176.6M461.2 161.5V176.3M462.2 160.8V177.0M462.3 155.5V149.2M462.7 160.4V174.1M463.0 156.0V147.2M463.2 160.2V170.3M463.5 160.4V165.9M464.5 161.1V169.8M466.0 161.7V173.2M467.0 154.6V137.6M467.3 161.5V182.5M467.4 161.5V181.1M467.6 161.5V181.2M469.4 155.6V144.8M469.6 155.7V148.1M469.7 160.4V173.3M470.0 160.3V167.3M471.2 161.0V176.6M471.7 154.8V135.3M472.3 154.4V135.9M472.4 161.8V170.9M472.7 161.8V185.4M472.9 161.8V170.7M473.0 161.7V177.5M473.7 161.6V183.6M474.2 154.6V141.1M474.4 161.5V180.9M474.6 161.5V173.2M475.0 161.5V173.6M475.3 161.4V170.1M475.4 154.8V134.6M476.0 154.9V146.1M476.1 161.2V172.4M476.7 161.1V171.4M477.3 161.0V168.3M478.3 160.9V179.1M478.6 155.4V138.3M478.7 160.8V170.2M480.3 161.7V171.0M480.6 162.0V171.8M482.1 153.1V122.0M483.1 153.3V132.9M484.1 153.6V141.7M484.4 153.9V126.2M485.1 161.7V170.8M485.3 154.7V133.4M485.6 161.3V171.2M487.1 155.0V145.8M487.7 154.7V132.2M488.6 154.2V133.6M488.7 162.0V186.7M489.1 154.0V140.0M490.1 153.7V135.8M490.4 162.5V174.3M490.6 162.5V189.3M491.3 153.9V141.2M491.4 154.0V137.6M492.0 161.7V171.9M492.3 154.7V139.4M492.5 154.9V144.4M492.7 161.2V174.9M493.3 160.9V170.7M494.0 160.9V176.2M494.3 155.3V146.0M494.8 155.3V147.1M496.8 155.1V146.6M497.1 161.1V180.1M498.0 155.1V135.7M498.1 161.0V169.0M498.8 160.7V178.2M499.1 160.6V168.5M499.4 155.7V141.4M500.1 160.2V172.3M500.4 160.2V168.5M501.0 160.2V168.6M501.2 155.9V150.9M501.7 160.3V166.9M501.8 155.9V146.2M502.8 160.4V174.6M504.2 155.4V139.2M504.4 155.3V146.9M504.8 155.3V145.0M505.4 161.0V180.2M505.7 155.2V147.5M506.1 155.2V139.2M506.2 155.2V145.2M506.4 155.2V140.6M506.5 155.1V137.4M507.9 155.5V139.6M509.7 160.4V170.0M510.1 155.5V143.8M510.2 155.5V145.5M510.7 155.2V147.0M511.7 154.6V146.0M512.5 161.3V181.3M514.7 155.5V148.8M514.8 155.6V149.5M515.5 160.6V178.2M515.6 160.6V176.2M515.8 160.5V172.9M516.1 155.7V141.8M516.2 155.7V141.9M516.4 155.7V148.3M517.2 160.6V171.0M517.5 160.6V172.0M518.4 155.4V138.5M518.8 160.9V173.2M520.4 161.7V184.5M520.5 154.5V137.2M520.8 161.9V186.8M520.9 154.3V128.8M521.2 161.8V184.5M522.8 161.4V169.9M522.9 154.8V132.2M523.2 161.3V180.2M523.3 154.9V143.3M523.6 155.0V133.7M526.8 161.3V176.5M527.2 161.4V181.2M530.1 161.0V181.1M531.5 161.6V178.3M531.6 154.6V143.6M531.9 161.7V181.7M532.2 154.4V136.1M532.5 161.9V171.7M533.2 154.2V137.3M533.8 154.1V128.2M534.5 154.1V141.1M534.8 154.1V137.3M536.2 161.7V175.2M536.3 161.6V187.0M537.8 154.9V131.5M540.9 160.1V174.5M542.0 156.3V151.3M542.2 160.0V173.4M542.3 156.2V148.9M543.2 155.8V147.7M545.9 156.1V150.6M546.7 156.1V150.2M547.0 160.2V171.7M547.7 155.9V142.7M549.4 160.1V167.9M551.6 156.4V150.7M552.4 156.3V142.4M554.3 160.5V178.4M555.6 160.9V182.6M556.3 155.3V146.3M557.4 160.9V174.4M558.0 155.3V146.7M560.0 155.5V148.2M560.4 160.9V181.5M561.4 154.7V144.7M561.7 161.7V191.3M562.3 162.0V181.3M563.0 161.7V177.6M563.4 154.7V134.4M564.8 155.4V139.7M565.3 155.3V143.5M565.6 161.1V170.4M565.8 155.1V145.1M567.3 161.7V175.0M568.3 154.3V138.7M568.8 154.2V142.9M570.1 154.6V141.3M571.0 155.2V127.5M571.3 155.4V132.1M571.8 160.8V182.4M572.1 161.0V175.9M572.4 161.2V187.7M573.3 161.8V180.1M573.5 154.4V140.6M573.7 162.1V172.4M574.8 154.2V141.0M575.0 162.3V186.1M575.1 162.2V184.1M575.7 162.2V179.8M578.4 155.6V142.1M578.7 155.6V136.4M579.5 154.8V122.0M579.8 154.5V144.8M580.7 153.8V115.1M581.0 153.7V110.2M581.1 162.8V198.0M581.4 162.5V199.1M581.7 154.3V144.4M582.0 154.5V139.5M582.7 155.1V130.2M583.0 161.2V175.5M583.2 155.5V128.8M583.4 161.1V178.0M583.5 161.1V174.7M583.8 155.2V142.4M584.0 155.1V143.3M584.7 154.8V137.3M584.8 161.8V194.3M585.7 154.5V136.5M586.1 154.7V124.7M586.5 154.8V130.6M586.7 161.7V173.7M587.1 161.5V192.0M587.2 161.4V174.4M587.4 161.4V178.4M587.7 161.2V174.1M587.9 155.2V128.3M588.4 161.6V175.8M590.4 162.8V201.1M590.5 154.0V141.1M591.4 162.1V193.8M591.7 154.8V140.6M592.2 161.3V191.0M592.8 154.9V139.6M592.9 154.7V140.6M593.2 162.2V185.1M593.9 163.2V184.7M594.1 153.4V141.1M595.5 153.3V107.5M595.9 163.2V214.5M596.6 162.6V185.7M597.8 154.6V128.6M598.1 154.7V130.6M598.8 161.7V178.9M599.1 161.6V184.5M599.2 155.1V134.2M599.9 155.0V127.1M600.2 161.7V198.5M600.5 161.8V196.4M600.9 162.0V179.2M601.1 154.6V141.3M601.4 162.2V199.8M601.5 154.5V121.5M602.4 162.3V180.5M603.2 162.3V175.8M603.3 162.3V175.4M604.9 162.9V206.4M605.3 163.2V184.4M605.8 153.4V118.5M607.3 153.7V136.1M608.5 154.3V139.9M609.5 162.2V198.6M609.9 162.1V193.3M611.2 162.1V185.7M611.3 154.6V123.3M611.8 162.3V200.6M612.2 162.5V191.2M612.5 154.2V119.8M612.6 162.7V194.3M612.9 162.8V193.5M613.6 154.0V139.6M614.3 153.9V139.4M615.2 163.1V213.7M615.3 163.2V186.4M616.2 154.1V117.1M616.3 162.7V182.0M616.5 162.6V185.7M616.8 162.4V175.7M617.3 162.1V195.9M618.6 162.5V190.0M619.0 154.1V117.5M619.5 153.8V128.6M619.6 153.7V133.0M620.0 153.4V129.1M621.6 162.6V185.8M621.9 154.5V118.1M622.2 154.7V126.8M622.5 162.0V171.3M623.3 154.7V132.9M623.6 154.7V123.4M624.0 154.6V130.5M624.2 162.3V175.6M625.6 163.1V196.3M625.7 153.8V128.4M626.6 163.9V188.6M626.7 153.1V113.6M627.4 164.0V185.8M628.0 153.3V131.0M628.4 163.5V190.2M628.6 153.6V111.1M628.9 163.3V193.4M629.6 163.0V192.3M630.2 163.0V193.5M630.4 153.9V129.8M630.6 163.1V178.2M630.7 163.1V176.9M632.3 154.3V136.5M632.6 154.6V144.1M632.7 154.7V141.3M633.4 155.3V132.5M633.6 161.2V170.1M634.7 155.1V143.9M634.9 155.0V133.0M635.4 162.2V173.4M635.7 154.3V120.7M636.0 162.7V173.9M636.6 162.8V179.5M638.3 161.6V179.3M639.3 161.6V181.0M640.1 161.8V187.5M640.6 154.7V136.1M641.3 154.8V140.6M642.3 161.4V178.1M644.3 160.6V176.4M647.1 156.3V148.8M654.4 165.3V186.5M654.5 166.1V187.8M660.8 148.9V112.3M669.7 150.4V127.7M671.2 148.9V116.5M679.5 170.8V202.3M681.4 143.8V105.0M686.2 148.4V121.0M689.1 149.1V126.7M690.2 165.9V193.9M693.9 164.1V186.7M697.6 163.1V180.8M702.2 152.9V135.7M704.6 153.3V136.7M705.3 163.5V181.2M714.9 151.7V129.7M716.1 165.3V190.2M717.0 165.2V183.4M717.1 151.6V128.7M718.7 150.7V129.6M719.9 166.2V185.5M722.0 165.7V183.8M726.3 164.6V186.2M739.0 156.0V150.7M742.8 160.5V168.4M745.8 161.9V176.7M747.9 148.3V116.4M748.2 148.3V117.7M748.5 171.0V207.2M761.6 166.4V188.6M761.8 166.7V189.3M762.8 168.9V203.9M764.8 149.7V125.3M769.1 166.6V187.5M770.1 166.1V185.5M775.9 151.2V128.7M780.9 149.6V124.5M782.0 168.2V195.5M785.6 169.8V207.7M800.6 164.7V182.7M800.9 150.8V133.4M804.1 164.6V181.9M805.3 165.0V185.9M806.6 165.5V184.6M807.7 148.5V116.8M809.3 168.4V200.6M810.7 146.3V114.7M814.0 151.2V130.8M816.4 147.6V121.2M820.4 150.4V125.6M822.5 164.4V187.0M830.5 160.0V165.2M833.9 156.1V148.5" fill="none" stroke="#008000" stroke-width="0.85" stroke-opacity="0.85"/>
<path d="M601.7 158.1V94.8M575.5 158.1V242.5M621.7 158.1V242.5M553.9 158.1V211.5M627.0 158.1V108.9" fill="none" stroke="#008000" stroke-width="0.9" stroke-opacity="0.6"/>
</g>
<line x1="430.5" y1="65" x2="430.5" y2="267" stroke="#484848" stroke-width="1" stroke-dasharray="1.8 2.05"/>
<line x1="469.5" y1="65" x2="469.5" y2="267" stroke="#484848" stroke-width="1" stroke-dasharray="1.8 2.05"/>
<line x1="507.5" y1="65" x2="507.5" y2="267" stroke="#484848" stroke-width="1" stroke-dasharray="1.8 2.05"/>
<line x1="546.5" y1="65" x2="546.5" y2="267" stroke="#484848" stroke-width="1" stroke-dasharray="1.8 2.05"/>
<line x1="584.5" y1="65" x2="584.5" y2="267" stroke="#484848" stroke-width="1" stroke-dasharray="1.8 2.05"/>
<line x1="623.5" y1="65" x2="623.5" y2="267" stroke="#484848" stroke-width="1" stroke-dasharray="1.8 2.05"/>
<line x1="661.5" y1="65" x2="661.5" y2="267" stroke="#484848" stroke-width="1" stroke-dasharray="1.8 2.05"/>
<line x1="700.5" y1="65" x2="700.5" y2="267" stroke="#484848" stroke-width="1" stroke-dasharray="1.8 2.05"/>
<line x1="738.5" y1="65" x2="738.5" y2="267" stroke="#484848" stroke-width="1" stroke-dasharray="1.8 2.05"/>
<line x1="777.5" y1="65" x2="777.5" y2="267" stroke="#484848" stroke-width="1" stroke-dasharray="1.8 2.05"/>
<line x1="815.5" y1="65" x2="815.5" y2="267" stroke="#484848" stroke-width="1" stroke-dasharray="1.8 2.05"/>
<line x1="430" y1="242.5" x2="840" y2="242.5" stroke="#484848" stroke-width="1" stroke-dasharray="1.8 2.05"/>
<line x1="430" y1="214.5" x2="840" y2="214.5" stroke="#484848" stroke-width="1" stroke-dasharray="1.8 2.05"/>
<line x1="430" y1="186.5" x2="840" y2="186.5" stroke="#484848" stroke-width="1" stroke-dasharray="1.8 2.05"/>
<line x1="430" y1="158.5" x2="840" y2="158.5" stroke="#484848" stroke-width="1" stroke-dasharray="1.8 2.05"/>
<line x1="430" y1="129.5" x2="840" y2="129.5" stroke="#484848" stroke-width="1" stroke-dasharray="1.8 2.05"/>
<line x1="430" y1="101.5" x2="840" y2="101.5" stroke="#484848" stroke-width="1" stroke-dasharray="1.8 2.05"/>
<line x1="430" y1="73.5" x2="840" y2="73.5" stroke="#484848" stroke-width="1" stroke-dasharray="1.8 2.05"/>
<path d="M430.5 65v4M430.5 267v-4M469.5 65v4M469.5 267v-4M507.5 65v4M507.5 267v-4M546.5 65v4M546.5 267v-4M584.5 65v4M584.5 267v-4M623.5 65v4M623.5 267v-4M661.5 65v4M661.5 267v-4M700.5 65v4M700.5 267v-4M738.5 65v4M738.5 267v-4M777.5 65v4M777.5 267v-4M815.5 65v4M815.5 267v-4M430 242.5h4M840 242.5h-4M430 214.5h4M840 214.5h-4M430 186.5h4M840 186.5h-4M430 158.5h4M840 158.5h-4M430 129.5h4M840 129.5h-4M430 101.5h4M840 101.5h-4M430 73.5h4M840 73.5h-4" stroke="#404040" stroke-width="1"/>
<rect x="430.5" y="65.5" width="409" height="201" fill="none" stroke="#404040" stroke-width="1"/>
<text x="428" y="245.5" text-anchor="end" font-family="Liberation Sans" font-size="8.3" fill="#262626">-0.6</text>
<text x="428" y="217.3" text-anchor="end" font-family="Liberation Sans" font-size="8.3" fill="#262626">-0.4</text>
<text x="428" y="189.2" text-anchor="end" font-family="Liberation Sans" font-size="8.3" fill="#262626">-0.2</text>
<text x="428" y="161.1" text-anchor="end" font-family="Liberation Sans" font-size="8.3" fill="#262626">0</text>
<text x="428" y="133.0" text-anchor="end" font-family="Liberation Sans" font-size="8.3" fill="#262626">0.2</text>
<text x="428" y="104.9" text-anchor="end" font-family="Liberation Sans" font-size="8.3" fill="#262626">0.4</text>
<text x="428" y="76.7" text-anchor="end" font-family="Liberation Sans" font-size="8.3" fill="#262626">0.6</text>
<text x="430.8" y="277" text-anchor="middle" font-family="Liberation Sans" font-size="8.3" fill="#262626">0</text>
<text x="469.3" y="277" text-anchor="middle" font-family="Liberation Sans" font-size="8.3" fill="#262626">10</text>
<text x="507.8" y="277" text-anchor="middle" font-family="Liberation Sans" font-size="8.3" fill="#262626">20</text>
<text x="546.2" y="277" text-anchor="middle" font-family="Liberation Sans" font-size="8.3" fill="#262626">30</text>
<text x="584.7" y="277" text-anchor="middle" font-family="Liberation Sans" font-size="8.3" fill="#262626">40</text>
<text x="623.2" y="277" text-anchor="middle" font-family="Liberation Sans" font-size="8.3" fill="#262626">50</text>
<text x="661.7" y="277" text-anchor="middle" font-family="Liberation Sans" font-size="8.3" fill="#262626">60</text>
<text x="700.2" y="277" text-anchor="middle" font-family="Liberation Sans" font-size="8.3" fill="#262626">70</text>
<text x="738.6" y="277" text-anchor="middle" font-family="Liberation Sans" font-size="8.3" fill="#262626">80</text>
<text x="777.1" y="277" text-anchor="middle" font-family="Liberation Sans" font-size="8.3" fill="#262626">90</text>
<text x="815.6" y="277" text-anchor="middle" font-family="Liberation Sans" font-size="8.3" fill="#262626">100</text>
<text x="634.5" y="287.5" text-anchor="middle" font-family="Liberation Sans" font-size="8.7" fill="#262626">Time [sec]</text>
<text x="634.5" y="58.8" text-anchor="middle" font-family="Liberation Sans" font-size="8.3" fill="#262626">Editing of Susp_15kph_Z_1kHz_15HzLPF_A_achieved</text>
<text transform="translate(407,166) rotate(-90)" text-anchor="middle" font-family="Liberation Sans" font-size="8.3" fill="#262626">[g]</text>
<rect x="785.5" y="70.5" width="50" height="28" fill="#fff" stroke="#333" stroke-width="1"/>
<line x1="790" y1="77.7" x2="816" y2="77.7" stroke="#7878e6" stroke-width="1.1"/>
<line x1="790" y1="90.2" x2="816" y2="90.2" stroke="#78b478" stroke-width="1.1"/>
<text x="820.8" y="81.3" font-family="Liberation Sans" font-size="9.5" fill="#262626">#0</text><text x="820.8" y="93.8" font-family="Liberation Sans" font-size="9.5" fill="#262626">#1</text>
<rect x="430" y="316" width="410" height="203" fill="#fff"/>
<line x1="441.5" y1="316" x2="441.5" y2="519" stroke="#484848" stroke-width="1" stroke-dasharray="1.8 2.05"/>
<line x1="450.5" y1="316" x2="450.5" y2="519" stroke="#484848" stroke-width="1" stroke-dasharray="1.8 2.05"/>
<line x1="458.5" y1="316" x2="458.5" y2="519" stroke="#484848" stroke-width="1" stroke-dasharray="1.8 2.05"/>
<line x1="465.5" y1="316" x2="465.5" y2="519" stroke="#484848" stroke-width="1" stroke-dasharray="1.8 2.05"/>
<line x1="471.5" y1="316" x2="471.5" y2="519" stroke="#484848" stroke-width="1" stroke-dasharray="1.8 2.05"/>
<line x1="512.5" y1="316" x2="512.5" y2="519" stroke="#484848" stroke-width="1" stroke-dasharray="1.8 2.05"/>
<line x1="536.5" y1="316" x2="536.5" y2="519" stroke="#484848" stroke-width="1" stroke-dasharray="1.8 2.05"/>
<line x1="553.5" y1="316" x2="553.5" y2="519" stroke="#484848" stroke-width="1" stroke-dasharray="1.8 2.05"/>
<line x1="566.5" y1="316" x2="566.5" y2="519" stroke="#484848" stroke-width="1" stroke-dasharray="1.8 2.05"/>
<line x1="577.5" y1="316" x2="577.5" y2="519" stroke="#484848" stroke-width="1" stroke-dasharray="1.8 2.05"/>
<line x1="586.5" y1="316" x2="586.5" y2="519" stroke="#484848" stroke-width="1" stroke-dasharray="1.8 2.05"/>
<line x1="594.5" y1="316" x2="594.5" y2="519" stroke="#484848" stroke-width="1" stroke-dasharray="1.8 2.05"/>
<line x1="601.5" y1="316" x2="601.5" y2="519" stroke="#484848" stroke-width="1" stroke-dasharray="1.8 2.05"/>
<line x1="607.5" y1="316" x2="607.5" y2="519" stroke="#484848" stroke-width="1" stroke-dasharray="1.8 2.05"/>
<line x1="648.5" y1="316" x2="648.5" y2="519" stroke="#484848" stroke-width="1" stroke-dasharray="1.8 2.05"/>
<line x1="672.5" y1="316" x2="672.5" y2="519" stroke="#484848" stroke-width="1" stroke-dasharray="1.8 2.05"/>
<line x1="689.5" y1="316" x2="689.5" y2="519" stroke="#484848" stroke-width="1" stroke-dasharray="1.8 2.05"/>
<line x1="702.5" y1="316" x2="702.5" y2="519" stroke="#484848" stroke-width="1" stroke-dasharray="1.8 2.05"/>
<line x1="713.5" y1="316" x2="713.5" y2="519" stroke="#484848" stroke-width="1" stroke-dasharray="1.8 2.05"/>
<line x1="722.5" y1="316" x2="722.5" y2="519" stroke="#484848" stroke-width="1" stroke-dasharray="1.8 2.05"/>
<line x1="730.5" y1="316" x2="730.5" y2="519" stroke="#484848" stroke-width="1" stroke-dasharray="1.8 2.05"/>
<line x1="737.5" y1="316" x2="737.5" y2="519" stroke="#484848" stroke-width="1" stroke-dasharray="1.8 2.05"/>
<line x1="743.5" y1="316" x2="743.5" y2="519" stroke="#484848" stroke-width="1" stroke-dasharray="1.8 2.05"/>
<line x1="784.5" y1="316" x2="784.5" y2="519" stroke="#484848" stroke-width="1" stroke-dasharray="1.8 2.05"/>
<line x1="808.5" y1="316" x2="808.5" y2="519" stroke="#484848" stroke-width="1" stroke-dasharray="1.8 2.05"/>
<line x1="825.5" y1="316" x2="825.5" y2="519" stroke="#484848" stroke-width="1" stroke-dasharray="1.8 2.05"/>
<line x1="838.5" y1="316" x2="838.5" y2="519" stroke="#484848" stroke-width="1" stroke-dasharray="1.8 2.05"/>
<line x1="430" y1="329.5" x2="840" y2="329.5" stroke="#484848" stroke-width="1" stroke-dasharray="1.8 2.05"/>
<line x1="430" y1="367.5" x2="840" y2="367.5" stroke="#484848" stroke-width="1" stroke-dasharray="1.8 2.05"/>
<line x1="430" y1="405.5" x2="840" y2="405.5" stroke="#484848" stroke-width="1" stroke-dasharray="1.8 2.05"/>
<line x1="430" y1="442.5" x2="840" y2="442.5" stroke="#484848" stroke-width="1" stroke-dasharray="1.8 2.05"/>
<line x1="430" y1="480.5" x2="840" y2="480.5" stroke="#484848" stroke-width="1" stroke-dasharray="1.8 2.05"/>
<clipPath id="c2"><rect x="430" y="316" width="410" height="203"/></clipPath>
<g clip-path="url(#c2)">
<polyline points="430.5,374.9 451.5,365.4 471.5,358.3 474.9,358.3 494.3,360.2 511.9,353.2 525.7,336.2 536.4,338.1 545.2,347.5 553.0,351.3 560.4,367.1 566.6,362.0 572.3,349.2 577.4,330.0 582.1,339.8 586.5,358.3 589.8,359.2 598.0,364.9 607.6,373.7 612.7,375.6 620.3,363.9 630.0,364.7 633.5,372.8 639.0,369.2 642.0,354.7 646.2,365.6 650.0,371.1 657.3,367.3 663.6,374.5 671.7,390.9 675.6,389.0 682.7,387.3 690.0,401.6 701.5,435.2 709.0,457.8 711.0,459.7 711.7,442.8 712.1,456.0 719.1,459.7 743.7,469.5 782.9,477.1 808.6,481.4 837.4,485.6 838.2,480.5 838.8,486.1" fill="none" stroke="#2020ff" stroke-width="0.9"/>
<polyline points="430.5,375.6 451.5,366.0 471.5,358.6 474.9,358.6 494.3,360.5 511.9,353.2 525.7,335.8 536.4,338.7 545.2,347.5 553.0,352.2 560.4,367.1 566.6,362.0 572.3,349.2 577.4,333.4 582.1,340.9 586.5,358.3 589.8,359.2 598.0,364.9 607.6,373.7 612.7,375.6 620.3,363.9 630.0,376.4 640.7,372.8 648.3,371.1 654.2,374.9 660.8,379.0 669.9,383.5 675.6,389.0 682.7,387.3 690.0,401.6 701.5,435.2 709.0,457.8 710.5,461.6 719.1,466.3 743.7,473.9 782.9,483.9 808.6,488.0 837.4,492.7 838.8,493.7" fill="none" stroke="#2a8a2a" stroke-width="0.9"/>
</g>
<path d="M441.5 316v2.5M441.5 519v-2.5M450.5 316v2.5M450.5 519v-2.5M458.5 316v2.5M458.5 519v-2.5M465.5 316v2.5M465.5 519v-2.5M471.5 316v4M471.5 519v-4M512.5 316v2.5M512.5 519v-2.5M536.5 316v2.5M536.5 519v-2.5M553.5 316v2.5M553.5 519v-2.5M566.5 316v2.5M566.5 519v-2.5M577.5 316v2.5M577.5 519v-2.5M586.5 316v2.5M586.5 519v-2.5M594.5 316v2.5M594.5 519v-2.5M601.5 316v2.5M601.5 519v-2.5M607.5 316v4M607.5 519v-4M648.5 316v2.5M648.5 519v-2.5M672.5 316v2.5M672.5 519v-2.5M689.5 316v2.5M689.5 519v-2.5M702.5 316v2.5M702.5 519v-2.5M713.5 316v2.5M713.5 519v-2.5M722.5 316v2.5M722.5 519v-2.5M730.5 316v2.5M730.5 519v-2.5M737.5 316v2.5M737.5 519v-2.5M743.5 316v4M743.5 519v-4M784.5 316v2.5M784.5 519v-2.5M808.5 316v2.5M808.5 519v-2.5M825.5 316v2.5M825.5 519v-2.5M838.5 316v2.5M838.5 519v-2.5M430 518.5h4M840 518.5h-4M430 499.5h2.5M840 499.5h-2.5M430 480.5h4M840 480.5h-4M430 461.5h2.5M840 461.5h-2.5M430 442.5h4M840 442.5h-4M430 423.5h2.5M840 423.5h-2.5M430 405.5h4M840 405.5h-4M430 386.5h2.5M840 386.5h-2.5M430 367.5h4M840 367.5h-4M430 348.5h2.5M840 348.5h-2.5M430 329.5h4M840 329.5h-4" stroke="#404040" stroke-width="1"/>
<rect x="430.5" y="316.5" width="409" height="202" fill="none" stroke="#404040" stroke-width="1"/>
<text x="416.5" y="333.6" text-anchor="end" font-family="Liberation Sans" font-size="8.3" fill="#262626">10</text>
<text x="417.5" y="324.6" font-family="Liberation Sans" font-size="7.5" fill="#262626">-2</text>
<text x="416.5" y="371.3" text-anchor="end" font-family="Liberation Sans" font-size="8.3" fill="#262626">10</text>
<text x="417.5" y="362.3" font-family="Liberation Sans" font-size="7.5" fill="#262626">-4</text>
<text x="416.5" y="409.0" text-anchor="end" font-family="Liberation Sans" font-size="8.3" fill="#262626">10</text>
<text x="417.5" y="400.0" font-family="Liberation Sans" font-size="7.5" fill="#262626">-6</text>
<text x="416.5" y="446.8" text-anchor="end" font-family="Liberation Sans" font-size="8.3" fill="#262626">10</text>
<text x="417.5" y="437.8" font-family="Liberation Sans" font-size="7.5" fill="#262626">-8</text>
<text x="416.5" y="484.5" text-anchor="end" font-family="Liberation Sans" font-size="8.3" fill="#262626">10</text>
<text x="417.5" y="475.5" font-family="Liberation Sans" font-size="7.5" fill="#262626">-10</text>
<text x="473.5" y="537" text-anchor="end" font-family="Liberation Sans" font-size="8.3" fill="#262626">10</text>
<text x="474.0" y="528" font-family="Liberation Sans" font-size="7.5" fill="#262626">0</text>
<text x="609.6" y="537" text-anchor="end" font-family="Liberation Sans" font-size="8.3" fill="#262626">10</text>
<text x="610.1" y="528" font-family="Liberation Sans" font-size="7.5" fill="#262626">1</text>
<text x="745.7" y="537" text-anchor="end" font-family="Liberation Sans" font-size="8.3" fill="#262626">10</text>
<text x="746.2" y="528" font-family="Liberation Sans" font-size="7.5" fill="#262626">2</text>
<text x="633.5" y="547.5" text-anchor="middle" font-family="Liberation Sans" font-size="8.7" fill="#262626">Frequency [Hz]</text>
<text x="634.5" y="311" text-anchor="middle" font-family="Liberation Sans" font-size="8.3" fill="#262626">PSD - Editing of Susp_15kph_Z_1kHz_15HzLPF_A_achieved</text>
<text transform="translate(400,417) rotate(-90)" text-anchor="middle" font-family="Liberation Sans" font-size="8.3" fill="#262626">[g]<tspan font-size="6" dy="-3">2</tspan><tspan dy="3">/Hz</tspan></text>
<rect x="785.5" y="321.5" width="50" height="28" fill="#fff" stroke="#333" stroke-width="1"/>
<line x1="790" y1="329.2" x2="816" y2="329.2" stroke="#6868e6" stroke-width="1"/>
<line x1="790" y1="341.4" x2="816" y2="341.4" stroke="#5a9a5a" stroke-width="1"/>
<text x="821" y="332.2" font-family="Liberation Sans" font-size="9.5" fill="#262626">#0</text><text x="821" y="345.7" font-family="Liberation Sans" font-size="9.5" fill="#262626">#1</text></svg></body></html>
